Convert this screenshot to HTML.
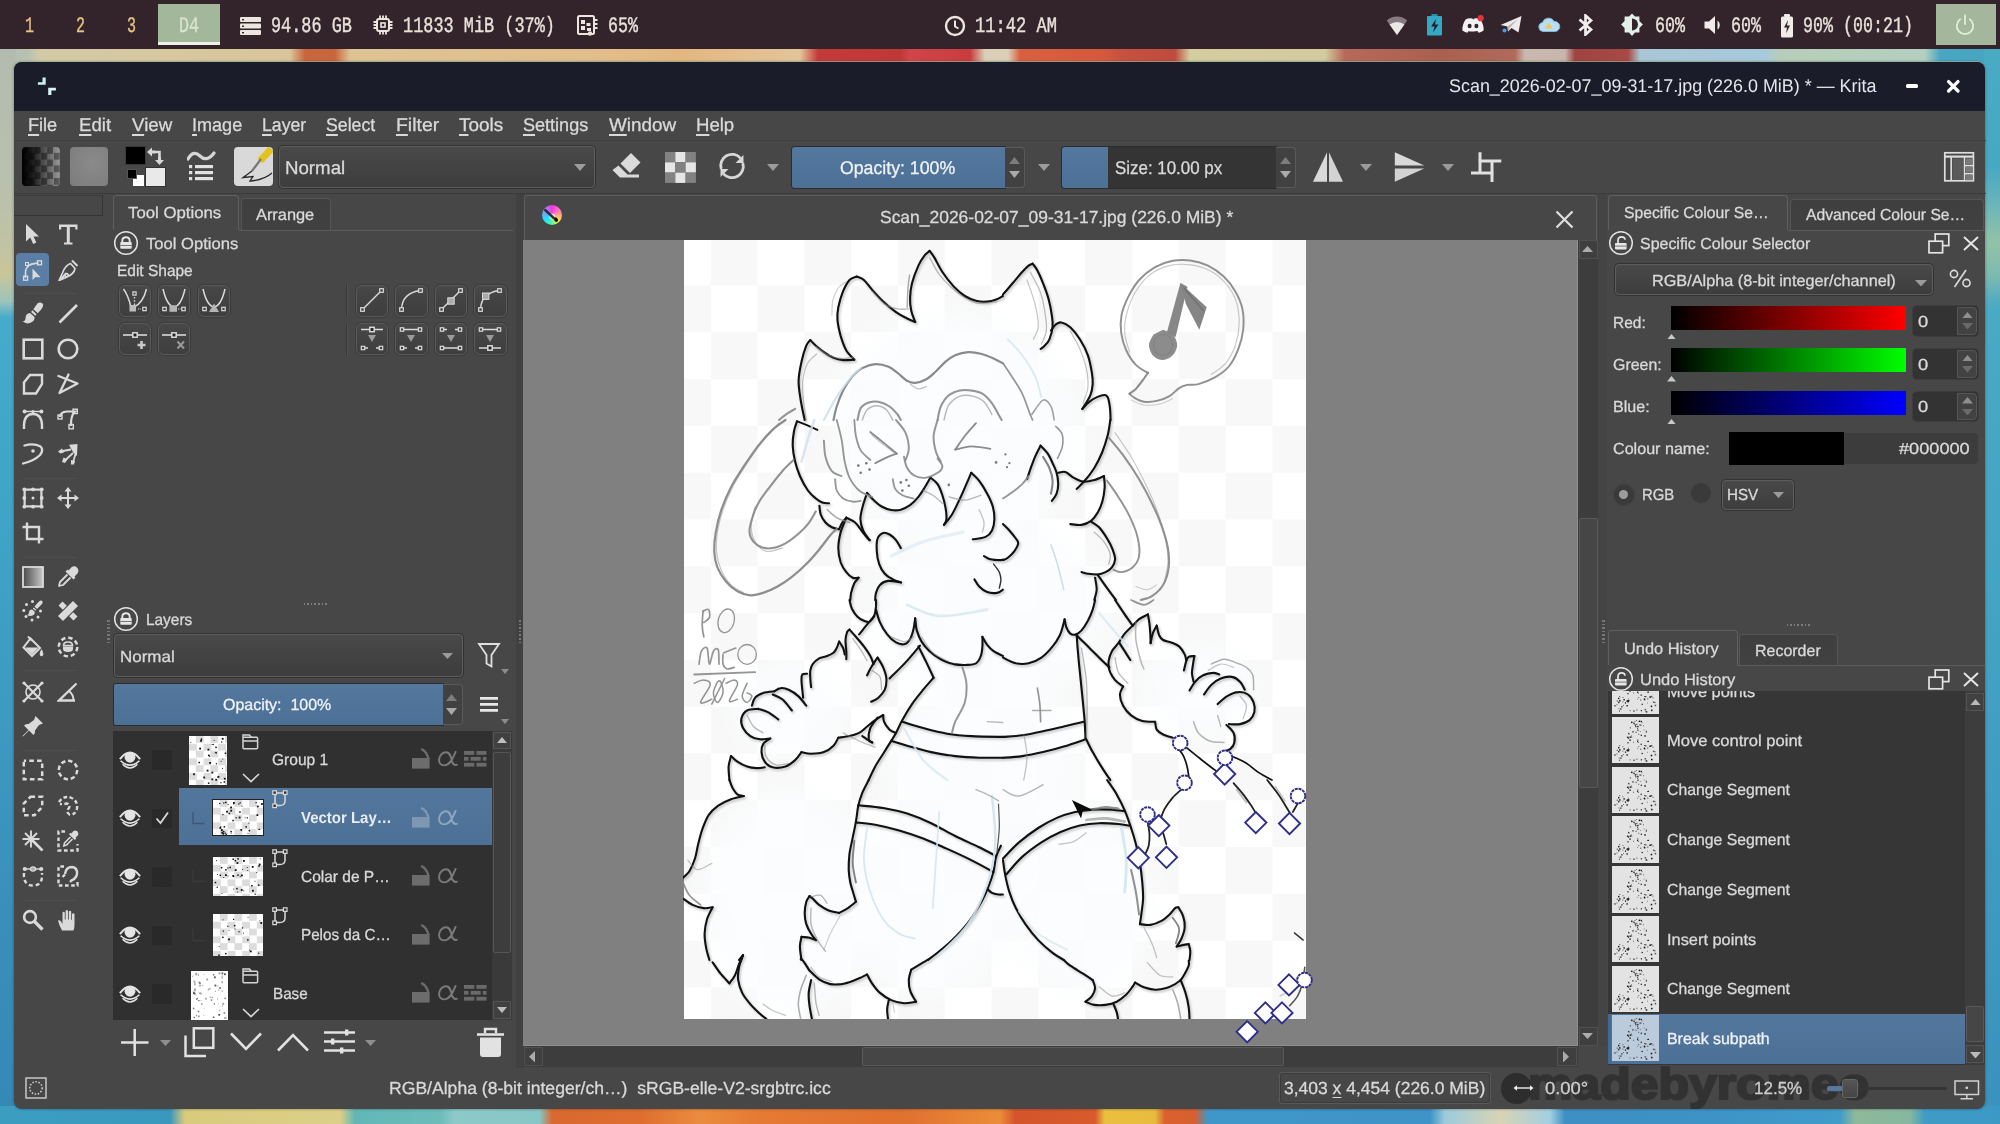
<!DOCTYPE html>
<html><head><meta charset="utf-8"><title>Krita</title><style>
html,body{margin:0;padding:0;}
body{width:2000px;height:1124px;overflow:hidden;position:relative;background:#3a8fb0;font-family:"Liberation Sans",sans-serif;color:#d8d8d8;}
.t{position:absolute;white-space:pre;line-height:1;transform-origin:0 50%;color:#d9d9d9;text-rendering:geometricPrecision;}
.s{-webkit-text-stroke:0.3px currentColor;}
.m{font-family:"Liberation Mono",monospace;-webkit-text-stroke:0.4px currentColor;}
div,svg,span{box-sizing:border-box;}

.combo{position:absolute;border:1px solid #5c5c5c;border-radius:4px;background:linear-gradient(#494949,#3d3d3d);box-shadow:0 0 0 1px #333;}
.sld{position:absolute;border-radius:3px;box-shadow:0 0 0 1px #2c2c2c;}
.blue{background:linear-gradient(#54789d,#4c7096);}

.tab{position:absolute;border:1px solid #5b5b5b;border-bottom:none;border-radius:4px 4px 0 0;}
.tab.on{background:#474747;border-color:#606060;}
.tab.off{background:linear-gradient(#3f3f3f,#414141);border-color:#555;}
.btn{position:absolute;border:1.5px solid #5a5a5a;border-radius:6px;background:linear-gradient(#474747,#3e3e3e);box-shadow:0 0 0 1px #3b3b3b;}
</style></head>
<body><div style="position:absolute;left:0px;top:49px;width:2000px;height:1075px;background:#47a0c2;"></div><div style="position:absolute;left:0px;top:49px;width:2000px;height:14px;background:linear-gradient(90deg,#b3bdb0 0.00%,#b9c1b0 1.40%,#d2c9a6 2.00%,#d6c8a0 7.50%,#d9c59b 14.50%,#c9653d 15.25%,#c9653d 16.75%,#ddc394 17.50%,#e2bd8b 30.00%,#e4b680 34.00%,#e3c49a 40.00%,#c43a3a 40.90%,#bf3838 45.00%,#d0454a 45.50%,#c93b3d 48.50%,#dccfb8 49.25%,#dccfb8 50.40%,#d9603f 51.00%,#d4583d 55.25%,#c8513f 56.00%,#bd4b3e 58.75%,#d5cda0 59.50%,#d3cb9f 66.25%,#b7685a 67.25%,#a9604f 72.00%,#b06a5c 75.75%,#c9b9ae 76.25%,#c9b5ad 78.25%,#a04343 78.75%,#a74a44 81.40%,#a9c6d6 82.00%,#a6c9dc 88.25%,#b7cdb9 89.00%,#b3cfc0 96.25%,#4aa6c2 97.00%,#46a4c4 100.00%);"></div><div style="position:absolute;left:0px;top:49px;width:16px;height:1075px;background:linear-gradient(#b2bcae 0,#b8c0ae 12%,#c0c3a4 18%,#c9c59a 21%,#9cc4bd 23.5%,#46aacb 25%,#3fa6c8 40%,#3d9bc2 60%,#3a8fba 80%,#3488b6 100%);"></div><div style="position:absolute;left:1984px;top:49px;width:16px;height:1075px;background:linear-gradient(#49aac4 0,#47a8c2 11%,#66b3bb 14%,#93c2a8 18%,#7dbab0 21%,#4aa9c3 24%,#44a4c3 50%,#3f9ac0 75%,#3b92bd 100%);"></div><div style="position:absolute;left:0px;top:1106px;width:2000px;height:18px;background:linear-gradient(90deg,#3b9ec1 0.00%,#3a98bd 8.50%,#d9cb7c 9.25%,#dccf88 17.00%,#62b7b6 17.75%,#6cbcba 22.00%,#8ccac8 22.75%,#86c6c4 27.00%,#d9682f 27.60%,#de6e30 32.00%,#ea8c3e 35.00%,#e57a33 38.00%,#e0702f 45.00%,#ea8d38 50.00%,#d5552b 50.75%,#d85a2c 54.75%,#e9c040 55.25%,#e8bb3e 57.75%,#d9622f 58.25%,#d6602f 59.75%,#3f97c9 60.40%,#3e93c7 71.50%,#9ccbdc 72.25%,#d8d4b4 75.00%,#a3cfe0 77.50%,#3d8fc4 78.25%,#3d92c6 85.00%,#409cc9 92.00%,#8fb99a 92.75%,#86b89f 95.50%,#3e9cc6 96.25%,#3c98c4 100.00%);"></div><div style="position:absolute;left:0px;top:0px;width:2000px;height:49px;background:#33232a;"></div><span class="t m" style="left:25.0px;top:16.00px;font-size:22.2px;transform:scaleX(0.6756);color:#e6c384;">1</span><span class="t m" style="left:76.0px;top:16.00px;font-size:22.2px;transform:scaleX(0.6756);color:#e6c384;">2</span><span class="t m" style="left:127.0px;top:16.00px;font-size:22.2px;transform:scaleX(0.6756);color:#e6c384;">3</span><div style="position:absolute;left:158px;top:4px;width:62px;height:41px;background:#a3b79a;border-bottom:3px solid #eef0e4;"></div><span class="t m" style="left:179.0px;top:16.00px;font-size:22.2px;transform:scaleX(0.7506);color:#d9e4cf;">D4</span><svg style="position:absolute;left:240px;top:17px;" width="22" height="18" viewBox="0 0 22 18"><g fill="#ece6de"><rect x="0" y="0" width="21" height="5" rx="1"/><rect x="0" y="6.5" width="21" height="5" rx="1"/><rect x="0" y="13" width="21" height="5" rx="1"/></g><g fill="#33232a"><rect x="2" y="2" width="2" height="1.4"/><rect x="2" y="8.5" width="2" height="1.4"/><rect x="2" y="15" width="2" height="1.4"/></g></svg><span class="t m" style="left:271.0px;top:16.00px;font-size:22.2px;transform:scaleX(0.7600);color:#e9e2da;">94.86 GB</span><svg style="position:absolute;left:373px;top:15px;" width="20" height="20" viewBox="0 0 20 20"><g fill="none" stroke="#ece6de" stroke-width="2"><rect x="4" y="4" width="12" height="12" rx="2"/><rect x="8" y="8" width="4" height="4" stroke-width="1.6"/></g><g stroke="#ece6de" stroke-width="1.8"><path d="M7 0.5V4M7 16V19.5M0.5 7H4M16 7H19.5"/><path d="M10 0.5V4M10 16V19.5M0.5 10H4M16 10H19.5"/><path d="M13 0.5V4M13 16V19.5M0.5 13H4M16 13H19.5"/></g></svg><span class="t m" style="left:403.0px;top:16.00px;font-size:22.2px;transform:scaleX(0.7606);color:#e9e2da;">11833 MiB (37%)</span><svg style="position:absolute;left:577px;top:15px;" width="22" height="22" viewBox="0 0 22 22"><g fill="none" stroke="#ece6de" stroke-width="2"><rect x="1" y="1" width="16" height="18" rx="1.5"/></g><g fill="#ece6de"><rect x="4" y="5" width="4" height="4"/><rect x="4" y="11" width="4" height="4"/><rect x="9.5" y="8" width="4" height="3"/><rect x="10" y="13" width="4" height="3"/><rect x="17" y="4" width="3.5" height="2"/><rect x="17" y="8" width="3.5" height="2"/><rect x="17" y="12" width="3.5" height="2"/><circle cx="13" cy="18.5" r="2.2"/></g></svg><span class="t m" style="left:608.0px;top:16.00px;font-size:22.2px;transform:scaleX(0.7506);color:#e9e2da;">65%</span><svg style="position:absolute;left:944px;top:15px;" width="22" height="22" viewBox="0 0 22 22"><circle cx="11" cy="11" r="9" fill="none" stroke="#ece6de" stroke-width="2.4"/><path d="M11 5.5V11.5L14.5 13.5" fill="none" stroke="#ece6de" stroke-width="2"/></svg><span class="t m" style="left:975.0px;top:16.00px;font-size:22.2px;transform:scaleX(0.7694);color:#e9e2da;">11:42 AM</span><svg style="position:absolute;left:1386px;top:14px;" width="22" height="22" viewBox="0 0 22 22"><path d="M11 21L0.8 6.5A15 15 0 0 1 21.2 6.5Z" fill="#857b80"/><path d="M11 21L3.6 10.6A11.5 11.5 0 0 1 18.4 10.6Z" fill="#ece8e6"/></svg><svg style="position:absolute;left:1426px;top:14px;" width="18" height="22" viewBox="0 0 18 22"><rect x="5.5" y="0" width="6" height="3" fill="#2b8ea6"/><rect x="1" y="2" width="15" height="19.5" rx="1" fill="#35a9c4"/><path d="M10 5L5 12.5H8.5L7 18.5L12.5 10.5H9Z" fill="#2a2030"/></svg><svg style="position:absolute;left:1461px;top:15px;" width="26" height="20" viewBox="0 0 26 20"><path d="M4.5 4.5Q8 2.6 11.5 3.6L12 4.5Q11.8 4.4 12.5 4.4L13 3.6Q16.5 2.6 19.5 4.5Q23 10 22.6 15.5Q20 17.6 17.6 17.8L16.4 16Q8.5 17 7.6 16L6.4 17.8Q4 17.6 1.4 15.5Q1 10 4.5 4.5Z" fill="#f3f1f2"/><ellipse cx="8.6" cy="11" rx="2" ry="2.3" fill="#33232a"/><ellipse cx="15.4" cy="11" rx="2" ry="2.3" fill="#33232a"/><circle cx="19.6" cy="3.2" r="3.1" fill="#e0363c"/></svg><svg style="position:absolute;left:1499px;top:14px;" width="24" height="20" viewBox="0 0 24 20"><path d="M1.5 11L22.5 2L19.5 18.5L12.5 14L9 17.5L8.5 12.5Z" fill="#eeeaea"/><path d="M8.5 12.5L19 5L11 13.5L9 17.5Z" fill="#b9b2b6"/><circle cx="5.5" cy="16.5" r="2" fill="#4b9be8"/></svg><svg style="position:absolute;left:1537px;top:17px;" width="24" height="16" viewBox="0 0 24 16"><path d="M6 14.5A4.5 4.5 0 0 1 5.5 5.6A6.2 6.2 0 0 1 17 4.6A5 5 0 0 1 18.5 14.5Z" fill="#b9def3" stroke="#7fb6dc" stroke-width="1"/><path d="M12 5.5L15.5 11.5H8.5Z" fill="#f1c84b"/></svg><svg style="position:absolute;left:1577px;top:14px;" width="18" height="22" viewBox="0 0 18 22"><path d="M2.5 5.5L14 15.5L8.5 20.5V1.5L14 6.5L2.5 16.5" fill="none" stroke="#f2eeee" stroke-width="2.7" stroke-linejoin="miter"/></svg><svg style="position:absolute;left:1620px;top:13px;" width="24" height="24" viewBox="0 0 24 24"><g fill="#e3efe9"><path d="M12 0.5L15 3.6L19.4 3.6L19.4 8L22.9 11.5L19.4 15L19.4 19.4L15 19.4L12 22.9L9 19.4L4.6 19.4L4.6 15L1.1 11.5L4.6 8L4.6 3.6L9 3.6Z"/></g><path d="M12 5.5A6 6 0 0 1 12 17.5Z" fill="#33232a"/></svg><span class="t m" style="left:1655.0px;top:16.00px;font-size:22.2px;transform:scaleX(0.7506);color:#e9e2da;">60%</span><svg style="position:absolute;left:1704px;top:15px;" width="18" height="20" viewBox="0 0 18 20"><path d="M0.5 6.5H5L11 1V19L5 13.5H0.5Z" fill="#f0ecea"/><path d="M13.5 5.5A5.5 5.5 0 0 1 13.5 14.5Z" fill="#f0ecea"/></svg><span class="t m" style="left:1731.0px;top:16.00px;font-size:22.2px;transform:scaleX(0.7506);color:#e9e2da;">60%</span><svg style="position:absolute;left:1780px;top:14px;" width="14" height="24" viewBox="0 0 14 24"><rect x="4" y="0" width="6" height="3" rx="1" fill="#f0ecea"/><rect x="1" y="2.5" width="12" height="21" rx="1.5" fill="#f0ecea"/><path d="M8 6L4 13.5H7L6 19.5L10 11.5H7Z" fill="#33232a"/></svg><span class="t m" style="left:1803.0px;top:16.00px;font-size:22.2px;transform:scaleX(0.7506);color:#e9e2da;">90% (00:21)</span><div style="position:absolute;left:1936px;top:4px;width:60px;height:41px;background:#a4b79c;"></div><svg style="position:absolute;left:1953px;top:13px;" width="24" height="24" viewBox="0 0 24 24"><path d="M7.2 6.2A8.2 8.2 0 1 0 16.8 6.2" fill="none" stroke="#e0f0d6" stroke-width="1.8" stroke-linecap="round"/><path d="M12 2.5V11" stroke="#e0f0d6" stroke-width="1.8" stroke-linecap="round"/></svg><div style="position:absolute;left:14.4px;top:62px;width:1971px;height:1047px;background:#474747;border-radius:8px;overflow:hidden;box-shadow:0 -1px 0 rgba(150,178,150,.7),0 0 3px rgba(0,0,0,.4);"><div style="position:absolute;left:0px;top:0px;width:1972px;height:48.5px;background:#1b1c2a;"></div></div><svg style="position:absolute;left:37px;top:76px;" width="20" height="20" viewBox="0 0 20 20"><path d="M5.5 1.4H8.7V8.7H0.9V6.2H5.5Z" fill="#c9f2ee"/><path d="M11.2 11.7H18.9V14.6H14.4V19H11.2Z" fill="#d6f6f6"/></svg><span class="t s" style="left:1449.2px;top:77.00px;font-size:18.4px;transform:scaleX(0.9747);color:#e4e4ea;-webkit-text-stroke:0;">Scan_2026-02-07_09-31-17.jpg (226.0 MiB) * — Krita</span><div style="position:absolute;left:1905.8px;top:84.4px;width:12.3px;height:3.8px;background:#fff;border-radius:1.5px;"></div><svg style="position:absolute;left:1946px;top:79px;" width="15" height="15" viewBox="0 0 15 15"><path d="M2.6 2.6L12 12M12 2.6L2.6 12" stroke="#fff" stroke-width="3.3" stroke-linecap="round"/></svg><span class="t s" style="left:28.2px;top:116.00px;font-size:18.4px;transform:scaleX(0.9849);"><u style="text-decoration-thickness:1.8px;text-underline-offset:3px">F</u>ile</span><span class="t s" style="left:79.2px;top:116.00px;font-size:18.4px;transform:scaleX(1.0156);"><u style="text-decoration-thickness:1.8px;text-underline-offset:3px">E</u>dit</span><span class="t s" style="left:132.2px;top:116.00px;font-size:18.4px;transform:scaleX(1.0164);"><u style="text-decoration-thickness:1.8px;text-underline-offset:3px">V</u>iew</span><span class="t s" style="left:192.2px;top:116.00px;font-size:18.4px;transform:scaleX(0.9816);"><u style="text-decoration-thickness:1.8px;text-underline-offset:3px">I</u>mage</span><span class="t s" style="left:262.2px;top:116.00px;font-size:18.4px;transform:scaleX(0.9603);"><u style="text-decoration-thickness:1.8px;text-underline-offset:3px">L</u>ayer</span><span class="t s" style="left:326.2px;top:116.00px;font-size:18.4px;transform:scaleX(0.9621);"><u style="text-decoration-thickness:1.8px;text-underline-offset:3px">S</u>elect</span><span class="t s" style="left:396.2px;top:116.00px;font-size:18.4px;transform:scaleX(1.0565);"><u style="text-decoration-thickness:1.8px;text-underline-offset:3px">F</u>ilter</span><span class="t s" style="left:459.2px;top:116.00px;font-size:18.4px;transform:scaleX(1.0290);"><u style="text-decoration-thickness:1.8px;text-underline-offset:3px">T</u>ools</span><span class="t s" style="left:523.2px;top:116.00px;font-size:18.4px;transform:scaleX(0.9807);"><u style="text-decoration-thickness:1.8px;text-underline-offset:3px">S</u>ettings</span><span class="t s" style="left:609.2px;top:116.00px;font-size:18.4px;transform:scaleX(1.0269);"><u style="text-decoration-thickness:1.8px;text-underline-offset:3px">W</u>indow</span><span class="t s" style="left:696.2px;top:116.00px;font-size:18.4px;transform:scaleX(1.0094);"><u style="text-decoration-thickness:1.8px;text-underline-offset:3px">H</u>elp</span><div style="position:absolute;left:14px;top:140px;width:1972px;height:1px;background:#404040;"></div><div style="position:absolute;left:22px;top:147px;width:38px;height:39px;border-radius:4px;overflow:hidden;background:linear-gradient(90deg,#000 0%,rgba(0,0,0,.85) 25%,rgba(0,0,0,0) 100%),repeating-conic-gradient(#9a9a9a 0 25%,#5e5e5e 0 50%) 0 0/12.6px 12.6px;"></div><div style="position:absolute;left:70px;top:147px;width:38px;height:39px;border-radius:4px;background:radial-gradient(circle at 60% 40%,#8a8a8a,#7c7c7c);"></div><div style="position:absolute;left:125.5px;top:147px;width:19px;height:17px;background:#000;box-shadow:0 0 0 1px #3a3a3a;"></div><div style="position:absolute;left:146px;top:167.5px;width:18.5px;height:18.5px;background:#e9e9e9;box-shadow:0 0 0 1px #333;"></div><div style="position:absolute;left:133px;top:175px;width:10.5px;height:10.5px;background:#fff;"></div><div style="position:absolute;left:126.5px;top:168.5px;width:10.5px;height:10.5px;background:#000;border:1px solid #555;"></div><svg style="position:absolute;left:146px;top:147px;" width="19" height="19" viewBox="0 0 19 19"><path d="M1 5L6 0.5V3.5H9V6.5H6V9.5Z" fill="#d8d8d8"/><path d="M13.5 18L9 13H12V10H15V13H18Z" fill="#d8d8d8"/><path d="M8 5H13.5V11" fill="none" stroke="#d8d8d8" stroke-width="2.6"/></svg><svg style="position:absolute;left:187px;top:150px;" width="29" height="32" viewBox="0 0 29 32"><path d="M1 9C5 2 9 2 13 6S22 10 27 3" fill="none" stroke="#d6d6d6" stroke-width="3.2" stroke-linecap="round"/><g fill="#e2e2e2"><rect x="2" y="15" width="3.2" height="3.2"/><rect x="8" y="15" width="18" height="3.2"/><rect x="2" y="21" width="3.2" height="3.2"/><rect x="8" y="21" width="18" height="3.2"/><rect x="2" y="27" width="3.2" height="3.2"/><rect x="8" y="27" width="18" height="3.2"/></g></svg><div style="position:absolute;left:234px;top:147px;width:38.5px;height:39px;border-radius:4px;background:#d9d9d9;overflow:hidden;"><svg style="position:absolute;left:0px;top:0px;" width="38.5" height="39" viewBox="0 0 38.5 39"><path d="M37 2L26 14" stroke="#e3c21a" stroke-width="7" stroke-linecap="butt"/><path d="M27 12L18 24" stroke="#777" stroke-width="2.2"/><path d="M18 24L9 30.5L19 29.5L16 34Q30 33 38 26" fill="none" stroke="#2a2a2a" stroke-width="1.3"/></svg></div><div class="combo" style="position:absolute;left:279px;top:145.5px;width:316px;height:42.5px;"></div><span class="t s" style="left:285.2px;top:159.00px;font-size:18.4px;transform:scaleX(1.0152);">Normal</span><svg style="position:absolute;left:574px;top:163.5px;" width="12" height="7" viewBox="0 0 12 7"><path d="M0 0H12L6.0 7Z" fill="#9b9b9b"/></svg><svg style="position:absolute;left:611px;top:152px;" width="30" height="28" viewBox="0 0 30 28"><path d="M20 1L29.5 10.5L19 21L9.5 11.5Z" fill="#dadada"/><path d="M7.5 13.5L16.5 22.5H28V25.5H9L1.5 18Z" fill="#dadada"/></svg><svg style="position:absolute;left:665px;top:152px;" width="31" height="31" viewBox="0 0 31 31"><rect x="0.0" y="0.0" width="10.3" height="10.3" fill="#828282"/><rect x="10.3" y="0.0" width="10.3" height="10.3" fill="#e6e6e6"/><rect x="20.6" y="0.0" width="10.3" height="10.3" fill="#828282"/><rect x="0.0" y="10.3" width="10.3" height="10.3" fill="#e6e6e6"/><rect x="10.3" y="10.3" width="10.3" height="10.3" fill="#828282"/><rect x="20.6" y="10.3" width="10.3" height="10.3" fill="#e6e6e6"/><rect x="0.0" y="20.6" width="10.3" height="10.3" fill="#828282"/><rect x="10.3" y="20.6" width="10.3" height="10.3" fill="#e6e6e6"/><rect x="20.6" y="20.6" width="10.3" height="10.3" fill="#828282"/></svg><svg style="position:absolute;left:718px;top:152px;" width="28" height="28" viewBox="0 0 28 28"><path d="M3.2 17A11.3 11.3 0 0 1 22.5 6.2" fill="none" stroke="#d8d8d8" stroke-width="2.8"/><path d="M24.8 11A11.3 11.3 0 0 1 5.5 21.8" fill="none" stroke="#d8d8d8" stroke-width="2.8"/><path d="M25.5 3V11H17.5Z" fill="#d8d8d8"/><path d="M2.5 25V17H10.5Z" fill="#d8d8d8"/></svg><svg style="position:absolute;left:767px;top:164px;" width="12" height="7" viewBox="0 0 12 7"><path d="M0 0H12L6.0 7Z" fill="#9b9b9b"/></svg><div class="sld blue" style="position:absolute;left:792px;top:146.5px;width:213px;height:41px;border-radius:3px 0 0 3px;"></div><span class="t s" style="left:839.7px;top:159.00px;font-size:18.4px;transform:scaleX(0.9627);color:#eef2f6;">Opacity: 100%</span><div style="position:absolute;left:1005px;top:146.5px;width:20px;height:41px;border:1px solid #5a5a5a;border-left:none;border-radius:0 4px 4px 0;background:#414141;"></div><svg style="position:absolute;left:1008.5px;top:157.0px;" width="11" height="7" viewBox="0 0 11 7"><path d="M0 7H11L5.5 0Z" fill="#7d7d7d"/></svg><svg style="position:absolute;left:1008.5px;top:171.0px;" width="11" height="7" viewBox="0 0 11 7"><path d="M0 0H11L5.5 7Z" fill="#a9a9a9"/></svg><svg style="position:absolute;left:1038px;top:164px;" width="12" height="7" viewBox="0 0 12 7"><path d="M0 0H12L6.0 7Z" fill="#9b9b9b"/></svg><div class="sld" style="position:absolute;left:1062px;top:146.5px;width:214px;height:41px;background:#343434;border-radius:3px 0 0 3px;"></div><div class="blue" style="position:absolute;left:1062px;top:146.5px;width:46px;height:41px;position:absolute;border-radius:3px 0 0 3px;"></div><span class="t s" style="left:1115.2px;top:159.00px;font-size:18.4px;transform:scaleX(0.9193);">Size: 10.00 px</span><div style="position:absolute;left:1276px;top:146.5px;width:20px;height:41px;border:1px solid #5a5a5a;border-left:none;border-radius:0 4px 4px 0;background:#414141;"></div><svg style="position:absolute;left:1279.5px;top:157.0px;" width="11" height="7" viewBox="0 0 11 7"><path d="M0 7H11L5.5 0Z" fill="#7d7d7d"/></svg><svg style="position:absolute;left:1279.5px;top:171.0px;" width="11" height="7" viewBox="0 0 11 7"><path d="M0 0H11L5.5 7Z" fill="#a9a9a9"/></svg><svg style="position:absolute;left:1312px;top:152px;" width="32" height="30" viewBox="0 0 32 30"><path d="M15 0.3V29.7H1Z" fill="#d9d9d9"/><path d="M17 0.3V29.7H31Z" fill="#d3d3d3"/></svg><svg style="position:absolute;left:1360px;top:164px;" width="12" height="7" viewBox="0 0 12 7"><path d="M0 0H12L6.0 7Z" fill="#9b9b9b"/></svg><svg style="position:absolute;left:1394px;top:152px;" width="31" height="30" viewBox="0 0 31 30"><path d="M0.8 13.5H30.3L0.8 0.3Z" fill="#d9d9d9"/><path d="M0.8 16.4H30.3L0.8 29.7Z" fill="#d3d3d3"/></svg><svg style="position:absolute;left:1442px;top:164px;" width="12" height="7" viewBox="0 0 12 7"><path d="M0 0H12L6.0 7Z" fill="#9b9b9b"/></svg><svg style="position:absolute;left:1470px;top:151px;" width="32" height="32" viewBox="0 0 32 32"><path d="M10 1.3V23.3M8.4 10H31.3M1 22H23.6M22 8.7V31" fill="none" stroke="#e0e0e0" stroke-width="3"/></svg><svg style="position:absolute;left:1943px;top:151px;" width="32" height="32" viewBox="0 0 32 32"><rect x="1.8" y="1.8" width="28.6" height="28" fill="none" stroke="#dedede" stroke-width="1.7"/><path d="M2 5.6H30" stroke="#dedede" stroke-width="2.2"/><path d="M8.2 6V30M21.4 6V30M21.4 14.6H30M21.4 22.8H30" fill="none" stroke="#dedede" stroke-width="1.6"/><rect x="9.5" y="7.5" width="11" height="21.5" fill="#5a5a5a"/><rect x="22.5" y="7.5" width="7" height="6" fill="#7a7a7a"/><rect x="22.5" y="15.8" width="7" height="6" fill="#7a7a7a"/><rect x="22.5" y="24" width="7" height="5.2" fill="#7a7a7a"/></svg><div style="position:absolute;left:14px;top:193px;width:1972px;height:1px;background:#3b3b3b;"></div><div style="position:absolute;left:14px;top:195px;width:88.5px;height:21px;border-right:1.5px solid #343434;border-bottom:1.5px solid #343434;border-top:1px solid #3c3c3c;"></div><div style="position:absolute;left:24px;top:292.5px;width:52px;height:1px;background:#4f4f4f;"></div><div style="position:absolute;left:24px;top:478px;width:52px;height:1px;background:#4f4f4f;"></div><div style="position:absolute;left:24px;top:557px;width:52px;height:1px;background:#4f4f4f;"></div><div style="position:absolute;left:24px;top:670px;width:52px;height:1px;background:#4f4f4f;"></div><div style="position:absolute;left:24px;top:750px;width:52px;height:1px;background:#4f4f4f;"></div><div style="position:absolute;left:24px;top:900px;width:52px;height:1px;background:#4f4f4f;"></div><svg style="position:absolute;left:21.5px;top:223px;" width="22" height="22" viewBox="0 0 22 22"><path d="M4 1V18.5L8.3 14.6L11.2 21L14.3 19.6L11.5 13.4H17Z" fill="#dadada"/></svg><svg style="position:absolute;left:56.5px;top:223px;" width="22" height="22" viewBox="0 0 22 22"><path d="M2 1.5H20.5V6.5H18.3V4H12.8V19.5H15.5V21.5H7V19.5H9.8V4H4.2V6.5H2Z" fill="#dadada"/></svg><div style="position:absolute;left:16px;top:253px;width:33px;height:33px;background:#5b7fa4;border-radius:4px;"></div><svg style="position:absolute;left:21.5px;top:258.5px;" width="22" height="22" viewBox="0 0 22 22"><path d="M3.5 19V13Q4 4.5 16.5 4" fill="none" stroke="#dadada" stroke-width="1.6"/><path d="M5.5 5H13" fill="none" stroke="#dadada" stroke-width="1" stroke-dasharray="1.5 1.5"/><rect x="1.6" y="17.2" width="4" height="4" fill="none" stroke="#dadada" stroke-width="1.3"/><rect x="15.5" y="1.8" width="4" height="4" fill="none" stroke="#dadada" stroke-width="1.3"/><rect x="3.5" y="3.5" width="3" height="3" fill="none" stroke="#dadada" stroke-width="1"/><path d="M10.5 9.5V21L13.6 18L18.5 18.3Z" fill="#dadada"/></svg><svg style="position:absolute;left:56.5px;top:258.5px;" width="22" height="22" viewBox="0 0 22 22"><path d="M13.5 4.5L18 9.5Q17 15 10 18L2 21.5L5.5 14Q8 6.5 13.5 4.5Z M9.5 14.5A1.6 1.6 0 1 0 9.6 14.5L3.5 20.5" fill="none" stroke="#dadada" stroke-width="1.7" stroke-linejoin="round"/><path d="M15 1.5L20.5 7" fill="none" stroke="#dadada" stroke-width="2"/><path d="M3 20.5L9 14" fill="none" stroke="#dadada" stroke-width="1.3"/></svg><svg style="position:absolute;left:21.5px;top:302px;" width="22" height="22" viewBox="0 0 22 22"><path d="M16.5 0.8Q19.5 -0.2 21 2Q21.6 4.5 19.5 7L15.8 11.2L11.4 7.2L14.5 2.8Q15.3 1.3 16.5 0.8Z" fill="#dadada"/><path d="M10.4 8.3L14.6 12.3L13.3 13.8L9 9.9Z" fill="#dadada"/><path d="M8 11Q3.5 11.5 3.6 16Q3.5 19 0.5 19.6Q5.5 23 10 20Q13.5 17.5 12.3 14.8Z" fill="#dadada"/></svg><svg style="position:absolute;left:56.5px;top:302px;" width="22" height="22" viewBox="0 0 22 22"><path d="M2.5 20.5L20 3" fill="none" stroke="#dadada" stroke-width="2.6"/></svg><svg style="position:absolute;left:21.5px;top:337.5px;" width="22" height="22" viewBox="0 0 22 22"><rect x="1.7" y="1.7" width="18.6" height="18.6" fill="none" stroke="#dadada" stroke-width="2.6"/></svg><svg style="position:absolute;left:56.5px;top:337.5px;" width="22" height="22" viewBox="0 0 22 22"><circle cx="11" cy="11" r="9.3" fill="none" stroke="#dadada" stroke-width="2.6"/></svg><svg style="position:absolute;left:21.5px;top:372.5px;" width="22" height="22" viewBox="0 0 22 22"><path d="M8 2H20V11L14 20.5H2V9.5Z" fill="none" stroke="#dadada" stroke-width="2.4" stroke-linejoin="miter"/></svg><svg style="position:absolute;left:56.5px;top:372.5px;" width="22" height="22" viewBox="0 0 22 22"><path d="M11.5 1.5L2.5 20L20.5 10.5L1.5 3" fill="none" stroke="#dadada" stroke-width="2.3" stroke-linejoin="round" stroke-linecap="round"/></svg><svg style="position:absolute;left:21.5px;top:408px;" width="22" height="22" viewBox="0 0 22 22"><path d="M2 21V17Q2.5 6 11 6Q19.5 6 20 17V21" fill="none" stroke="#dadada" stroke-width="2.4"/><path d="M3 3.5H19" fill="none" stroke="#dadada" stroke-width="1.4"/><circle cx="2.6" cy="3.5" r="2" fill="#dadada"/><circle cx="19.4" cy="3.5" r="2" fill="#dadada"/><circle cx="11" cy="3.5" r="1.6" fill="#dadada"/></svg><svg style="position:absolute;left:56.5px;top:408px;" width="22" height="22" viewBox="0 0 22 22"><path d="M3 9Q3.5 3.8 10 3.5H18Q13.5 8 14 18" fill="none" stroke="#dadada" stroke-width="2.2"/><rect x="1" y="7" width="4" height="4" fill="none" stroke="#dadada" stroke-width="1.4"/><rect x="16" y="1.2" width="4.3" height="4.3" fill="none" stroke="#dadada" stroke-width="1.4"/><rect x="12" y="16.5" width="4.3" height="4.3" fill="none" stroke="#dadada" stroke-width="1.4"/></svg><svg style="position:absolute;left:21.5px;top:443px;" width="22" height="22" viewBox="0 0 22 22"><path d="M2.5 2.5Q12 0 18.5 3.5Q22 7 18 12Q12 18 1 20.5" fill="none" stroke="#dadada" stroke-width="2.3" stroke-linecap="round"/><circle cx="11" cy="8" r="1.8" fill="#dadada"/></svg><svg style="position:absolute;left:56.5px;top:443px;" width="22" height="22" viewBox="0 0 22 22"><path d="M20.5 1L20 13L16.5 10L12 1.8Z" fill="#dadada"/><path d="M14 6.5L6 8M16 10L8.5 17M18.5 11L16 19.5" fill="none" stroke="#dadada" stroke-width="1.8"/><path d="M1 8.5L5 5.5L7 9.5L3.5 10.5Z M5 19L6.5 14.5L10.5 16.5L8 20Z M14 21.5L14 17L18 18L17 21.5Z" fill="#dadada"/></svg><svg style="position:absolute;left:21.5px;top:487px;" width="22" height="22" viewBox="0 0 22 22"><rect x="2.6" y="2.6" width="16.8" height="16.8" fill="none" stroke="#dadada" stroke-width="2.2"/><circle cx="2.3" cy="2.3" r="1.9" fill="#dadada"/><circle cx="11" cy="2.3" r="1.9" fill="#dadada"/><circle cx="19.7" cy="2.3" r="1.9" fill="#dadada"/><circle cx="2.3" cy="11" r="1.9" fill="#dadada"/><circle cx="19.7" cy="11" r="1.9" fill="#dadada"/><circle cx="2.3" cy="19.7" r="1.9" fill="#dadada"/><circle cx="11" cy="19.7" r="1.9" fill="#dadada"/><circle cx="19.7" cy="19.7" r="1.9" fill="#dadada"/><circle cx="11" cy="11" r="1.5" fill="#dadada"/></svg><svg style="position:absolute;left:56.5px;top:487px;" width="22" height="22" viewBox="0 0 22 22"><path d="M11 2V20M2 11H20" fill="none" stroke="#dadada" stroke-width="2"/><path d="M11 0L14.5 4.5H7.5Z M11 22L14.5 17.5H7.5Z M0 11L4.5 7.5V14.5Z M22 11L17.5 7.5V14.5Z" fill="#dadada"/></svg><svg style="position:absolute;left:21.5px;top:521.5px;" width="22" height="22" viewBox="0 0 22 22"><path d="M5 0.5V17H21.5M0.5 5H17V21.5" fill="none" stroke="#dadada" stroke-width="2.4"/></svg><svg style="position:absolute;left:21.5px;top:566px;" width="22" height="22" viewBox="0 0 22 22"><defs><linearGradient id="gt"><stop offset="0" stop-color="#4a4a4a"/><stop offset="1" stop-color="#c8c8c8"/></linearGradient></defs><rect x="1" y="1" width="20" height="20" fill="url(#gt)" stroke="#dadada" stroke-width="1.8"/></svg><svg style="position:absolute;left:56.5px;top:566px;" width="22" height="22" viewBox="0 0 22 22"><path d="M14.5 1.2Q17.5 -0.8 20.2 1.8Q22.5 4.5 20.5 7.5L17.5 10.5L18.5 11.5L16.5 13.5L8.5 5.5L10.5 3.5L11.5 4.5Z" fill="#dadada"/><path d="M10.5 8.5L3 16L2 20L6 19L13.5 11.5" fill="none" stroke="#dadada" stroke-width="1.8" stroke-linejoin="round"/></svg><svg style="position:absolute;left:21.5px;top:600px;" width="22" height="22" viewBox="0 0 22 22"><circle cx="4.5" cy="4.5" r="1.5" fill="#dadada"/><circle cx="1.8" cy="10.5" r="1.5" fill="#dadada"/><circle cx="4" cy="16.5" r="1.5" fill="#dadada"/><circle cx="10" cy="20" r="1.5" fill="#dadada"/><circle cx="16" cy="17" r="1.5" fill="#dadada"/><circle cx="18.5" cy="11" r="1.5" fill="#dadada"/><circle cx="10.5" cy="1.5" r="1.5" fill="#dadada"/><path d="M19.5 0.5Q21.5 1.5 20 4L15 9L12.5 6.5L17 1.5Q18.3 0.2 19.5 0.5Z" fill="#dadada"/><path d="M11.8 7.5L14.2 9.8L13.2 10.8L10.8 8.5Z" fill="#dadada"/><path d="M10 9.5Q7 9.5 7 12.5Q7 14.5 5 15Q8.5 17 11.5 15Q13.5 13.5 12.5 11.5Z" fill="#dadada"/></svg><svg style="position:absolute;left:56.5px;top:600px;" width="22" height="22" viewBox="0 0 22 22"><path d="M16 1L21 6L6 21L1 16Z" fill="#dadada"/><path d="M5.5 1.5L9.8 5.8L5.8 9.8L1.5 5.5Z M16.2 12.2L20.5 16.5L16.5 20.5L12.2 16.2Z" fill="#dadada"/></svg><svg style="position:absolute;left:21.5px;top:636px;" width="22" height="22" viewBox="0 0 22 22"><path d="M8.5 2.5L18 12L10 20L1.5 11.5Z" fill="none" stroke="#dadada" stroke-width="2"/><path d="M3 11.5H16.5L10 18.5Z" fill="#dadada"/><path d="M6 0.5L10 4.5" fill="none" stroke="#dadada" stroke-width="2"/><path d="M19.5 13Q22 17 21 19.5Q19.5 21 18 19.5Q17 17 19.5 13Z" fill="#dadada"/></svg><svg style="position:absolute;left:56.5px;top:636px;" width="22" height="22" viewBox="0 0 22 22"><circle cx="11" cy="11" r="9.3" fill="none" stroke="#dadada" stroke-width="2.5" stroke-dasharray="4.4 2.9"/><path d="M6.5 9.5Q6.5 6 11 6Q15.5 6 15.5 9.5Z" fill="none" stroke="#dadada" stroke-width="1.6"/><path d="M6 10.5H16V13Q16 16 11 16Q6 16 6 13Z" fill="#dadada"/></svg><svg style="position:absolute;left:21.5px;top:680.5px;" width="22" height="22" viewBox="0 0 22 22"><circle cx="11" cy="11" r="7" fill="none" stroke="#dadada" stroke-width="1.6"/><path d="M1.5 1.5L20.5 20.5M20.5 1.5L1.5 20.5" fill="none" stroke="#dadada" stroke-width="2.2"/><circle cx="2" cy="2" r="1.6" fill="#dadada"/><circle cx="20" cy="2" r="1.6" fill="#dadada"/><circle cx="2" cy="20" r="1.6" fill="#dadada"/><circle cx="20" cy="20" r="1.6" fill="#dadada"/></svg><svg style="position:absolute;left:56.5px;top:680.5px;" width="22" height="22" viewBox="0 0 22 22"><path d="M19.5 2.5L2 19.5H18" fill="none" stroke="#dadada" stroke-width="2.3" stroke-linejoin="miter"/><path d="M12 10Q16.5 13.5 16.5 19.5" fill="none" stroke="#dadada" stroke-width="2"/></svg><svg style="position:absolute;left:21.5px;top:714.5px;" width="22" height="22" viewBox="0 0 22 22"><path d="M13.5 1L21 8.5L17 10L13 15.5Q13.5 18.5 11.5 20L7 15.5L1 21.5L0.5 21L6.5 15L2 10.5Q3.5 8.5 6.5 9L12 5Z" fill="#dadada"/></svg><svg style="position:absolute;left:21.5px;top:758.5px;" width="22" height="22" viewBox="0 0 22 22"><rect x="1.8" y="1.8" width="18.4" height="18.4" fill="none" stroke="#dadada" stroke-width="2.5" stroke-dasharray="4.6 3.2" stroke-dashoffset="2.3"/></svg><svg style="position:absolute;left:56.5px;top:758.5px;" width="22" height="22" viewBox="0 0 22 22"><circle cx="11" cy="11" r="9.2" fill="none" stroke="#dadada" stroke-width="2.5" stroke-dasharray="4.4 2.8"/></svg><svg style="position:absolute;left:21.5px;top:794.5px;" width="22" height="22" viewBox="0 0 22 22"><path d="M8.5 1.8H20.2V12L12.5 20.2H1.8V8.5Z" fill="none" stroke="#dadada" stroke-width="2.5" stroke-dasharray="4.6 3.2"/></svg><svg style="position:absolute;left:56.5px;top:794.5px;" width="22" height="22" viewBox="0 0 22 22"><path d="M2 7Q6 0.5 13.5 2.5Q21 5.5 20 13.5Q18 20.5 12.5 19.5Q8.5 17 12 13Q13.5 9 9.5 8.5Q6 9.5 3 9" fill="none" stroke="#dadada" stroke-width="2.4" stroke-dasharray="3.8 2.4"/></svg><svg style="position:absolute;left:21.5px;top:829.5px;" width="22" height="22" viewBox="0 0 22 22"><path d="M9 9L20.5 20.5" fill="none" stroke="#dadada" stroke-width="2.6"/><path d="M9 0.5V17.5M0.5 9H17.5M3 3L15 15M15 3L3 15" fill="none" stroke="#dadada" stroke-width="1.9"/></svg><svg style="position:absolute;left:56.5px;top:829.5px;" width="22" height="22" viewBox="0 0 22 22"><path d="M8 1.5H1.5V20.5H20.5V14" fill="none" stroke="#dadada" stroke-width="2.4" stroke-dasharray="3.6 2.6"/><path d="M16.5 1Q18.5 -0.2 20.5 1.5Q22 3.5 20.8 5.5L18.5 7.8L19.3 8.6L17.8 10L12 4.2L13.5 2.7L14.3 3.5Z" fill="#dadada"/><path d="M13.5 7L7.5 13L6.8 15.8L9.5 15L15.5 9" fill="none" stroke="#dadada" stroke-width="1.5"/></svg><svg style="position:absolute;left:21.5px;top:864.5px;" width="22" height="22" viewBox="0 0 22 22"><path d="M2 8Q1 20.5 11 20.5Q21 20.5 20 8" fill="none" stroke="#dadada" stroke-width="2.4" stroke-dasharray="4 2.8"/><path d="M3 4H19" fill="none" stroke="#dadada" stroke-width="1.4"/><circle cx="2.8" cy="4" r="2.1" fill="#dadada"/><circle cx="19.2" cy="4" r="2.1" fill="#dadada"/><ellipse cx="11" cy="4" rx="2.6" ry="2" fill="none" stroke="#dadada" stroke-width="1.3"/></svg><svg style="position:absolute;left:56.5px;top:864.5px;" width="22" height="22" viewBox="0 0 22 22"><path d="M7 1.5H1.5V20.5H20.5V17" fill="none" stroke="#dadada" stroke-width="2.4" stroke-dasharray="3.6 2.6"/><path d="M8 9Q9 2 15 2Q20.5 2.5 20 9Q19.5 13 14.5 15.5" fill="none" stroke="#dadada" stroke-width="2.4"/><path d="M8 9.5L5.5 12M15 14.8L13 17" fill="none" stroke="#dadada" stroke-width="2.4"/></svg><svg style="position:absolute;left:21.5px;top:909px;" width="22" height="22" viewBox="0 0 22 22"><circle cx="8" cy="8" r="5.9" fill="none" stroke="#dadada" stroke-width="2.6"/><path d="M12.5 12.5L20.5 20.5" fill="none" stroke="#dadada" stroke-width="3.2"/></svg><svg style="position:absolute;left:56.5px;top:909px;" width="22" height="22" viewBox="0 0 22 22"><path d="M5 21.5Q2 16 1 11.5Q2.5 10.5 4 12.5L5.5 15V3.5Q6.5 2 7.8 3.5V10.5H8.6V1.8Q9.8 0.3 11 1.8V10.5H11.8V2.5Q13 1 14.2 2.5V10.8H15V5Q16.3 3.6 17.5 5V16Q17.5 19 16.5 21.5Z" fill="#dadada"/></svg><div style="position:absolute;left:107px;top:620.0px;width:3px;height:1.6px;background:#777;"></div><div style="position:absolute;left:107px;top:623.6px;width:3px;height:1.6px;background:#777;"></div><div style="position:absolute;left:107px;top:627.2px;width:3px;height:1.6px;background:#777;"></div><div style="position:absolute;left:107px;top:630.8px;width:3px;height:1.6px;background:#777;"></div><div style="position:absolute;left:107px;top:634.4px;width:3px;height:1.6px;background:#777;"></div><div style="position:absolute;left:107px;top:638.0px;width:3px;height:1.6px;background:#777;"></div><div style="position:absolute;left:107px;top:641.6px;width:3px;height:1.6px;background:#777;"></div><div class="tab on" style="position:absolute;left:113px;top:194.5px;width:126px;height:35.5px;"></div><div class="tab off" style="position:absolute;left:240.5px;top:198px;width:90px;height:32px;"></div><div style="position:absolute;left:239px;top:229.5px;width:274px;height:1px;background:#5b5b5b;"></div><span class="t s" style="left:128.2px;top:206.00px;font-size:16px;transform:scaleX(1.0479);">Tool Options</span><span class="t s" style="left:255.7px;top:208.00px;font-size:16px;transform:scaleX(1.0224);">Arrange</span><svg style="position:absolute;left:113px;top:230px;" width="26" height="26" viewBox="0 0 26 26"><circle cx="13" cy="13" r="11.3" fill="none" stroke="#e2e2e2" stroke-width="1.5"/><rect x="7.3" y="12" width="11.4" height="6.8" rx="0.8" fill="#e6e6e6"/><path d="M9.3 12V11Q9.3 7.3 13 7.3Q16.7 7.3 16.7 11V12" fill="none" stroke="#e6e6e6" stroke-width="1.9"/><rect x="7.3" y="15" width="11.4" height="1" fill="#777"/></svg><span class="t s" style="left:146.2px;top:237.00px;font-size:16px;transform:scaleX(1.0367);">Tool Options</span><span class="t s" style="left:117.2px;top:264.00px;font-size:16px;transform:scaleX(0.9670);">Edit Shape</span><div class="btn" style="position:absolute;left:118.5px;top:284.5px;width:32.5px;height:32px;"><svg width="30" height="29" viewBox="0 0 30 29" style="position:absolute;left:0;top:0"><path d="M3.5 3Q8 9 11 21" fill="none" stroke="#dadada" stroke-width="1.5"/><path d="M26.5 3Q23 17 14 21" fill="none" stroke="#dadada" stroke-width="1.5"/><path d="M14.5 11V19" fill="none" stroke="#dadada" stroke-width="1.4" stroke-dasharray="1.6 1.6"/><rect x="12.9" y="5.9" width="3.2" height="3.2" fill="#444" stroke="#dadada" stroke-width="1.2"/><rect x="9.5" y="19" width="6.5" height="6.5" fill="#bdbdbd"/><path d="M18 23H21" fill="none" stroke="#dadada" stroke-width="1.2" stroke-dasharray="1.2 1.2"/><rect x="22.8" y="21.3" width="3.4" height="3.4" fill="#444" stroke="#dadada" stroke-width="1.2"/></svg></div><div class="btn" style="position:absolute;left:157.5px;top:284.5px;width:32.5px;height:32px;"><svg width="30" height="29" viewBox="0 0 30 29" style="position:absolute;left:0;top:0"><path d="M4 3Q8 20 15 21Q22 20 26 3" fill="none" stroke="#dadada" stroke-width="1.5"/><rect x="10.5" y="19.3" width="7.5" height="6.5" fill="#b5b5b5"/><rect x="3.8" y="21.3" width="3.4" height="3.4" fill="#444" stroke="#dadada" stroke-width="1.2"/><rect x="22.8" y="21.3" width="3.4" height="3.4" fill="#444" stroke="#dadada" stroke-width="1.2"/><path d="M19 23H22" fill="none" stroke="#dadada" stroke-width="1.2" stroke-dasharray="1.2 1.2"/></svg></div><div class="btn" style="position:absolute;left:197.5px;top:284.5px;width:32.5px;height:32px;"><svg width="30" height="29" viewBox="0 0 30 29" style="position:absolute;left:0;top:0"><path d="M4 3Q8 20 15 21Q22 20 26 3" fill="none" stroke="#dadada" stroke-width="1.5"/><path d="M10 26L15 17.5L20 26Z" fill="#b5b5b5"/><rect x="3.8" y="21.3" width="3.4" height="3.4" fill="#444" stroke="#dadada" stroke-width="1.2"/><rect x="22.8" y="21.3" width="3.4" height="3.4" fill="#444" stroke="#dadada" stroke-width="1.2"/></svg></div><div class="btn" style="position:absolute;left:118.5px;top:323px;width:32.5px;height:32px;"><svg width="30" height="29" viewBox="0 0 30 29" style="position:absolute;left:0;top:0"><path d="M3 11H27" fill="none" stroke="#dadada" stroke-width="1.6"/><rect x="12.8" y="8.8" width="4.4" height="4.4" fill="#222" stroke="#dadada" stroke-width="1.5"/><path d="M21.5 17V25M17.5 21H25.5" stroke="#c9c9c9" stroke-width="2.6" fill="none"/></svg></div><div class="btn" style="position:absolute;left:157.5px;top:323px;width:32.5px;height:32px;"><svg width="30" height="29" viewBox="0 0 30 29" style="position:absolute;left:0;top:0"><path d="M3 11H27" fill="none" stroke="#dadada" stroke-width="1.6"/><rect x="12.8" y="8.8" width="4.4" height="4.4" fill="#222" stroke="#dadada" stroke-width="1.5"/><path d="M18.5 17.5L25 24.5M25 17.5L18.5 24.5" stroke="#9a9a9a" stroke-width="2" fill="none"/></svg></div><div style="position:absolute;left:346px;top:284px;width:1.2px;height:33px;background:#383838;"></div><div style="position:absolute;left:347.2px;top:284px;width:1px;height:33px;background:#525252;"></div><div style="position:absolute;left:346px;top:322.5px;width:1.2px;height:33.0px;background:#383838;"></div><div style="position:absolute;left:347.2px;top:322.5px;width:1px;height:33.0px;background:#525252;"></div><div class="btn" style="position:absolute;left:355.8px;top:284.5px;width:32.5px;height:32px;"><svg width="30" height="29" viewBox="0 0 30 29" style="position:absolute;left:0;top:0"><path d="M5.5 23.5L24.5 4.5" fill="none" stroke="#dadada" stroke-width="1.4"/><rect x="3.7" y="21.7" width="3.6" height="3.6" fill="#444" stroke="#dadada" stroke-width="1.2"/><rect x="22.7" y="2.7" width="3.6" height="3.6" fill="#444" stroke="#dadada" stroke-width="1.2"/></svg></div><div class="btn" style="position:absolute;left:395px;top:284.5px;width:32.5px;height:32px;"><svg width="30" height="29" viewBox="0 0 30 29" style="position:absolute;left:0;top:0"><path d="M5.5 23.5Q6 7 24.5 4.5" fill="none" stroke="#dadada" stroke-width="1.4"/><rect x="3.7" y="21.7" width="3.6" height="3.6" fill="#444" stroke="#dadada" stroke-width="1.2"/><rect x="22.7" y="2.7" width="3.6" height="3.6" fill="#444" stroke="#dadada" stroke-width="1.2"/></svg></div><div class="btn" style="position:absolute;left:434.7px;top:284.5px;width:32.5px;height:32px;"><svg width="30" height="29" viewBox="0 0 30 29" style="position:absolute;left:0;top:0"><path d="M5.5 23.5L24.5 4.5" fill="none" stroke="#dadada" stroke-width="1.4"/><rect x="3.7" y="21.7" width="3.6" height="3.6" fill="#444" stroke="#dadada" stroke-width="1.2"/><rect x="22.7" y="2.7" width="3.6" height="3.6" fill="#444" stroke="#dadada" stroke-width="1.2"/><rect x="11.8" y="11.8" width="6.4" height="6.4" fill="#aaa" stroke="#dadada" stroke-width="1"/></svg></div><div class="btn" style="position:absolute;left:474.3px;top:284.5px;width:32.5px;height:32px;"><svg width="30" height="29" viewBox="0 0 30 29" style="position:absolute;left:0;top:0"><path d="M5.5 23.5Q6 7 24.5 4.5" fill="none" stroke="#dadada" stroke-width="1.4"/><rect x="3.7" y="21.7" width="3.6" height="3.6" fill="#444" stroke="#dadada" stroke-width="1.2"/><rect x="22.7" y="2.7" width="3.6" height="3.6" fill="#444" stroke="#dadada" stroke-width="1.2"/><rect x="7.5" y="7" width="6.4" height="6.4" fill="#aaa" stroke="#dadada" stroke-width="1"/></svg></div><div class="btn" style="position:absolute;left:355.8px;top:323px;width:32.5px;height:32px;"><svg width="30" height="29" viewBox="0 0 30 29" style="position:absolute;left:0;top:0"><path d="M4 5.5H26" fill="none" stroke="#dadada" stroke-width="1.5"/><rect x="12.8" y="3.3" width="4.4" height="4.4" fill="#222" stroke="#dadada" stroke-width="1.5"/><path d="M11 11H19L15 18Z" fill="#9b9b9b"/><path d="M6 24H11M19 24H24" fill="none" stroke="#dadada" stroke-width="1.5"/><rect x="4.3" y="22.3" width="3.4" height="3.4" fill="#444" stroke="#dadada" stroke-width="1.2"/><rect x="22.3" y="22.3" width="3.4" height="3.4" fill="#444" stroke="#dadada" stroke-width="1.2"/></svg></div><div class="btn" style="position:absolute;left:395px;top:323px;width:32.5px;height:32px;"><svg width="30" height="29" viewBox="0 0 30 29" style="position:absolute;left:0;top:0"><path d="M6 5.5H24" fill="none" stroke="#dadada" stroke-width="1.5"/><rect x="4.3" y="3.8" width="3.4" height="3.4" fill="#444" stroke="#dadada" stroke-width="1.2"/><rect x="22.3" y="3.8" width="3.4" height="3.4" fill="#444" stroke="#dadada" stroke-width="1.2"/><path d="M11 11H19L15 18Z" fill="#9b9b9b"/><path d="M6 24H11M19 24H24" fill="none" stroke="#dadada" stroke-width="1.5"/><rect x="4.3" y="22.3" width="3.4" height="3.4" fill="#444" stroke="#dadada" stroke-width="1.2"/><rect x="22.3" y="22.3" width="3.4" height="3.4" fill="#444" stroke="#dadada" stroke-width="1.2"/></svg></div><div class="btn" style="position:absolute;left:434.7px;top:323px;width:32.5px;height:32px;"><svg width="30" height="29" viewBox="0 0 30 29" style="position:absolute;left:0;top:0"><path d="M6 5.5H11M19 5.5H24" fill="none" stroke="#dadada" stroke-width="1.5"/><rect x="4.3" y="3.8" width="3.4" height="3.4" fill="#444" stroke="#dadada" stroke-width="1.2"/><rect x="22.3" y="3.8" width="3.4" height="3.4" fill="#444" stroke="#dadada" stroke-width="1.2"/><path d="M11 11H19L15 18Z" fill="#9b9b9b"/><path d="M6 24H24" fill="none" stroke="#dadada" stroke-width="1.5"/><rect x="4.3" y="22.3" width="3.4" height="3.4" fill="#444" stroke="#dadada" stroke-width="1.2"/><rect x="22.3" y="22.3" width="3.4" height="3.4" fill="#444" stroke="#dadada" stroke-width="1.2"/></svg></div><div class="btn" style="position:absolute;left:474.3px;top:323px;width:32.5px;height:32px;"><svg width="30" height="29" viewBox="0 0 30 29" style="position:absolute;left:0;top:0"><path d="M6 5.5H24" fill="none" stroke="#dadada" stroke-width="1.5"/><rect x="4.3" y="3.8" width="3.4" height="3.4" fill="#444" stroke="#dadada" stroke-width="1.2"/><rect x="22.3" y="3.8" width="3.4" height="3.4" fill="#444" stroke="#dadada" stroke-width="1.2"/><path d="M11 11H19L15 18Z" fill="#9b9b9b"/><path d="M4 24H26" fill="none" stroke="#dadada" stroke-width="1.5"/><rect x="12.8" y="21.8" width="4.4" height="4.4" fill="#222" stroke="#dadada" stroke-width="1.5"/></svg></div><div style="position:absolute;left:303.5px;top:602.5px;width:1.8px;height:2px;background:#7d7d7d;"></div><div style="position:absolute;left:307.1px;top:602.5px;width:1.8px;height:2px;background:#7d7d7d;"></div><div style="position:absolute;left:310.7px;top:602.5px;width:1.8px;height:2px;background:#7d7d7d;"></div><div style="position:absolute;left:314.3px;top:602.5px;width:1.8px;height:2px;background:#7d7d7d;"></div><div style="position:absolute;left:317.9px;top:602.5px;width:1.8px;height:2px;background:#7d7d7d;"></div><div style="position:absolute;left:321.5px;top:602.5px;width:1.8px;height:2px;background:#7d7d7d;"></div><div style="position:absolute;left:325.1px;top:602.5px;width:1.8px;height:2px;background:#7d7d7d;"></div><div style="position:absolute;left:518.5px;top:620.0px;width:3px;height:1.6px;background:#777;"></div><div style="position:absolute;left:518.5px;top:623.6px;width:3px;height:1.6px;background:#777;"></div><div style="position:absolute;left:518.5px;top:627.2px;width:3px;height:1.6px;background:#777;"></div><div style="position:absolute;left:518.5px;top:630.8px;width:3px;height:1.6px;background:#777;"></div><div style="position:absolute;left:518.5px;top:634.4px;width:3px;height:1.6px;background:#777;"></div><div style="position:absolute;left:518.5px;top:638.0px;width:3px;height:1.6px;background:#777;"></div><div style="position:absolute;left:518.5px;top:641.6px;width:3px;height:1.6px;background:#777;"></div><svg style="position:absolute;left:113px;top:606.2px;" width="26" height="26" viewBox="0 0 26 26"><circle cx="13" cy="13" r="11.3" fill="none" stroke="#e2e2e2" stroke-width="1.5"/><rect x="7.3" y="12" width="11.4" height="6.8" rx="0.8" fill="#e6e6e6"/><path d="M9.3 12V11Q9.3 7.3 13 7.3Q16.7 7.3 16.7 11V12" fill="none" stroke="#e6e6e6" stroke-width="1.9"/><rect x="7.3" y="15" width="11.4" height="1" fill="#777"/></svg><span class="t s" style="left:146.2px;top:613.00px;font-size:16px;transform:scaleX(0.9620);">Layers</span><div class="combo" style="position:absolute;left:114px;top:633.5px;width:349px;height:43.5px;"></div><span class="t s" style="left:119.7px;top:650.00px;font-size:16px;transform:scaleX(1.0608);">Normal</span><svg style="position:absolute;left:442px;top:653.3px;" width="11" height="6" viewBox="0 0 11 6"><path d="M0 0H11L5.5 6Z" fill="#9b9b9b"/></svg><svg style="position:absolute;left:477px;top:642px;" width="24" height="28" viewBox="0 0 24 28"><path d="M2 2H22L14.5 13V24.5L9.5 21.5V13Z" fill="none" stroke="#e0e0e0" stroke-width="1.8" stroke-linejoin="miter"/></svg><svg style="position:absolute;left:501px;top:669px;" width="8" height="5" viewBox="0 0 8 5"><path d="M0 0H8L4.0 5Z" fill="#8c8c8c"/></svg><div class="sld blue" style="position:absolute;left:114px;top:683.5px;width:328.5px;height:41px;border-radius:2px 0 0 2px;"></div><span class="t s" style="left:223.2px;top:698.00px;font-size:16px;transform:scaleX(0.9972);color:#eef2f6;">Opacity:  100%</span><div style="position:absolute;left:442.5px;top:683.5px;width:20.5px;height:41px;border:1px solid #5a5a5a;border-left:none;border-radius:0 4px 4px 0;background:#414141;"></div><svg style="position:absolute;left:446.25px;top:694.0px;" width="11" height="7" viewBox="0 0 11 7"><path d="M0 7H11L5.5 0Z" fill="#7d7d7d"/></svg><svg style="position:absolute;left:446.25px;top:708.0px;" width="11" height="7" viewBox="0 0 11 7"><path d="M0 0H11L5.5 7Z" fill="#a9a9a9"/></svg><svg style="position:absolute;left:480px;top:697px;" width="18" height="15" viewBox="0 0 18 15"><path d="M0 1.4H18M0 7.4H18M0 13.4H18" stroke="#e8e8e8" stroke-width="2.6"/></svg><svg style="position:absolute;left:501px;top:718.5px;" width="8" height="5" viewBox="0 0 8 5"><path d="M0 0H8L4.0 5Z" fill="#8c8c8c"/></svg><div style="position:absolute;left:113px;top:730.5px;width:378.5px;height:289px;background:#303030;"></div><div style="position:absolute;left:491.5px;top:730.5px;width:20.5px;height:289px;background:#3a3a3a;"></div><div style="position:absolute;left:493px;top:731.5px;width:18px;height:17px;border:1px solid #555;background:#404040;"><svg style="position:absolute;left:3px;top:4.5px;" width="10" height="6" viewBox="0 0 10 6"><path d="M0 6H10L5 0Z" fill="#bdbdbd"/></svg></div><div style="position:absolute;left:493px;top:1000.5px;width:18px;height:18px;border:1px solid #555;background:#404040;"><svg style="position:absolute;left:3px;top:5.5px;" width="10" height="6" viewBox="0 0 10 6"><path d="M0 0H10L5 6Z" fill="#bdbdbd"/></svg></div><div style="position:absolute;left:493px;top:751.5px;width:18px;height:201px;border:1px solid #565656;background:#3d3d3d;border-radius:2px;"></div><svg style="position:absolute;left:119.3px;top:748.725px;" width="22" height="21" viewBox="0 0 22 21"><path d="M0.9 10.2Q11 -3.2 21.1 10.2" fill="none" stroke="#e4e4e4" stroke-width="2"/><circle cx="11" cy="8.3" r="5.4" fill="#e4e4e4"/><path d="M1.6 11.8Q11 20.5 20.4 11.8" fill="none" stroke="#e4e4e4" stroke-width="1.5"/><path d="M3.6 15.2Q11 22.6 18.4 15.2" fill="none" stroke="#e4e4e4" stroke-width="1.5"/></svg><div style="position:absolute;left:152px;top:750.225px;width:20px;height:19.5px;background:#292929;border-radius:1px;"></div><div style="position:absolute;left:189px;top:736.0px;width:38.4px;height:48.5px;background:repeating-conic-gradient(#dcdcdc 0 25%,#fff 0 50%) 0 0/14.6px 14.6px;overflow:hidden;"><svg width="38.4" height="48.5" style="position:absolute;left:0;top:0"><rect x="9.4" y="25.8" width="1.5" height="1.5" fill="#111"/><rect x="33.4" y="22.6" width="0.9" height="0.9" fill="#111"/><rect x="22.4" y="42.4" width="1.8" height="1.8" fill="#111"/><rect x="10.2" y="11.7" width="1.8" height="1.8" fill="#111"/><rect x="20.2" y="26.0" width="1.8" height="1.8" fill="#111"/><rect x="23.6" y="7.9" width="1.2" height="1.2" fill="#111"/><rect x="31.7" y="24.8" width="0.9" height="0.9" fill="#111"/><rect x="24.8" y="3.9" width="0.9" height="0.9" fill="#111"/><rect x="11.7" y="2.4" width="1.5" height="1.5" fill="#111"/><rect x="17.7" y="33.7" width="1.8" height="1.8" fill="#111"/><rect x="26.3" y="42.9" width="1.8" height="1.8" fill="#111"/><rect x="26.8" y="27.2" width="1.2" height="1.2" fill="#111"/><rect x="32.1" y="5.4" width="1.2" height="1.2" fill="#111"/><rect x="18.5" y="12.7" width="1.8" height="1.8" fill="#111"/><rect x="28.6" y="39.9" width="1.8" height="1.8" fill="#111"/><rect x="19.0" y="18.6" width="1.5" height="1.5" fill="#111"/><rect x="19.9" y="19.5" width="1.2" height="1.2" fill="#111"/><rect x="33.0" y="32.0" width="0.9" height="0.9" fill="#111"/><rect x="31.3" y="46.1" width="1.2" height="1.2" fill="#111"/><rect x="25.7" y="15.9" width="0.9" height="0.9" fill="#111"/><rect x="26.3" y="10.6" width="1.5" height="1.5" fill="#111"/><rect x="11.1" y="3.9" width="1.8" height="1.8" fill="#111"/><rect x="4.1" y="37.4" width="1.8" height="1.8" fill="#111"/><rect x="32.8" y="1.9" width="1.8" height="1.8" fill="#111"/><rect x="28.2" y="40.7" width="0.9" height="0.9" fill="#111"/><rect x="22.4" y="35.7" width="1.8" height="1.8" fill="#111"/><rect x="26.4" y="16.1" width="1.5" height="1.5" fill="#111"/><rect x="18.9" y="46.4" width="1.5" height="1.5" fill="#111"/><rect x="1.3" y="5.9" width="0.9" height="0.9" fill="#111"/><rect x="34.6" y="45.2" width="1.5" height="1.5" fill="#111"/><rect x="22.6" y="8.1" width="0.9" height="0.9" fill="#111"/><rect x="35.7" y="16.5" width="1.5" height="1.5" fill="#111"/><rect x="34.9" y="41.8" width="1.8" height="1.8" fill="#111"/><rect x="14.3" y="40.6" width="1.8" height="1.8" fill="#111"/></svg></div><svg style="position:absolute;left:242px;top:733.5px;" width="17" height="16" viewBox="0 0 17 16"><rect x="1" y="3.2" width="14.6" height="11.5" rx="1" fill="none" stroke="#d4d4d4" stroke-width="1.5"/><path d="M1 7H15.6" stroke="#d4d4d4" stroke-width="1.5"/><path d="M1 3.8V1H7.5L9.5 3.5" fill="none" stroke="#d4d4d4" stroke-width="1.4"/></svg><svg style="position:absolute;left:241.5px;top:773.0px;" width="18" height="10" viewBox="0 0 18 10"><path d="M1 1L9 8.5L17 1" fill="none" stroke="#d6d6d6" stroke-width="1.7"/></svg><span class="t s" style="left:271.7px;top:753.00px;font-size:16px;transform:scaleX(0.9721);">Group 1</span><svg style="position:absolute;left:463.8px;top:751.125px;" width="23" height="17" viewBox="0 0 23 17"><rect x="0" y="0.0" width="10.3" height="3.8" fill="#6a6a6a"/><rect x="12.4" y="0.0" width="10.1" height="3.8" fill="#6a6a6a"/><rect x="0" y="5.9" width="4.5" height="3.8" fill="#6a6a6a"/><rect x="6.6" y="5.9" width="10.1" height="3.8" fill="#6a6a6a"/><rect x="18.8" y="5.9" width="3.7" height="3.8" fill="#6a6a6a"/><rect x="0" y="11.8" width="10.3" height="3.8" fill="#6a6a6a"/><rect x="12.4" y="11.8" width="10.1" height="3.8" fill="#6a6a6a"/></svg><svg style="position:absolute;left:411.5px;top:748.225px;" width="19" height="21" viewBox="0 0 19 21"><rect x="0" y="10" width="17.6" height="10.6" fill="#6c6c6c"/><path d="M10 1.4Q14.5 3.5 16.3 10.5" fill="none" stroke="#6c6c6c" stroke-width="2.3" stroke-linecap="round"/></svg><svg style="position:absolute;left:437.5px;top:751.125px;" width="20" height="16" viewBox="0 0 20 16"><path d="M17.6 0.8C15.5 6 12.5 14.4 6.2 14.4C2.2 14.4 0.9 11.4 1.1 8.4C1.5 4 4.8 1.3 8 1.3C12 1.3 13 6 14 10.2C14.7 12.8 16 14.4 18.8 13.8" fill="none" stroke="#7a7a7a" stroke-width="1.9" stroke-linecap="round"/></svg><div style="position:absolute;left:178.5px;top:787.75px;width:313px;height:56.95px;background:linear-gradient(#52769c,#4d7096);"></div><svg style="position:absolute;left:119.3px;top:807.1750000000001px;" width="22" height="21" viewBox="0 0 22 21"><path d="M0.9 10.2Q11 -3.2 21.1 10.2" fill="none" stroke="#e4e4e4" stroke-width="2"/><circle cx="11" cy="8.3" r="5.4" fill="#e4e4e4"/><path d="M1.6 11.8Q11 20.5 20.4 11.8" fill="none" stroke="#e4e4e4" stroke-width="1.5"/><path d="M3.6 15.2Q11 22.6 18.4 15.2" fill="none" stroke="#e4e4e4" stroke-width="1.5"/></svg><div style="position:absolute;left:152px;top:808.6750000000001px;width:20px;height:19.5px;background:#292929;border-radius:1px;"></div><svg style="position:absolute;left:155px;top:811.1750000000001px;" width="15" height="14" viewBox="0 0 15 14"><path d="M1.5 7.5L5.5 12L13 1.5" fill="none" stroke="#d8d8d8" stroke-width="1.8"/></svg><svg style="position:absolute;left:192px;top:811.6750000000001px;" width="13" height="13" viewBox="0 0 13 13"><path d="M1 0V11.5H12.5" fill="none" stroke="#3c5878" stroke-width="1.4"/></svg><div style="position:absolute;left:213px;top:799.7px;width:50.4px;height:35.8px;background:repeating-conic-gradient(#dcdcdc 0 25%,#fff 0 50%) 0 0/14.6px 14.6px;overflow:hidden;box-shadow:0 0 0 1px #222;"><svg width="50.4" height="35.8" style="position:absolute;left:0;top:0"><rect x="11.7" y="32.6" width="1.2" height="1.2" fill="#111"/><rect x="10.2" y="2.4" width="1.2" height="1.2" fill="#111"/><rect x="12.7" y="33.8" width="1.2" height="1.2" fill="#111"/><rect x="20.0" y="2.0" width="1.8" height="1.8" fill="#111"/><rect x="22.5" y="17.2" width="1.2" height="1.2" fill="#111"/><rect x="43.5" y="14.2" width="1.8" height="1.8" fill="#111"/><rect x="12.1" y="1.7" width="1.5" height="1.5" fill="#111"/><rect x="25.7" y="16.6" width="1.8" height="1.8" fill="#111"/><rect x="35.4" y="22.7" width="0.9" height="0.9" fill="#111"/><rect x="48.0" y="3.1" width="1.8" height="1.8" fill="#111"/><rect x="6.1" y="2.9" width="1.2" height="1.2" fill="#111"/><rect x="33.8" y="17.3" width="1.2" height="1.2" fill="#111"/><rect x="28.6" y="5.7" width="0.9" height="0.9" fill="#111"/><rect x="26.6" y="2.2" width="1.2" height="1.2" fill="#111"/><rect x="8.0" y="29.2" width="1.8" height="1.8" fill="#111"/><rect x="35.6" y="29.9" width="1.5" height="1.5" fill="#111"/><rect x="27.4" y="29.0" width="1.8" height="1.8" fill="#111"/><rect x="7.4" y="26.1" width="0.9" height="0.9" fill="#111"/><rect x="26.2" y="11.3" width="1.5" height="1.5" fill="#111"/><rect x="46.0" y="28.7" width="1.2" height="1.2" fill="#111"/><rect x="15.6" y="12.7" width="1.5" height="1.5" fill="#111"/><rect x="25.2" y="3.3" width="1.2" height="1.2" fill="#111"/><rect x="17.3" y="30.8" width="1.5" height="1.5" fill="#111"/><rect x="17.3" y="9.8" width="1.8" height="1.8" fill="#111"/><rect x="13.1" y="10.8" width="1.8" height="1.8" fill="#111"/><rect x="9.3" y="14.0" width="1.2" height="1.2" fill="#111"/><rect x="45.2" y="28.9" width="0.9" height="0.9" fill="#111"/><rect x="10.6" y="26.1" width="1.5" height="1.5" fill="#111"/><rect x="6.5" y="27.1" width="1.8" height="1.8" fill="#111"/><rect x="17.2" y="6.6" width="1.8" height="1.8" fill="#111"/><rect x="43.9" y="5.6" width="1.8" height="1.8" fill="#111"/><rect x="20.3" y="3.6" width="0.9" height="0.9" fill="#111"/><rect x="14.7" y="4.1" width="0.9" height="0.9" fill="#111"/><rect x="32.4" y="26.1" width="1.5" height="1.5" fill="#111"/><rect x="8.3" y="31.7" width="1.8" height="1.8" fill="#111"/><rect x="34.6" y="33.1" width="0.9" height="0.9" fill="#111"/><rect x="10.0" y="30.9" width="1.5" height="1.5" fill="#111"/><rect x="19.3" y="19.8" width="1.5" height="1.5" fill="#111"/><rect x="17.7" y="32.7" width="0.9" height="0.9" fill="#111"/><rect x="31.6" y="17.4" width="0.9" height="0.9" fill="#111"/><rect x="42.5" y="2.1" width="1.2" height="1.2" fill="#111"/><rect x="9.4" y="32.8" width="1.8" height="1.8" fill="#111"/></svg></div><svg style="position:absolute;left:272px;top:790.1500000000001px;" width="16" height="19" viewBox="0 0 16 19"><path d="M3 3H13V11.5Q12.5 15.5 8 15.5H3Z" fill="none" stroke="#d9d9d9" stroke-width="1.5"/><rect x="0.8" y="0.8" width="3.6" height="3.6" fill="#303030" stroke="#d9d9d9" stroke-width="1.2"/><rect x="11.4" y="0.8" width="3.6" height="3.6" fill="#303030" stroke="#d9d9d9" stroke-width="1.2"/><rect x="0.8" y="14" width="3.6" height="3.6" fill="#303030" stroke="#d9d9d9" stroke-width="1.2"/></svg><span class="t s" style="left:301.2px;top:811.00px;font-size:16px;transform:scaleX(0.9357);color:#e6ecf2;font-weight:bold;-webkit-text-stroke:0;">Vector Lay…</span><svg style="position:absolute;left:411.5px;top:806.6750000000001px;" width="19" height="21" viewBox="0 0 19 21"><rect x="0" y="10" width="17.6" height="10.6" fill="#7e97b3"/><path d="M10 1.4Q14.5 3.5 16.3 10.5" fill="none" stroke="#7e97b3" stroke-width="2.3" stroke-linecap="round"/></svg><svg style="position:absolute;left:437.5px;top:809.575px;" width="20" height="16" viewBox="0 0 20 16"><path d="M17.6 0.8C15.5 6 12.5 14.4 6.2 14.4C2.2 14.4 0.9 11.4 1.1 8.4C1.5 4 4.8 1.3 8 1.3C12 1.3 13 6 14 10.2C14.7 12.8 16 14.4 18.8 13.8" fill="none" stroke="#8ea6c0" stroke-width="1.9" stroke-linecap="round"/></svg><svg style="position:absolute;left:119.3px;top:865.625px;" width="22" height="21" viewBox="0 0 22 21"><path d="M0.9 10.2Q11 -3.2 21.1 10.2" fill="none" stroke="#e4e4e4" stroke-width="2"/><circle cx="11" cy="8.3" r="5.4" fill="#e4e4e4"/><path d="M1.6 11.8Q11 20.5 20.4 11.8" fill="none" stroke="#e4e4e4" stroke-width="1.5"/><path d="M3.6 15.2Q11 22.6 18.4 15.2" fill="none" stroke="#e4e4e4" stroke-width="1.5"/></svg><div style="position:absolute;left:152px;top:867.125px;width:20px;height:19.5px;background:#292929;border-radius:1px;"></div><svg style="position:absolute;left:192px;top:870.125px;" width="13" height="13" viewBox="0 0 13 13"><path d="M1 0V11.5H12.5" fill="none" stroke="#3a3a3a" stroke-width="1.4"/></svg><div style="position:absolute;left:213px;top:857px;width:50.4px;height:38.6px;background:repeating-conic-gradient(#dcdcdc 0 25%,#fff 0 50%) 0 0/14.6px 14.6px;overflow:hidden;"><svg width="50.4" height="38.6" style="position:absolute;left:0;top:0"><rect x="46.8" y="1.4" width="0.9" height="0.9" fill="#111"/><rect x="8.5" y="36.1" width="0.9" height="0.9" fill="#111"/><rect x="3.6" y="29.7" width="1.2" height="1.2" fill="#111"/><rect x="41.6" y="36.6" width="1.2" height="1.2" fill="#111"/><rect x="6.6" y="17.6" width="1.5" height="1.5" fill="#111"/><rect x="14.3" y="10.4" width="1.2" height="1.2" fill="#111"/><rect x="45.3" y="8.3" width="1.5" height="1.5" fill="#111"/><rect x="38.8" y="9.0" width="1.8" height="1.8" fill="#111"/><rect x="12.0" y="17.2" width="1.8" height="1.8" fill="#111"/><rect x="24.2" y="17.4" width="1.5" height="1.5" fill="#111"/><rect x="21.8" y="12.2" width="1.8" height="1.8" fill="#111"/><rect x="20.2" y="31.7" width="0.9" height="0.9" fill="#111"/><rect x="24.2" y="34.6" width="0.9" height="0.9" fill="#111"/><rect x="10.3" y="20.0" width="0.9" height="0.9" fill="#111"/><rect x="14.6" y="18.6" width="0.9" height="0.9" fill="#111"/><rect x="43.3" y="15.1" width="0.9" height="0.9" fill="#111"/><rect x="23.2" y="30.9" width="1.5" height="1.5" fill="#111"/><rect x="20.0" y="18.9" width="1.2" height="1.2" fill="#111"/><rect x="26.8" y="18.8" width="0.9" height="0.9" fill="#111"/><rect x="12.2" y="12.1" width="1.5" height="1.5" fill="#111"/><rect x="19.3" y="18.0" width="1.8" height="1.8" fill="#111"/><rect x="38.1" y="28.0" width="1.5" height="1.5" fill="#111"/><rect x="23.5" y="5.1" width="1.8" height="1.8" fill="#111"/><rect x="19.5" y="1.5" width="1.5" height="1.5" fill="#111"/><rect x="45.0" y="27.4" width="1.5" height="1.5" fill="#111"/><rect x="4.0" y="17.0" width="0.9" height="0.9" fill="#111"/><rect x="45.8" y="6.6" width="1.8" height="1.8" fill="#111"/><rect x="27.8" y="32.1" width="1.8" height="1.8" fill="#111"/><rect x="3.0" y="3.2" width="0.9" height="0.9" fill="#111"/><rect x="28.0" y="17.5" width="1.8" height="1.8" fill="#111"/><rect x="33.8" y="10.1" width="0.9" height="0.9" fill="#111"/><rect x="30.0" y="3.0" width="1.8" height="1.8" fill="#111"/><rect x="21.6" y="3.0" width="1.5" height="1.5" fill="#111"/><rect x="29.2" y="12.1" width="0.9" height="0.9" fill="#111"/><rect x="39.0" y="32.8" width="1.8" height="1.8" fill="#111"/><rect x="1.7" y="24.8" width="1.5" height="1.5" fill="#111"/><rect x="30.2" y="33.4" width="0.9" height="0.9" fill="#111"/><rect x="7.8" y="9.9" width="1.5" height="1.5" fill="#111"/><rect x="16.4" y="9.7" width="1.5" height="1.5" fill="#111"/><rect x="24.3" y="1.1" width="1.5" height="1.5" fill="#111"/><rect x="34.3" y="13.1" width="0.9" height="0.9" fill="#111"/><rect x="41.5" y="23.8" width="0.9" height="0.9" fill="#111"/></svg></div><svg style="position:absolute;left:272px;top:848.6px;" width="16" height="19" viewBox="0 0 16 19"><path d="M3 3H13V11.5Q12.5 15.5 8 15.5H3Z" fill="none" stroke="#d9d9d9" stroke-width="1.5"/><rect x="0.8" y="0.8" width="3.6" height="3.6" fill="#303030" stroke="#d9d9d9" stroke-width="1.2"/><rect x="11.4" y="0.8" width="3.6" height="3.6" fill="#303030" stroke="#d9d9d9" stroke-width="1.2"/><rect x="0.8" y="14" width="3.6" height="3.6" fill="#303030" stroke="#d9d9d9" stroke-width="1.2"/></svg><span class="t s" style="left:301.2px;top:870.00px;font-size:16px;transform:scaleX(0.9684);">Colar de P…</span><svg style="position:absolute;left:411.5px;top:865.125px;" width="19" height="21" viewBox="0 0 19 21"><rect x="0" y="10" width="17.6" height="10.6" fill="#6c6c6c"/><path d="M10 1.4Q14.5 3.5 16.3 10.5" fill="none" stroke="#6c6c6c" stroke-width="2.3" stroke-linecap="round"/></svg><svg style="position:absolute;left:437.5px;top:868.025px;" width="20" height="16" viewBox="0 0 20 16"><path d="M17.6 0.8C15.5 6 12.5 14.4 6.2 14.4C2.2 14.4 0.9 11.4 1.1 8.4C1.5 4 4.8 1.3 8 1.3C12 1.3 13 6 14 10.2C14.7 12.8 16 14.4 18.8 13.8" fill="none" stroke="#7a7a7a" stroke-width="1.9" stroke-linecap="round"/></svg><svg style="position:absolute;left:119.3px;top:924.075px;" width="22" height="21" viewBox="0 0 22 21"><path d="M0.9 10.2Q11 -3.2 21.1 10.2" fill="none" stroke="#e4e4e4" stroke-width="2"/><circle cx="11" cy="8.3" r="5.4" fill="#e4e4e4"/><path d="M1.6 11.8Q11 20.5 20.4 11.8" fill="none" stroke="#e4e4e4" stroke-width="1.5"/><path d="M3.6 15.2Q11 22.6 18.4 15.2" fill="none" stroke="#e4e4e4" stroke-width="1.5"/></svg><div style="position:absolute;left:152px;top:925.575px;width:20px;height:19.5px;background:#292929;border-radius:1px;"></div><svg style="position:absolute;left:192px;top:928.575px;" width="13" height="13" viewBox="0 0 13 13"><path d="M1 0V11.5H12.5" fill="none" stroke="#3a3a3a" stroke-width="1.4"/></svg><div style="position:absolute;left:213px;top:913.5px;width:50.4px;height:42.5px;background:repeating-conic-gradient(#dcdcdc 0 25%,#fff 0 50%) 0 0/14.6px 14.6px;overflow:hidden;"><svg width="50.4" height="42.5" style="position:absolute;left:0;top:0"><rect x="46.4" y="6.5" width="0.9" height="0.9" fill="#111"/><rect x="30.1" y="18.7" width="0.9" height="0.9" fill="#111"/><rect x="36.1" y="35.7" width="0.9" height="0.9" fill="#111"/><rect x="12.0" y="38.9" width="1.5" height="1.5" fill="#111"/><rect x="47.3" y="8.1" width="1.8" height="1.8" fill="#111"/><rect x="34.6" y="2.9" width="0.9" height="0.9" fill="#111"/><rect x="28.9" y="13.3" width="1.2" height="1.2" fill="#111"/><rect x="9.6" y="5.4" width="0.9" height="0.9" fill="#111"/><rect x="34.1" y="25.2" width="1.5" height="1.5" fill="#111"/><rect x="9.7" y="16.5" width="1.2" height="1.2" fill="#111"/><rect x="14.2" y="11.7" width="1.2" height="1.2" fill="#111"/><rect x="21.5" y="14.5" width="0.9" height="0.9" fill="#111"/><rect x="20.9" y="10.9" width="1.5" height="1.5" fill="#111"/><rect x="25.5" y="17.2" width="1.2" height="1.2" fill="#111"/><rect x="15.6" y="15.8" width="0.9" height="0.9" fill="#111"/><rect x="15.1" y="24.5" width="1.8" height="1.8" fill="#111"/><rect x="36.9" y="36.5" width="1.8" height="1.8" fill="#111"/><rect x="5.2" y="40.4" width="1.5" height="1.5" fill="#111"/><rect x="5.7" y="31.9" width="0.9" height="0.9" fill="#111"/><rect x="45.1" y="38.6" width="1.2" height="1.2" fill="#111"/><rect x="20.0" y="4.8" width="1.2" height="1.2" fill="#111"/><rect x="9.1" y="22.6" width="1.5" height="1.5" fill="#111"/></svg></div><svg style="position:absolute;left:272px;top:907.0500000000001px;" width="16" height="19" viewBox="0 0 16 19"><path d="M3 3H13V11.5Q12.5 15.5 8 15.5H3Z" fill="none" stroke="#d9d9d9" stroke-width="1.5"/><rect x="0.8" y="0.8" width="3.6" height="3.6" fill="#303030" stroke="#d9d9d9" stroke-width="1.2"/><rect x="11.4" y="0.8" width="3.6" height="3.6" fill="#303030" stroke="#d9d9d9" stroke-width="1.2"/><rect x="0.8" y="14" width="3.6" height="3.6" fill="#303030" stroke="#d9d9d9" stroke-width="1.2"/></svg><span class="t s" style="left:301.2px;top:928.00px;font-size:16px;transform:scaleX(0.9516);">Pelos da C…</span><svg style="position:absolute;left:411.5px;top:923.575px;" width="19" height="21" viewBox="0 0 19 21"><rect x="0" y="10" width="17.6" height="10.6" fill="#6c6c6c"/><path d="M10 1.4Q14.5 3.5 16.3 10.5" fill="none" stroke="#6c6c6c" stroke-width="2.3" stroke-linecap="round"/></svg><svg style="position:absolute;left:437.5px;top:926.475px;" width="20" height="16" viewBox="0 0 20 16"><path d="M17.6 0.8C15.5 6 12.5 14.4 6.2 14.4C2.2 14.4 0.9 11.4 1.1 8.4C1.5 4 4.8 1.3 8 1.3C12 1.3 13 6 14 10.2C14.7 12.8 16 14.4 18.8 13.8" fill="none" stroke="#7a7a7a" stroke-width="1.9" stroke-linecap="round"/></svg><svg style="position:absolute;left:119.3px;top:982.525px;" width="22" height="21" viewBox="0 0 22 21"><path d="M0.9 10.2Q11 -3.2 21.1 10.2" fill="none" stroke="#e4e4e4" stroke-width="2"/><circle cx="11" cy="8.3" r="5.4" fill="#e4e4e4"/><path d="M1.6 11.8Q11 20.5 20.4 11.8" fill="none" stroke="#e4e4e4" stroke-width="1.5"/><path d="M3.6 15.2Q11 22.6 18.4 15.2" fill="none" stroke="#e4e4e4" stroke-width="1.5"/></svg><div style="position:absolute;left:152px;top:984.025px;width:20px;height:19.5px;background:#292929;border-radius:1px;"></div><div style="position:absolute;left:190.5px;top:970.5px;width:37px;height:49px;background:#fff;overflow:hidden;"><div style="position:absolute;left:0px;top:0px;width:37px;height:49px;background:#fff;overflow:hidden;"><svg width="37" height="49" style="position:absolute;left:0;top:0"><rect x="16.7" y="18.2" width="1.2" height="1.2" fill="#999"/><rect x="30.5" y="1.3" width="1.8" height="1.8" fill="#777"/><rect x="12.4" y="44.1" width="0.9" height="0.9" fill="#aaa"/><rect x="6.8" y="44.5" width="1.8" height="1.8" fill="#999"/><rect x="6.7" y="3.4" width="1.2" height="1.2" fill="#777"/><rect x="27.3" y="18.6" width="0.9" height="0.9" fill="#555"/><rect x="8.0" y="11.3" width="1.8" height="1.8" fill="#777"/><rect x="27.3" y="42.9" width="1.8" height="1.8" fill="#555"/><rect x="12.6" y="3.0" width="0.9" height="0.9" fill="#aaa"/><rect x="2.9" y="18.4" width="1.8" height="1.8" fill="#999"/><rect x="1.8" y="20.5" width="0.9" height="0.9" fill="#777"/><rect x="5.1" y="27.6" width="1.2" height="1.2" fill="#555"/><rect x="1.3" y="4.8" width="0.9" height="0.9" fill="#777"/><rect x="20.5" y="25.7" width="1.2" height="1.2" fill="#aaa"/><rect x="3.3" y="9.8" width="0.9" height="0.9" fill="#999"/><rect x="6.9" y="29.0" width="0.9" height="0.9" fill="#777"/><rect x="10.2" y="32.4" width="1.2" height="1.2" fill="#555"/><rect x="26.1" y="27.5" width="0.9" height="0.9" fill="#777"/><rect x="30.5" y="19.5" width="1.2" height="1.2" fill="#999"/><rect x="21.8" y="3.0" width="1.5" height="1.5" fill="#777"/><rect x="30.5" y="6.1" width="1.5" height="1.5" fill="#aaa"/><rect x="8.1" y="10.1" width="0.9" height="0.9" fill="#aaa"/><rect x="28.2" y="16.1" width="1.8" height="1.8" fill="#777"/><rect x="8.3" y="21.4" width="1.5" height="1.5" fill="#777"/><rect x="11.4" y="14.1" width="0.9" height="0.9" fill="#777"/><rect x="14.0" y="26.8" width="1.8" height="1.8" fill="#aaa"/><rect x="12.8" y="36.8" width="0.9" height="0.9" fill="#aaa"/><rect x="23.0" y="5.4" width="1.8" height="1.8" fill="#555"/><rect x="33.5" y="26.8" width="1.2" height="1.2" fill="#555"/><rect x="6.8" y="39.8" width="1.5" height="1.5" fill="#777"/><rect x="2.7" y="45.9" width="1.2" height="1.2" fill="#555"/><rect x="33.2" y="46.4" width="1.2" height="1.2" fill="#777"/><rect x="2.7" y="21.7" width="1.8" height="1.8" fill="#555"/><rect x="21.8" y="45.5" width="1.5" height="1.5" fill="#555"/><rect x="5.8" y="26.8" width="1.2" height="1.2" fill="#777"/><rect x="26.4" y="14.6" width="0.9" height="0.9" fill="#777"/><rect x="15.3" y="7.6" width="1.8" height="1.8" fill="#999"/><rect x="23.5" y="13.6" width="1.8" height="1.8" fill="#555"/><rect x="4.4" y="3.2" width="1.2" height="1.2" fill="#999"/><rect x="28.1" y="38.7" width="1.2" height="1.2" fill="#999"/><rect x="30.2" y="10.3" width="1.8" height="1.8" fill="#aaa"/><rect x="21.1" y="26.1" width="0.9" height="0.9" fill="#999"/><rect x="19.7" y="28.3" width="1.5" height="1.5" fill="#777"/><rect x="33.0" y="2.3" width="1.8" height="1.8" fill="#555"/><rect x="18.8" y="25.7" width="0.9" height="0.9" fill="#555"/><rect x="3.2" y="11.3" width="1.2" height="1.2" fill="#777"/><rect x="4.4" y="23.6" width="0.9" height="0.9" fill="#aaa"/><rect x="31.2" y="34.5" width="0.9" height="0.9" fill="#555"/><rect x="9.3" y="22.1" width="1.5" height="1.5" fill="#aaa"/><rect x="30.8" y="2.7" width="0.9" height="0.9" fill="#777"/><rect x="24.1" y="19.7" width="0.9" height="0.9" fill="#777"/><rect x="7.4" y="29.0" width="1.2" height="1.2" fill="#777"/><rect x="3.2" y="17.3" width="1.8" height="1.8" fill="#aaa"/><rect x="1.9" y="36.7" width="1.5" height="1.5" fill="#777"/><rect x="27.6" y="1.4" width="1.8" height="1.8" fill="#999"/><rect x="34.2" y="46.4" width="1.2" height="1.2" fill="#777"/><rect x="31.4" y="31.9" width="1.8" height="1.8" fill="#999"/><rect x="7.5" y="11.2" width="0.9" height="0.9" fill="#777"/><rect x="5.1" y="44.2" width="0.9" height="0.9" fill="#555"/><rect x="4.5" y="2.1" width="1.2" height="1.2" fill="#555"/><rect x="30.7" y="4.7" width="0.9" height="0.9" fill="#555"/><rect x="27.0" y="32.4" width="0.9" height="0.9" fill="#aaa"/><rect x="9.6" y="29.1" width="0.9" height="0.9" fill="#aaa"/><rect x="3.0" y="12.6" width="1.5" height="1.5" fill="#999"/><rect x="22.7" y="32.3" width="1.2" height="1.2" fill="#555"/><rect x="2.3" y="9.6" width="1.5" height="1.5" fill="#aaa"/><rect x="32.6" y="41.3" width="1.5" height="1.5" fill="#777"/><rect x="2.0" y="21.2" width="1.8" height="1.8" fill="#555"/><rect x="17.7" y="17.0" width="1.8" height="1.8" fill="#aaa"/><rect x="8.1" y="13.7" width="1.8" height="1.8" fill="#aaa"/></svg></div></div><svg style="position:absolute;left:242px;top:967.8px;" width="17" height="16" viewBox="0 0 17 16"><rect x="1" y="3.2" width="14.6" height="11.5" rx="1" fill="none" stroke="#d4d4d4" stroke-width="1.5"/><path d="M1 7H15.6" stroke="#d4d4d4" stroke-width="1.5"/><path d="M1 3.8V1H7.5L9.5 3.5" fill="none" stroke="#d4d4d4" stroke-width="1.4"/></svg><svg style="position:absolute;left:241.5px;top:1007.8px;" width="18" height="10" viewBox="0 0 18 10"><path d="M1 1L9 8.5L17 1" fill="none" stroke="#d6d6d6" stroke-width="1.7"/></svg><span class="t s" style="left:272.7px;top:987.00px;font-size:16px;transform:scaleX(0.9515);">Base</span><svg style="position:absolute;left:463.8px;top:984.925px;" width="23" height="17" viewBox="0 0 23 17"><rect x="0" y="0.0" width="10.3" height="3.8" fill="#6a6a6a"/><rect x="12.4" y="0.0" width="10.1" height="3.8" fill="#6a6a6a"/><rect x="0" y="5.9" width="4.5" height="3.8" fill="#6a6a6a"/><rect x="6.6" y="5.9" width="10.1" height="3.8" fill="#6a6a6a"/><rect x="18.8" y="5.9" width="3.7" height="3.8" fill="#6a6a6a"/><rect x="0" y="11.8" width="10.3" height="3.8" fill="#6a6a6a"/><rect x="12.4" y="11.8" width="10.1" height="3.8" fill="#6a6a6a"/></svg><svg style="position:absolute;left:411.5px;top:982.025px;" width="19" height="21" viewBox="0 0 19 21"><rect x="0" y="10" width="17.6" height="10.6" fill="#6c6c6c"/><path d="M10 1.4Q14.5 3.5 16.3 10.5" fill="none" stroke="#6c6c6c" stroke-width="2.3" stroke-linecap="round"/></svg><svg style="position:absolute;left:437.5px;top:984.925px;" width="20" height="16" viewBox="0 0 20 16"><path d="M17.6 0.8C15.5 6 12.5 14.4 6.2 14.4C2.2 14.4 0.9 11.4 1.1 8.4C1.5 4 4.8 1.3 8 1.3C12 1.3 13 6 14 10.2C14.7 12.8 16 14.4 18.8 13.8" fill="none" stroke="#7a7a7a" stroke-width="1.9" stroke-linecap="round"/></svg><div style="position:absolute;left:113px;top:1019.5px;width:399px;height:8px;background:#474747;"></div><svg style="position:absolute;left:121px;top:1029px;" width="28" height="28" viewBox="0 0 28 28"><path d="M13.7 0V27M0 13.5H27.5" stroke="#e2e2e2" stroke-width="2.5"/></svg><svg style="position:absolute;left:160px;top:1039.5px;" width="11" height="6" viewBox="0 0 11 6"><path d="M0 0H11L5.5 6Z" fill="#8f8f8f"/></svg><svg style="position:absolute;left:184px;top:1027px;" width="31" height="31" viewBox="0 0 31 31"><rect x="9.8" y="1.3" width="19.5" height="19.5" fill="none" stroke="#e2e2e2" stroke-width="2.5"/><path d="M1.5 8.5V29H22" fill="none" stroke="#e2e2e2" stroke-width="2.5"/></svg><svg style="position:absolute;left:230px;top:1032px;" width="32" height="20" viewBox="0 0 32 20"><path d="M1 1.5L16 17L31 1.5" fill="none" stroke="#e2e2e2" stroke-width="2.6"/></svg><svg style="position:absolute;left:277px;top:1032px;" width="32" height="20" viewBox="0 0 32 20"><path d="M1 18.5L16 3L31 18.5" fill="none" stroke="#e2e2e2" stroke-width="2.6"/></svg><svg style="position:absolute;left:324px;top:1029px;" width="32" height="26" viewBox="0 0 32 26"><path d="M0 3.5H31M0 12.5H31M0 21.5H31" stroke="#e2e2e2" stroke-width="2.3"/><rect x="21" y="0.5" width="3.4" height="6" fill="#e2e2e2"/><rect x="7" y="9.5" width="3.4" height="6" fill="#e2e2e2"/><rect x="16" y="18.5" width="3.4" height="6" fill="#e2e2e2"/></svg><svg style="position:absolute;left:364.5px;top:1039.5px;" width="11" height="6" viewBox="0 0 11 6"><path d="M0 0H11L5.5 6Z" fill="#8f8f8f"/></svg><svg style="position:absolute;left:476px;top:1027px;" width="29" height="31" viewBox="0 0 29 31"><path d="M1 7.5H28" stroke="#e2e2e2" stroke-width="2.6"/><path d="M9 6V2H20V6" fill="none" stroke="#e2e2e2" stroke-width="2.4"/><path d="M4 10.5H25V27Q25 30 22 30H7Q4 30 4 27Z" fill="#e2e2e2"/></svg><div style="position:absolute;left:515.5px;top:194px;width:8px;height:874px;background:#414141;"></div><div style="position:absolute;left:1597.5px;top:194px;width:9.5px;height:852px;background:#444;"></div><div style="position:absolute;left:518.6px;top:620.0px;width:2.6px;height:1.6px;background:#7a7a7a;"></div><div style="position:absolute;left:518.6px;top:623.6px;width:2.6px;height:1.6px;background:#7a7a7a;"></div><div style="position:absolute;left:518.6px;top:627.2px;width:2.6px;height:1.6px;background:#7a7a7a;"></div><div style="position:absolute;left:518.6px;top:630.8px;width:2.6px;height:1.6px;background:#7a7a7a;"></div><div style="position:absolute;left:518.6px;top:634.4px;width:2.6px;height:1.6px;background:#7a7a7a;"></div><div style="position:absolute;left:518.6px;top:638.0px;width:2.6px;height:1.6px;background:#7a7a7a;"></div><div style="position:absolute;left:518.6px;top:641.6px;width:2.6px;height:1.6px;background:#7a7a7a;"></div><div style="position:absolute;left:523.5px;top:194.5px;width:1073.5px;height:46px;background:#474747;border:1.3px solid #5e5e5e;border-bottom:none;border-radius:4px 4px 0 0;"></div><div style="position:absolute;left:541.8px;top:204.8px;width:20.6px;height:20.6px;border-radius:50%;background:conic-gradient(from 0deg,#f235e2 0,#fb6fc8 14%,#ffa08a 24%,#f7ea4e 36%,#9df26a 46%,#3ff0c8 54%,#22e2fa 66%,#6aa6ff 78%,#b07af5 88%,#f235e2 100%);"></div><svg style="position:absolute;left:541px;top:204.5px;" width="22" height="22" viewBox="0 0 22 22"><circle cx="11.2" cy="11.6" r="3" fill="#d9f4f0" opacity=".7"/><path d="M4.2 5L12.5 12.8" stroke="#2b2b3a" stroke-width="2.5" stroke-linecap="round"/><ellipse cx="15" cy="14.6" rx="1.8" ry="2.5" transform="rotate(-38 15 14.6)" fill="#111"/></svg><span class="t s" style="left:879.7px;top:209.00px;font-size:17.5px;transform:scaleX(0.9974);">Scan_2026-02-07_09-31-17.jpg (226.0 MiB) *</span><svg style="position:absolute;left:1555px;top:209.5px;" width="19" height="19" viewBox="0 0 19 19"><path d="M1.5 1.5L17.5 17.5M17.5 1.5L1.5 17.5" stroke="#e0e0e0" stroke-width="2.2"/></svg><div style="position:absolute;left:523px;top:239.5px;width:1054.5px;height:806.5px;background:#808080;border-right:1px solid #8e8e8e;border-bottom:1px solid #8e8e8e;"></div><div style="position:absolute;left:683.5px;top:240px;width:622.5px;height:779px;background:repeating-conic-gradient(#f8f8f8 0 25%,#ffffff 0 50%) 26.8px 45.5px/93.6px 93.6px;"></div><div style="position:absolute;left:1578px;top:239.5px;width:19.5px;height:806.5px;background:#3d3d3d;"></div><div style="position:absolute;left:1578.5px;top:240px;width:19px;height:18.5px;border:1px solid #505050;background:#3f3f3f;"><svg style="position:absolute;left:2.8px;top:4.5px;" width="11" height="6" viewBox="0 0 11 6"><path d="M0 6H11L5.5 0Z" fill="#ababab"/></svg></div><div style="position:absolute;left:1578.5px;top:1026.5px;width:19px;height:19px;border:1px solid #505050;background:#3f3f3f;"><svg style="position:absolute;left:2.8px;top:5px;" width="11" height="6" viewBox="0 0 11 6"><path d="M0 0H11L5.5 6Z" fill="#ababab"/></svg></div><div style="position:absolute;left:1578.5px;top:518px;width:19px;height:270px;border:1px solid #595959;background:#464646;border-radius:2px;"></div><div style="position:absolute;left:523px;top:1046px;width:1054.5px;height:20.5px;background:#3d3d3d;"></div><div style="position:absolute;left:523.5px;top:1047px;width:19px;height:19px;border:1px solid #505050;background:#3f3f3f;"><svg style="position:absolute;left:4.5px;top:2.8px;" width="6" height="11.5" viewBox="0 0 6 11.5"><path d="M6 0V11.5L0 5.75Z" fill="#ababab"/></svg></div><div style="position:absolute;left:1557px;top:1047px;width:19.5px;height:19px;border:1px solid #505050;background:#3f3f3f;"><svg style="position:absolute;left:5px;top:2.8px;" width="6" height="11.5" viewBox="0 0 6 11.5"><path d="M0 0V11.5L6 5.75Z" fill="#ababab"/></svg></div><div style="position:absolute;left:861.5px;top:1047px;width:422px;height:19px;border:1px solid #595959;background:#464646;border-radius:2px;"></div><svg style="position:absolute;left:0;top:0" width="2000" height="1124" viewBox="0 0 2000 1124"><defs><clipPath id="imgclip"><rect x="683.5" y="240" width="622.5" height="779"/></clipPath></defs><g clip-path="url(#imgclip)"><g style="filter:blur(14px)" fill="#fbfdfe" stroke="none" opacity=".9"><ellipse cx="955" cy="430" rx="120" ry="115"/><ellipse cx="990" cy="610" rx="115" ry="90"/><ellipse cx="985" cy="760" rx="95" ry="80"/><ellipse cx="930" cy="900" rx="80" ry="95"/><ellipse cx="1080" cy="900" rx="70" ry="95"/><ellipse cx="790" cy="900" rx="85" ry="110"/><ellipse cx="790" cy="710" rx="55" ry="45"/><ellipse cx="1200" cy="690" rx="55" ry="45"/></g><g fill="none" stroke="#777" stroke-width="2.6" stroke-linecap="round" opacity=".38" transform="translate(1.3,1.7)" style="filter:blur(1px)"><path d="M804.7 420.0C804.0 416.7 801.7 406.6 800.7 400.1C799.7 393.6 798.5 387.3 798.6 380.9C798.7 374.5 800.2 367.6 801.5 361.7C802.8 355.8 804.8 349.3 806.3 345.7C807.8 342.1 809.6 341.0 810.3 340.1"/><path d="M810.3 340.1C811.2 341.0 813.6 343.7 815.9 345.7C818.2 347.7 821.0 350.1 823.9 352.1C826.8 354.1 830.3 356.4 833.5 357.7C836.7 359.0 839.7 359.7 843.1 360.1C846.6 360.4 852.5 359.8 854.3 359.8"/><path d="M854.3 359.8C853.0 358.2 848.6 354.4 846.3 350.5C844.1 346.5 842.2 341.1 840.7 336.1C839.3 331.0 837.9 324.9 837.5 320.1C837.1 315.3 837.4 312.1 838.3 307.3C839.3 302.4 841.3 295.8 843.1 291.2C845.0 286.7 847.3 282.5 849.5 280.0C851.8 277.6 855.5 277.1 856.7 276.5"/><path d="M856.7 276.5C857.9 277.1 861.4 277.8 863.9 280.0C866.5 282.2 868.7 286.0 872.0 289.6C875.2 293.2 879.2 297.9 883.2 301.6C887.2 305.4 892.0 309.3 896.0 312.1C900.0 314.9 904.0 316.8 907.2 318.5C910.4 320.1 913.9 321.4 915.2 322.0"/><path d="M915.2 322.0C914.5 320.1 912.0 314.5 911.2 310.5C910.3 306.4 909.9 302.2 910.1 297.6C910.2 293.1 910.6 288.6 912.0 283.2C913.4 277.9 916.3 270.3 918.4 265.6C920.5 261.0 922.9 257.7 924.8 255.2C926.7 252.8 928.8 251.6 929.6 250.9"/><path d="M929.6 250.9C930.4 252.0 932.3 254.1 934.4 257.6C936.5 261.1 939.2 267.2 942.4 272.0C945.6 276.8 949.9 282.4 953.6 286.4C957.4 290.4 961.1 293.6 964.8 296.0C968.6 298.4 972.3 299.9 976.0 300.8C979.8 301.8 983.8 301.9 987.2 301.6C990.7 301.4 994.2 300.2 996.9 299.2C999.5 298.3 1001.9 296.6 1002.9 296.0"/><path d="M1003.0 294.4C1004.6 292.6 1009.4 287.0 1012.6 283.2C1015.8 279.5 1019.5 275.0 1022.2 272.0C1024.9 269.1 1026.9 267.0 1028.6 265.6C1030.4 264.2 1032.0 264.0 1032.6 263.7"/><path d="M1032.6 263.7C1033.4 264.8 1035.7 267.2 1037.4 270.4C1039.2 273.7 1041.2 278.4 1043.0 283.2C1044.9 288.0 1047.2 293.9 1048.6 299.2C1050.1 304.6 1051.2 310.7 1051.8 315.3C1052.5 319.8 1053.0 322.5 1052.6 326.5C1052.2 330.5 1050.8 336.1 1049.4 339.3C1048.1 342.5 1046.1 344.1 1044.6 345.7C1043.2 347.3 1041.3 348.4 1040.6 348.9"/><path d="M1051.0 330.5C1051.8 329.5 1054.1 325.9 1055.8 324.5C1057.6 323.2 1059.0 322.0 1061.4 322.5C1063.8 322.9 1067.2 324.5 1070.3 327.3C1073.3 330.1 1076.9 334.6 1079.9 339.3C1082.8 343.9 1085.9 349.7 1087.9 355.3C1089.9 360.9 1091.1 368.1 1091.9 372.9C1092.7 377.7 1092.9 380.4 1092.7 384.1C1092.4 387.9 1092.0 391.2 1090.3 395.3C1088.5 399.5 1083.6 406.7 1082.3 408.9"/><path d="M1082.3 408.9C1083.5 407.7 1086.9 403.7 1089.5 401.7C1092.0 399.7 1094.9 398.0 1097.5 396.9C1100.0 395.8 1102.9 394.9 1104.7 395.0C1106.4 395.1 1107.0 395.5 1107.9 397.7C1108.8 399.9 1109.5 404.4 1110.0 408.1C1110.4 411.8 1110.5 418.0 1110.6 420.0"/><path d="M797.0 421.3C796.5 422.9 794.7 427.2 794.0 431.2C793.2 435.3 792.5 440.5 792.7 445.6C792.9 450.7 793.9 456.6 795.1 461.6C796.3 466.7 797.8 471.2 799.9 476.0C802.0 480.8 805.2 486.7 807.9 490.5C810.6 494.2 813.5 496.5 815.9 498.5C818.3 500.5 820.1 501.7 822.3 502.5C824.5 503.3 827.9 503.1 829.0 503.3"/><path d="M819.4 505.7C819.6 507.1 819.7 511.7 820.7 514.5C821.7 517.3 823.6 520.3 825.5 522.5C827.4 524.6 829.7 526.2 831.9 527.3C834.2 528.4 837.9 528.9 839.1 529.2"/><path d="M839.1 529.2C839.7 528.1 841.1 524.4 842.3 522.5C843.5 520.6 845.7 518.5 846.3 517.7"/><path d="M846.3 517.7C845.4 520.1 842.1 527.0 840.7 532.1C839.4 537.2 838.3 543.0 838.3 548.1C838.3 553.2 839.4 558.5 840.7 562.5C842.1 566.5 844.3 569.6 846.3 572.1C848.3 574.7 850.7 576.8 852.7 577.7C854.8 578.7 857.7 577.7 858.7 577.7"/><path d="M858.7 577.7C857.9 578.7 855.6 580.8 854.3 583.3C853.1 585.9 851.8 590.2 851.1 592.9C850.5 595.7 850.5 598.8 850.3 600.0"/><path d="M846.3 517.7C847.8 518.5 852.6 520.3 855.1 522.5C857.7 524.6 859.5 528.0 861.5 530.5C863.5 533.0 865.8 536.1 867.1 537.7C868.5 539.3 869.4 539.7 869.9 540.1"/><path d="M867.1 492.9C866.4 495.1 863.8 502.1 862.7 506.5C861.5 510.9 860.3 515.3 860.4 519.3C860.5 523.3 861.6 527.0 863.1 530.5C864.7 534.0 868.5 538.5 869.5 540.1"/><path d="M867.1 492.9C868.2 494.1 871.2 497.8 873.6 500.1C876.0 502.3 878.6 504.8 881.6 506.5C884.5 508.1 888.0 509.5 891.2 510.0C894.4 510.5 897.6 510.5 900.8 509.7C904.0 508.8 907.4 507.0 910.4 504.9C913.3 502.7 916.0 499.8 918.4 496.9C920.8 493.9 922.8 490.5 924.8 487.3C926.8 484.1 929.5 479.2 930.4 477.6"/><path d="M930.4 477.6C931.6 478.7 935.6 481.1 937.6 484.1C939.6 487.0 941.1 491.3 942.4 495.3C943.7 499.3 944.9 504.1 945.6 508.1C946.3 512.1 946.7 516.5 946.4 519.3C946.1 522.1 944.4 523.9 944.0 524.9"/><path d="M944.0 524.9C945.3 523.1 949.3 518.9 952.0 514.5C954.7 510.1 957.6 503.5 960.0 498.5C962.4 493.4 964.6 488.3 966.4 484.1C968.3 479.8 970.4 474.7 971.2 472.8"/><path d="M971.2 472.8C972.6 474.2 976.6 477.4 979.2 480.8C981.9 484.3 985.0 489.4 987.2 493.7C989.5 497.9 991.6 502.2 992.8 506.5C994.0 510.7 994.6 515.3 994.4 519.3C994.3 523.3 993.5 527.6 992.0 530.5C990.6 533.4 988.8 535.4 985.6 536.9C982.4 538.4 975.0 538.9 972.8 539.3"/><path d="M900.8 548.1C900.0 546.8 897.8 542.4 896.0 540.1C894.1 537.8 891.7 535.7 889.6 534.5C887.4 533.3 885.2 532.2 883.2 532.9C881.2 533.6 878.6 535.4 877.6 538.5C876.5 541.6 876.5 547.0 876.8 551.3C877.0 555.6 877.8 560.4 879.2 564.1C880.5 567.9 882.5 571.2 884.8 573.7C887.0 576.3 890.0 577.9 892.8 579.3C895.5 580.8 899.7 582.0 901.1 582.5"/><path d="M901.1 582.5C898.9 582.3 891.5 580.5 888.0 580.9C884.4 581.3 882.0 582.9 880.0 584.9C878.0 586.9 876.8 590.4 876.0 592.9C875.2 595.4 875.3 598.8 875.2 600.0"/><path d="M984.0 556.1C985.1 556.6 987.8 558.6 990.4 559.3C993.1 560.0 998.0 560.1 1000.1 560.1C1002.1 560.2 1002.5 559.7 1002.9 559.6"/><path d="M974.4 579.3C975.2 580.5 977.1 584.4 979.2 586.5C981.4 588.7 984.3 591.1 987.2 592.1C990.2 593.2 994.2 593.3 996.9 592.9C999.5 592.5 1001.9 590.3 1002.9 589.7"/><path d="M1110.3 420.0C1109.9 422.4 1109.2 429.1 1107.9 434.4C1106.5 439.7 1104.5 446.4 1102.3 452.0C1100.0 457.6 1097.2 463.2 1094.3 468.0C1091.3 472.8 1087.6 477.4 1084.7 480.8C1081.7 484.3 1078.0 487.5 1076.7 488.9"/><path d="M1027.0 479.2C1027.6 477.6 1028.9 473.4 1030.2 469.6C1031.6 465.9 1033.3 460.8 1035.0 456.8C1036.8 452.8 1039.7 447.5 1040.6 445.6"/><path d="M1040.6 445.6C1041.8 447.0 1045.8 450.7 1047.8 453.6C1049.8 456.6 1051.2 460.0 1052.6 463.2C1054.1 466.4 1055.7 469.4 1056.6 472.8C1057.6 476.3 1058.2 480.6 1058.2 484.1C1058.2 487.5 1057.7 490.9 1056.6 493.7C1055.6 496.5 1052.6 499.7 1051.8 500.9"/><path d="M1058.2 472.8C1059.4 472.7 1062.9 471.2 1065.4 472.0C1068.0 472.8 1070.5 476.0 1073.5 477.6C1076.4 479.2 1079.6 481.2 1083.1 481.6C1086.5 482.0 1090.8 481.0 1094.3 480.0C1097.7 479.1 1102.3 476.7 1103.9 476.0"/><path d="M1103.9 476.0C1104.0 477.9 1104.9 483.0 1104.7 487.3C1104.4 491.5 1103.5 497.4 1102.3 501.7C1101.1 505.9 1099.3 509.7 1097.5 512.9C1095.6 516.1 1093.7 518.9 1091.1 520.9C1088.4 522.9 1084.9 524.4 1081.5 524.9C1078.0 525.4 1072.1 524.2 1070.3 524.1"/><path d="M1091.1 521.7C1092.4 522.6 1096.4 524.5 1099.1 527.3C1101.7 530.1 1104.8 534.8 1107.1 538.5C1109.4 542.2 1111.4 546.2 1112.7 549.7C1114.0 553.2 1115.2 556.4 1115.1 559.3C1115.0 562.2 1113.5 565.2 1111.9 567.3C1110.3 569.5 1107.9 570.9 1105.5 572.1C1103.1 573.3 1100.4 574.3 1097.5 574.5C1094.5 574.8 1090.5 574.1 1087.9 573.7C1085.2 573.3 1082.5 572.4 1081.5 572.1"/><path d="M1097.5 574.5C1099.1 576.8 1104.0 583.9 1107.1 588.1C1110.2 592.4 1114.4 598.0 1115.9 600.0"/><path d="M1095.1 577.7C1095.3 579.7 1096.8 586.0 1096.7 589.7C1096.5 593.4 1094.7 598.3 1094.3 600.0"/><path d="M1003.0 524.1C1004.1 525.2 1007.3 528.1 1009.4 530.5C1011.5 532.9 1014.3 536.4 1015.8 538.5C1017.3 540.6 1018.5 541.2 1018.2 543.3C1017.9 545.4 1015.9 548.9 1014.2 551.3C1012.5 553.7 1009.7 556.2 1007.8 557.7C1005.9 559.2 1003.8 559.7 1003.0 560.1"/><path d="M849.5 600.0C849.9 601.5 850.6 606.0 851.9 608.8C853.3 611.6 855.5 614.8 857.5 616.8C859.5 618.8 861.9 620.0 863.9 620.8C865.9 621.6 867.8 622.6 869.5 621.6C871.3 620.7 873.3 617.7 874.4 615.2C875.4 612.7 875.7 608.9 876.0 606.4C876.2 603.9 876.0 601.1 876.0 600.0"/><path d="M876.0 609.6C876.6 611.7 878.1 618.3 880.0 622.4C881.8 626.6 884.5 631.1 887.2 634.4C889.8 637.8 893.0 640.8 896.0 642.4C898.9 644.0 902.4 644.7 904.8 644.0C907.2 643.4 908.9 641.0 910.4 638.4C911.8 635.9 912.8 632.2 913.6 628.8C914.4 625.5 914.9 620.1 915.2 618.4"/><path d="M915.2 618.4C915.5 620.4 915.7 626.6 916.8 630.4C917.9 634.3 919.5 638.2 921.6 641.6C923.7 645.1 926.4 648.3 929.6 651.2C932.8 654.2 936.8 657.1 940.8 659.2C944.8 661.4 949.3 663.1 953.6 664.1C957.9 665.0 962.7 665.0 966.4 664.9C970.2 664.7 973.6 664.7 976.0 663.3C978.4 661.8 979.8 658.8 980.8 656.0C981.9 653.2 982.2 649.6 982.4 646.4C982.7 643.2 982.4 638.4 982.4 636.8"/><path d="M982.4 636.8C983.2 638.2 985.4 642.4 987.2 644.8C989.1 647.2 991.0 649.4 993.6 651.2C996.3 653.1 1001.4 655.2 1002.9 656.0"/><path d="M874.4 616.0C872.9 617.7 868.1 623.4 865.5 626.4C863.0 629.5 860.2 633.1 859.1 634.4"/><path d="M920.0 645.6C917.6 648.4 910.6 657.0 905.6 662.4C900.5 667.9 892.2 675.8 889.6 678.5"/><path d="M918.4 646.4C919.7 649.1 923.9 657.2 926.4 662.4C928.9 667.7 932.4 675.1 933.6 677.7"/><path d="M933.6 677.7C931.9 679.7 926.8 685.3 923.2 689.7C919.6 694.1 915.5 699.0 912.0 704.1C908.5 709.2 905.0 715.3 902.4 720.1C899.7 724.9 897.8 729.4 896.0 732.9C894.1 736.4 893.3 737.4 891.2 740.9C889.0 744.4 885.8 749.5 883.2 753.7C880.5 758.0 877.6 762.2 875.2 766.5C872.8 770.9 869.8 777.7 868.7 780.0"/><path d="M849.5 629.6C849.1 630.0 847.8 630.3 847.1 632.0C846.5 633.8 845.7 636.8 845.5 640.0C845.4 643.2 846.2 648.0 846.3 651.2C846.5 654.4 846.3 657.9 846.3 659.2"/><path d="M839.1 641.6C839.8 642.7 842.2 645.9 843.1 648.0C844.1 650.2 844.5 653.4 844.7 654.4"/><path d="M839.1 641.6C838.7 642.7 837.7 646.2 836.7 648.0C835.8 649.9 835.1 651.5 833.5 652.8C831.9 654.2 829.5 655.1 827.1 656.0C824.7 657.0 821.5 657.1 819.1 658.4C816.7 659.8 814.2 662.0 812.7 664.1C811.2 666.1 810.7 668.1 810.3 670.5C809.9 672.9 810.2 675.7 810.3 678.5C810.4 681.3 811.0 685.8 811.1 687.3"/><path d="M807.1 673.7C806.3 673.8 803.2 673.4 802.3 674.5C801.4 675.5 801.5 677.5 801.5 680.1C801.5 682.6 802.0 686.7 802.3 689.7C802.6 692.6 803.0 696.3 803.1 697.7"/><path d="M806.3 705.7C805.0 704.1 801.2 698.7 798.3 696.1C795.4 693.4 791.6 691.0 788.7 689.7C785.7 688.3 783.1 687.8 780.7 688.1C778.3 688.3 775.3 690.7 774.3 691.3"/><path d="M774.3 691.3C772.4 691.5 766.3 691.8 763.1 692.9C759.9 693.9 756.9 695.5 755.1 697.7C753.2 699.8 752.4 704.4 751.9 705.7"/><path d="M772.7 694.5C774.3 695.3 779.1 696.6 782.3 699.3C785.5 701.9 790.3 708.6 791.9 710.5"/><path d="M758.3 708.9C759.9 709.4 764.5 710.4 767.9 712.1C771.2 713.8 776.5 718.1 778.3 719.3"/><path d="M758.3 708.9C756.4 709.2 749.9 708.9 747.1 710.5C744.2 712.1 742.1 715.6 741.4 718.5C740.8 721.4 741.6 725.2 743.0 728.1C744.5 731.0 747.5 734.2 750.3 736.1C753.1 738.0 756.5 738.9 759.9 739.3C763.2 739.7 768.5 738.6 770.3 738.5"/><path d="M770.3 738.5C769.1 739.4 764.5 741.8 763.1 744.1C761.6 746.4 761.2 749.2 761.5 752.1C761.7 755.1 762.8 759.2 764.7 761.7C766.5 764.3 769.2 766.5 772.7 767.3C776.1 768.1 781.7 767.7 785.5 766.5C789.2 765.3 792.4 762.5 795.1 760.1C797.8 757.7 800.4 753.5 801.5 752.1"/><path d="M801.5 752.1C803.1 752.4 807.4 753.7 811.1 753.7C814.8 753.7 820.2 753.5 823.9 752.1C827.6 750.8 831.1 748.1 833.5 745.7C835.9 743.3 837.5 739.0 838.3 737.7"/><path d="M838.3 737.7C840.2 737.4 846.1 736.9 849.5 736.1C853.0 735.3 856.2 734.5 859.1 732.9C862.1 731.3 864.5 728.6 867.1 726.5C869.8 724.4 872.5 722.0 875.2 720.1C877.8 718.2 881.8 715.8 883.2 715.0"/><path d="M883.2 715.0C883.3 716.1 882.9 719.2 884.0 721.7C885.0 724.2 887.6 727.8 889.6 729.7C891.6 731.6 894.9 732.4 896.0 732.9"/><path d="M849.5 629.6C850.6 630.8 853.5 634.0 855.9 636.8C858.3 639.6 861.5 643.2 863.9 646.4C866.3 649.6 868.7 653.1 870.3 656.0C872.0 659.0 873.0 662.7 873.6 664.1"/><path d="M867.1 675.3C867.8 673.9 869.4 670.2 871.2 667.3C872.9 664.3 876.5 659.2 877.6 657.6"/><path d="M877.6 657.6C878.5 659.2 881.7 663.8 883.2 667.3C884.6 670.7 886.1 674.7 886.4 678.5C886.6 682.2 886.1 686.5 884.8 689.7C883.4 692.9 880.6 695.7 878.4 697.7C876.1 699.7 872.4 701.0 871.2 701.7"/><path d="M877.6 717.7C876.4 719.4 871.8 724.5 870.3 728.1C868.9 731.7 868.4 736.9 868.7 739.3C869.1 741.7 871.7 742.0 872.3 742.5"/><path d="M872.3 742.5C871.4 742.0 868.8 740.4 867.1 739.3C865.5 738.2 863.1 736.6 862.3 736.1"/><path d="M902.4 721.7C905.8 722.8 915.7 726.1 923.2 728.1C930.7 730.1 939.2 732.4 947.2 733.7C955.2 735.0 961.9 735.6 971.2 736.1C980.5 736.6 997.7 736.8 1002.9 736.9"/><path d="M891.2 740.9C893.8 741.7 900.5 743.8 907.2 745.7C913.9 747.6 923.2 750.4 931.2 752.1C939.2 753.9 947.2 755.2 955.2 756.1C963.2 757.1 971.3 757.5 979.2 757.7C987.2 758.0 999.0 757.7 1002.9 757.7"/><path d="M729.4 780.0C729.3 777.7 728.4 770.5 728.6 766.5C728.9 762.6 730.6 757.9 731.0 756.1"/><path d="M731.0 756.1C732.1 757.1 734.8 760.0 737.4 761.7C740.1 763.5 743.8 765.5 747.1 766.5C750.3 767.6 753.7 768.0 756.7 768.1C759.6 768.3 763.3 767.5 764.7 767.3"/><path d="M1003.0 657.6C1005.1 658.6 1011.5 662.3 1015.8 663.3C1020.1 664.2 1024.4 664.2 1028.6 663.3C1032.9 662.3 1037.4 660.4 1041.4 657.6C1045.4 654.8 1049.6 650.2 1052.6 646.4C1055.7 642.7 1058.1 638.7 1059.8 635.2C1061.6 631.8 1062.2 628.3 1063.0 625.6C1063.8 623.0 1064.4 620.3 1064.6 619.2"/><path d="M1064.6 619.2C1064.9 620.5 1065.3 624.8 1066.3 627.2C1067.2 629.6 1068.7 632.4 1070.3 633.6C1071.9 634.8 1074.0 635.0 1075.9 634.4C1077.7 633.9 1079.5 632.7 1081.5 630.4C1083.5 628.2 1086.0 624.3 1087.9 620.8C1089.7 617.3 1091.5 613.1 1092.7 609.6C1093.9 606.1 1094.7 601.6 1095.1 600.0"/><path d="M1115.1 600.0C1116.7 602.4 1121.8 610.1 1124.7 614.4C1127.6 618.7 1131.4 623.8 1132.7 625.6"/><path d="M1075.9 634.4C1078.1 636.7 1085.1 643.6 1089.5 648.0C1093.9 652.4 1098.9 657.6 1102.3 660.8C1105.6 664.1 1108.3 666.2 1109.5 667.3"/><path d="M1076.7 635.2C1076.9 638.7 1077.6 648.6 1078.3 656.0C1078.9 663.5 1079.9 672.1 1080.7 680.1C1081.5 688.1 1082.4 697.1 1083.1 704.1C1083.7 711.0 1084.3 716.1 1084.7 721.7C1085.1 727.3 1085.3 735.0 1085.5 737.7"/><path d="M1085.5 737.7C1086.7 740.1 1089.9 747.1 1092.7 752.1C1095.5 757.2 1099.3 763.5 1102.3 768.1C1105.2 772.8 1109.0 778.0 1110.3 780.0"/><path d="M1003.0 736.9C1006.2 736.6 1015.5 736.2 1022.2 735.3C1028.9 734.4 1036.1 732.8 1043.0 731.3C1050.0 729.8 1057.0 728.1 1063.8 726.5C1070.7 724.9 1080.5 722.5 1083.9 721.7"/><path d="M1003.0 757.7C1006.2 757.5 1015.5 757.1 1022.2 756.1C1028.9 755.2 1036.1 753.7 1043.0 752.1C1050.0 750.5 1056.8 748.7 1063.8 746.5C1070.9 744.4 1081.9 740.5 1085.5 739.3"/><path d="M1132.7 625.6C1133.8 624.6 1136.6 621.1 1139.1 619.2C1141.6 617.3 1146.4 615.2 1147.9 614.4"/><path d="M1147.9 614.4C1148.2 616.0 1149.1 620.8 1149.5 624.0C1149.9 627.2 1150.1 630.4 1150.3 633.6C1150.5 636.8 1150.6 641.6 1150.6 643.2"/><path d="M1150.6 643.2C1151.0 641.6 1151.7 636.6 1152.7 633.6C1153.7 630.7 1156.1 627.0 1156.7 625.6"/><path d="M1156.7 625.6C1157.1 627.2 1158.1 632.8 1159.1 635.2C1160.2 637.6 1161.1 638.8 1163.1 640.0C1165.1 641.2 1168.5 641.4 1171.1 642.4C1173.8 643.5 1176.9 644.4 1179.1 646.4C1181.4 648.4 1183.5 652.0 1184.7 654.4C1185.9 656.8 1186.1 659.8 1186.3 660.8"/><path d="M1183.9 670.5C1184.3 668.9 1185.5 663.1 1186.3 660.8C1187.1 658.6 1187.4 657.6 1188.7 656.8C1190.1 656.0 1193.4 656.2 1194.4 656.0"/><path d="M1194.4 656.0C1194.1 657.6 1193.2 662.7 1192.8 665.7C1192.4 668.6 1191.8 671.0 1192.0 673.7C1192.1 676.3 1193.3 680.3 1193.6 681.7"/><path d="M1132.7 625.6C1131.4 627.0 1127.1 630.7 1124.7 633.6C1122.3 636.6 1120.4 640.3 1118.3 643.2C1116.2 646.2 1113.5 648.3 1111.9 651.2C1110.3 654.2 1109.1 657.6 1108.7 660.8C1108.3 664.1 1108.4 667.3 1109.5 670.5C1110.6 673.7 1112.8 677.4 1115.1 680.1C1117.4 682.7 1121.8 685.4 1123.1 686.5"/><path d="M1123.1 686.5C1122.6 687.8 1119.9 691.3 1119.9 694.5C1119.9 697.7 1121.2 702.2 1123.1 705.7C1125.0 709.2 1127.9 712.8 1131.1 715.3C1134.3 717.8 1138.3 719.8 1142.3 720.9C1146.3 722.0 1153.0 721.6 1155.1 721.7"/><path d="M1155.1 721.7C1155.4 723.0 1155.4 727.6 1156.7 729.7C1158.1 731.8 1160.5 733.2 1163.1 734.5C1165.8 735.8 1171.1 737.2 1172.7 737.7"/><path d="M1119.1 642.4C1120.0 643.9 1122.8 648.3 1124.7 651.2C1126.6 654.2 1129.4 658.6 1130.3 660.0"/><path d="M1189.5 690.5C1190.5 689.0 1192.9 684.2 1195.2 681.7C1197.4 679.1 1200.2 676.7 1203.2 675.3C1206.1 673.8 1210.1 673.0 1212.8 672.9C1215.4 672.7 1218.1 674.2 1219.2 674.5"/><path d="M1204.0 694.5C1205.2 692.9 1208.4 687.5 1211.2 684.9C1214.0 682.2 1217.3 679.8 1220.8 678.5C1224.2 677.1 1228.8 676.3 1232.0 676.9C1235.2 677.4 1237.9 679.5 1240.0 681.7C1242.1 683.8 1244.0 688.3 1244.8 689.7"/><path d="M1217.6 704.1C1219.2 702.7 1223.7 698.1 1227.2 696.1C1230.6 694.1 1234.9 692.3 1238.4 692.1C1241.9 691.8 1245.5 692.7 1248.0 694.5C1250.5 696.2 1252.5 699.5 1253.6 702.5C1254.7 705.4 1255.1 709.2 1254.4 712.1C1253.7 715.0 1252.0 718.1 1249.6 720.1C1247.2 722.1 1243.5 723.4 1240.0 724.1C1236.5 724.8 1230.6 724.1 1228.8 724.1"/><path d="M1226.4 724.9C1227.6 726.2 1232.3 730.0 1233.6 732.9C1234.9 735.8 1234.9 739.8 1234.4 742.5C1233.9 745.2 1232.1 747.5 1230.4 748.9C1228.6 750.4 1225.0 750.9 1224.0 751.3"/><path d="M729.4 780.0C730.0 781.3 731.3 785.6 732.6 788.0C734.0 790.4 735.6 793.1 737.4 794.4C739.3 795.7 742.8 795.7 743.8 796.0"/><path d="M743.8 796.0C741.7 796.5 735.3 797.6 731.0 799.2C726.8 800.8 722.0 803.0 718.2 805.6C714.5 808.3 711.3 811.2 708.6 815.2C706.0 819.2 704.0 824.8 702.2 829.6C700.5 834.4 699.4 839.2 698.2 844.1C697.0 848.9 696.5 853.9 695.0 858.5C693.5 863.0 691.4 868.1 689.4 871.3C687.4 874.5 684.1 876.6 683.0 877.7"/><path d="M683.0 898.5C684.6 899.6 689.1 903.3 692.6 904.9C696.1 906.5 700.5 907.7 703.8 908.1C707.2 908.5 711.2 907.4 712.6 907.3"/><path d="M712.6 907.3C711.7 909.3 708.4 914.9 707.0 919.3C705.7 923.7 704.8 928.9 704.6 933.7C704.5 938.5 705.4 943.8 706.2 948.1C707.0 952.5 708.9 958.0 709.4 960.0"/><path d="M739.0 960.0 L743.0 955.3"/><path d="M868.7 780.0C867.7 782.1 864.1 788.5 862.3 792.8C860.6 797.1 859.4 800.8 858.3 805.6C857.3 810.4 856.9 816.3 855.9 821.6C855.0 827.0 853.8 832.3 852.7 837.6C851.7 843.0 850.2 848.3 849.5 853.7C848.9 859.0 848.6 864.9 848.7 869.7C848.9 874.5 849.5 878.5 850.3 882.5C851.1 886.5 852.6 890.5 853.5 893.7C854.5 896.9 855.5 900.4 855.9 901.7"/><path d="M858.3 805.3C862.5 805.8 875.0 806.6 883.2 808.0C891.3 809.4 899.2 811.1 907.2 813.6C915.2 816.2 923.2 819.5 931.2 823.2C939.2 827.0 947.2 832.0 955.2 836.0C963.2 840.0 972.4 843.9 979.2 847.3C986.0 850.6 993.2 854.6 996.1 856.1"/><path d="M855.9 822.4C859.1 822.8 867.9 823.5 875.2 824.8C882.4 826.2 891.2 828.2 899.2 830.4C907.2 832.7 915.2 835.4 923.2 838.4C931.2 841.5 939.2 845.3 947.2 848.9C955.2 852.5 963.5 856.2 971.2 860.1C979.0 863.9 989.9 870.1 993.6 872.1"/><path d="M1000.9 845.7C1000.1 847.5 997.3 852.6 996.1 856.9C994.8 861.1 994.8 866.5 993.6 871.3C992.4 876.1 990.7 880.9 988.8 885.7C987.0 890.5 985.1 895.0 982.4 900.1C979.8 905.2 976.3 911.0 972.8 916.1C969.4 921.2 965.4 926.3 961.6 930.5C957.9 934.8 954.2 938.3 950.4 941.7C946.7 945.2 942.9 948.3 939.2 951.3C935.5 954.4 929.9 958.5 928.0 960.0"/><path d="M987.2 888.9C988.0 889.6 990.2 892.0 992.0 892.9C993.9 893.8 996.6 894.2 998.5 894.5C1000.3 894.8 1002.2 894.5 1002.9 894.5"/><path d="M855.9 901.7C854.6 902.8 850.7 906.2 847.9 908.1C845.1 910.0 840.6 912.1 839.1 912.9"/><path d="M839.1 912.9C837.4 912.5 832.1 911.8 828.7 910.5C825.4 909.2 821.8 906.9 819.1 904.9C816.4 902.9 814.3 900.0 812.7 898.5C811.1 897.0 810.0 896.5 809.5 896.1"/><path d="M809.5 896.1C809.0 897.0 807.1 898.9 806.3 901.7C805.5 904.5 804.7 909.2 804.7 912.9C804.7 916.6 805.2 920.6 806.3 924.1C807.4 927.6 809.5 931.1 811.1 933.7C812.7 936.4 815.1 939.1 815.9 940.1"/><path d="M815.9 940.1C814.8 939.7 811.9 938.3 809.5 937.7C807.1 937.2 802.8 937.1 801.5 936.9"/><path d="M801.5 936.9C801.2 938.5 799.9 942.7 799.9 946.5C799.9 950.4 801.2 957.7 801.5 960.0"/><path d="M1107.1 780.0C1108.7 782.4 1113.8 789.3 1116.7 794.4C1119.6 799.5 1122.3 804.8 1124.7 810.4C1127.1 816.0 1129.2 822.4 1131.1 828.0C1133.0 833.6 1134.4 838.2 1135.9 844.1C1137.4 849.9 1138.8 856.9 1139.9 863.3C1141.0 869.7 1141.8 876.6 1142.3 882.5C1142.8 888.4 1143.2 893.4 1143.1 898.5C1143.0 903.6 1142.0 908.6 1141.5 912.9C1141.0 917.2 1140.2 922.2 1139.9 924.1"/><path d="M1139.9 924.1C1141.6 924.2 1146.7 925.4 1150.3 924.9C1153.9 924.4 1158.3 922.6 1161.5 920.9C1164.7 919.2 1167.3 916.6 1169.5 914.5C1171.8 912.4 1173.7 909.3 1175.1 908.1C1176.6 906.9 1177.8 907.4 1178.3 907.3"/><path d="M1178.3 907.3C1179.1 908.8 1182.1 912.8 1183.1 916.1C1184.2 919.4 1185.0 923.6 1184.7 927.3C1184.5 931.1 1182.9 935.3 1181.5 938.5C1180.2 941.7 1177.5 945.2 1176.7 946.5"/><path d="M1176.7 946.5C1177.9 946.3 1181.9 945.3 1183.9 944.9C1185.9 944.5 1187.9 944.3 1188.7 944.1"/><path d="M1188.7 944.1C1189.0 945.3 1190.2 948.7 1190.3 951.3C1190.5 954.0 1189.7 958.5 1189.5 960.0"/><path d="M1003.0 858.5C1005.7 855.8 1013.1 847.5 1019.0 842.4C1024.9 837.4 1031.8 832.2 1038.2 828.0C1044.6 823.9 1051.3 820.3 1057.4 817.6C1063.6 815.0 1069.2 813.4 1075.1 812.0C1080.9 810.7 1086.5 810.0 1092.7 809.6C1098.8 809.2 1106.5 809.4 1111.9 809.6C1117.2 809.9 1122.6 811.0 1124.7 811.2"/><path d="M1006.2 874.5C1008.9 871.5 1016.3 862.2 1022.2 856.9C1028.1 851.5 1035.0 846.6 1041.4 842.4C1047.8 838.3 1054.2 834.8 1060.6 832.0C1067.1 829.2 1073.5 827.1 1079.9 825.6C1086.3 824.2 1092.7 823.5 1099.1 823.2C1105.5 823.0 1113.2 823.6 1118.3 824.0C1123.4 824.4 1127.6 825.4 1129.5 825.6"/><path d="M1003.0 860.1C1003.4 862.7 1004.3 870.7 1005.4 876.1C1006.5 881.4 1007.7 886.8 1009.4 892.1C1011.1 897.4 1013.1 902.8 1015.8 908.1C1018.5 913.4 1021.7 918.8 1025.4 924.1C1029.2 929.5 1033.7 935.3 1038.2 940.1C1042.8 944.9 1048.4 949.6 1052.6 952.9C1056.9 956.2 1062.0 958.8 1063.8 960.0"/><path d="M712.6 962.4C714.0 964.3 717.8 970.2 720.6 973.7C723.4 977.1 728.0 981.7 729.4 983.3"/><path d="M729.4 983.3C730.4 981.9 733.4 978.5 735.0 975.3C736.6 972.1 737.7 967.4 739.0 964.1C740.4 960.7 742.4 956.7 743.0 955.2"/><path d="M743.0 955.2C742.4 957.2 739.8 963.1 739.0 967.3C738.2 971.4 737.7 975.8 738.2 980.1C738.8 984.3 740.2 988.9 742.2 992.9C744.2 996.9 747.3 1000.6 750.3 1004.1C753.2 1007.6 757.2 1011.2 759.9 1013.7C762.5 1016.1 765.2 1018.0 766.3 1018.8"/><path d="M809.5 970.5C811.1 971.9 815.6 977.0 819.1 979.3C822.6 981.5 826.6 983.3 830.3 984.1C834.1 984.9 837.8 984.6 841.5 984.1C845.3 983.5 849.3 982.1 852.7 980.9C856.2 979.7 859.9 977.9 862.3 976.9C864.7 975.8 866.3 974.9 867.1 974.5"/><path d="M867.1 974.5C867.9 975.9 869.8 980.2 872.0 983.3C874.1 986.3 876.8 990.1 880.0 992.9C883.2 995.7 887.2 998.3 891.2 1000.1C895.2 1001.8 899.8 1003.0 904.0 1003.3C908.1 1003.5 914.0 1001.9 916.0 1001.7"/><path d="M916.0 1001.7C915.1 999.9 911.6 994.9 910.4 991.3C909.2 987.7 908.6 983.7 908.8 980.1C908.9 976.5 910.8 971.4 911.2 969.7"/><path d="M911.2 969.7C913.2 968.5 920.4 964.1 923.2 962.4C926.0 960.8 927.2 960.0 928.0 959.6"/><path d="M811.1 980.1C810.7 982.2 809.0 988.6 808.7 992.9C808.4 997.1 809.0 1001.4 809.5 1005.7C810.0 1010.0 811.5 1016.6 811.9 1018.8"/><path d="M888.8 1000.1C888.5 1001.5 887.3 1005.8 887.2 1008.9C887.0 1012.0 887.8 1017.2 888.0 1018.8"/><path d="M800.7 959.2C801.1 959.5 801.6 959.0 803.1 960.8C804.6 962.7 808.4 968.9 809.5 970.5"/><path d="M1063.8 960.0C1064.9 961.0 1067.1 963.4 1070.3 965.7C1073.5 967.9 1079.3 971.3 1083.1 973.7C1086.8 976.1 1091.1 979.0 1092.7 980.1"/><path d="M1092.7 980.1C1093.1 981.4 1095.2 985.4 1095.1 988.1C1094.9 990.7 1093.5 993.8 1091.9 996.1C1090.3 998.3 1086.5 1000.7 1085.5 1001.7"/><path d="M1085.5 1001.7C1086.9 1002.2 1090.9 1004.4 1094.3 1004.9C1097.6 1005.4 1101.7 1005.4 1105.5 1004.9C1109.2 1004.4 1113.2 1003.4 1116.7 1001.7C1120.2 999.9 1123.6 997.0 1126.3 994.5C1129.0 991.9 1131.2 988.5 1132.7 986.5C1134.2 984.5 1134.7 983.1 1135.1 982.5"/><path d="M1135.1 982.5C1136.6 983.3 1140.6 986.1 1143.9 987.3C1147.2 988.5 1151.4 989.5 1155.1 989.7C1158.9 989.8 1163.0 989.0 1166.3 988.1C1169.7 987.1 1172.7 985.4 1175.1 984.1C1177.5 982.7 1179.8 980.7 1180.7 980.1"/><path d="M1188.7 960.8C1188.7 961.6 1189.5 963.3 1188.7 965.7C1187.9 968.1 1185.3 972.9 1183.9 975.3C1182.6 977.7 1181.3 979.3 1180.7 980.1"/><path d="M1180.7 980.1C1181.5 982.2 1184.2 988.3 1185.5 992.9C1186.9 997.4 1188.1 1003.0 1188.7 1007.3C1189.4 1011.6 1189.4 1016.9 1189.5 1018.8"/><path d="M1113.5 1004.1C1114.0 1005.4 1115.9 1009.6 1116.7 1012.1C1117.4 1014.5 1117.8 1017.7 1118.0 1018.8"/></g><g fill="none" stroke-linecap="round" stroke-linejoin="round" style="filter:blur(0.45px)"><path d="M804.7 420.0C804.0 416.7 801.7 406.6 800.7 400.1C799.7 393.6 798.5 387.3 798.6 380.9C798.7 374.5 800.2 367.6 801.5 361.7C802.8 355.8 804.8 349.3 806.3 345.7C807.8 342.1 809.6 341.0 810.3 340.1" stroke="#111" stroke-width="2.1"/><path d="M810.3 340.1C811.2 341.0 813.6 343.7 815.9 345.7C818.2 347.7 821.0 350.1 823.9 352.1C826.8 354.1 830.3 356.4 833.5 357.7C836.7 359.0 839.7 359.7 843.1 360.1C846.6 360.4 852.5 359.8 854.3 359.8" stroke="#111" stroke-width="2.1"/><path d="M854.3 359.8C853.0 358.2 848.6 354.4 846.3 350.5C844.1 346.5 842.2 341.1 840.7 336.1C839.3 331.0 837.9 324.9 837.5 320.1C837.1 315.3 837.4 312.1 838.3 307.3C839.3 302.4 841.3 295.8 843.1 291.2C845.0 286.7 847.3 282.5 849.5 280.0C851.8 277.6 855.5 277.1 856.7 276.5" stroke="#111" stroke-width="2.1"/><path d="M856.7 276.5C857.9 277.1 861.4 277.8 863.9 280.0C866.5 282.2 868.7 286.0 872.0 289.6C875.2 293.2 879.2 297.9 883.2 301.6C887.2 305.4 892.0 309.3 896.0 312.1C900.0 314.9 904.0 316.8 907.2 318.5C910.4 320.1 913.9 321.4 915.2 322.0" stroke="#111" stroke-width="2.1"/><path d="M915.2 322.0C914.5 320.1 912.0 314.5 911.2 310.5C910.3 306.4 909.9 302.2 910.1 297.6C910.2 293.1 910.6 288.6 912.0 283.2C913.4 277.9 916.3 270.3 918.4 265.6C920.5 261.0 922.9 257.7 924.8 255.2C926.7 252.8 928.8 251.6 929.6 250.9" stroke="#111" stroke-width="2.1"/><path d="M929.6 250.9C930.4 252.0 932.3 254.1 934.4 257.6C936.5 261.1 939.2 267.2 942.4 272.0C945.6 276.8 949.9 282.4 953.6 286.4C957.4 290.4 961.1 293.6 964.8 296.0C968.6 298.4 972.3 299.9 976.0 300.8C979.8 301.8 983.8 301.9 987.2 301.6C990.7 301.4 994.2 300.2 996.9 299.2C999.5 298.3 1001.9 296.6 1002.9 296.0" stroke="#111" stroke-width="2.1"/><path d="M833.5 420.0C834.1 417.7 835.1 411.4 836.7 406.5C838.3 401.6 840.5 395.6 843.1 390.5C845.8 385.4 849.5 379.8 852.7 376.1C855.9 372.4 858.6 370.1 862.3 368.1C866.1 366.1 870.9 364.4 875.2 364.1C879.4 363.8 884.2 365.0 888.0 366.5C891.7 368.0 894.4 370.5 897.6 372.9C900.8 375.3 904.2 379.3 907.2 380.9C910.1 382.6 912.0 383.1 915.2 382.8C918.4 382.6 922.9 381.2 926.4 379.3C929.9 377.4 932.8 374.2 936.0 371.3C939.2 368.4 942.4 364.4 945.6 361.7C948.8 359.0 951.5 356.9 955.2 355.3C959.0 353.7 963.8 352.4 968.0 352.1C972.3 351.8 976.6 352.6 980.8 353.7C985.1 354.8 990.0 356.9 993.6 358.5C997.3 360.1 1001.4 362.5 1002.9 363.3" stroke="#7d7d7d" stroke-width="2.21" opacity="0.9"/><path d="M857.5 420.0C858.1 418.0 858.9 411.0 860.7 408.1C862.6 405.2 865.8 403.6 868.7 402.5C871.7 401.5 874.9 401.1 878.4 401.7C881.8 402.4 886.4 404.4 889.6 406.5C892.8 408.7 895.7 412.3 897.6 414.5C899.4 416.8 900.2 419.1 900.8 420.0" stroke="#8a8a8a" stroke-width="2.08" opacity="0.9"/><path d="M862.3 420.0C863.1 418.3 864.7 412.1 867.1 409.7C869.5 407.4 873.6 405.7 876.8 405.7C880.0 405.7 883.7 407.4 886.4 409.7C889.0 412.1 891.7 418.3 892.8 420.0" stroke="#8a8a8a" stroke-width="1.43" opacity="0.6"/><path d="M937.6 420.0C938.1 417.7 938.9 410.6 940.8 406.5C942.7 402.4 945.6 398.0 948.8 395.3C952.0 392.7 956.3 391.3 960.0 390.5C963.8 389.7 967.5 390.0 971.2 390.5C975.0 391.1 979.0 391.6 982.4 393.7C985.9 395.9 989.4 399.9 992.0 403.3C994.7 406.8 996.9 411.8 998.5 414.5C1000.1 417.3 1001.1 419.1 1001.7 420.0" stroke="#8a8a8a" stroke-width="2.08" opacity="0.9"/><path d="M944.0 420.0C944.8 417.5 946.1 408.9 948.8 404.9C951.5 401.0 956.0 397.6 960.0 396.1C964.0 394.7 968.8 395.2 972.8 396.1C976.8 397.1 980.8 398.7 984.0 401.7C987.2 404.8 990.7 412.4 992.0 414.5" stroke="#8a8a8a" stroke-width="1.43" opacity="0.6"/><path d="M806.3 420.0C805.8 416.7 804.0 406.6 803.4 400.1C802.8 393.6 802.1 387.1 802.8 380.9C803.5 374.8 805.3 367.8 807.6 363.3C809.9 358.8 815.2 355.6 816.7 354.0" stroke="#8a8a8a" stroke-width="1.17" opacity="0.5"/><path d="M779.1 420.0C780.4 418.9 784.4 415.6 787.1 413.7C789.8 411.9 793.8 409.7 795.1 408.9" stroke="#8a8a8a" stroke-width="2.08" opacity="0.9"/><path d="M831.9 315.3C832.1 312.9 831.7 305.4 832.7 300.8C833.8 296.3 836.1 291.2 838.3 288.0C840.6 284.8 845.0 282.7 846.3 281.6" stroke="#8a8a8a" stroke-width="1.17" opacity="0.4"/><path d="M907.2 307.3C907.3 304.1 907.6 293.4 908.0 288.0C908.4 282.7 909.3 277.4 909.6 275.2" stroke="#8a8a8a" stroke-width="1.56" opacity="0.7"/><path d="M929.6 257.6C931.2 260.4 935.5 269.4 939.2 274.4C942.9 279.5 947.7 284.2 952.0 288.0C956.3 291.9 960.3 295.1 964.8 297.6C969.4 300.2 973.9 302.6 979.2 303.3C984.6 303.9 993.9 301.9 996.9 301.6" stroke="#8a8a8a" stroke-width="1.3" opacity="0.6"/><path d="M872.0 291.2C874.1 293.4 880.5 301.1 884.8 304.1C889.0 307.0 893.6 308.1 897.6 308.9C901.6 309.7 906.9 308.9 908.8 308.9" stroke="#8a8a8a" stroke-width="1.3" opacity="0.6"/><path d="M815.9 346.5C817.8 347.8 823.1 352.5 827.1 354.5C831.1 356.5 835.7 358.0 839.9 358.5C844.2 359.0 850.6 357.8 852.7 357.7" stroke="#8a8a8a" stroke-width="1.3" opacity="0.6"/><path d="M823.9 420.0C826.0 416.1 832.5 403.7 836.7 396.9C841.0 390.1 845.5 384.1 849.5 379.3C853.5 374.5 858.9 370.0 860.7 368.1" stroke="#c9dcea" stroke-width="2.08" opacity="0.8"/><path d="M910.4 384.1C911.7 384.9 915.7 388.5 918.4 388.9C921.1 389.3 925.1 386.9 926.4 386.5" stroke="#8a8a8a" stroke-width="1.3" opacity="0.5"/><path d="M1003.0 294.4C1004.6 292.6 1009.4 287.0 1012.6 283.2C1015.8 279.5 1019.5 275.0 1022.2 272.0C1024.9 269.1 1026.9 267.0 1028.6 265.6C1030.4 264.2 1032.0 264.0 1032.6 263.7" stroke="#111" stroke-width="2.1"/><path d="M1032.6 263.7C1033.4 264.8 1035.7 267.2 1037.4 270.4C1039.2 273.7 1041.2 278.4 1043.0 283.2C1044.9 288.0 1047.2 293.9 1048.6 299.2C1050.1 304.6 1051.2 310.7 1051.8 315.3C1052.5 319.8 1053.0 322.5 1052.6 326.5C1052.2 330.5 1050.8 336.1 1049.4 339.3C1048.1 342.5 1046.1 344.1 1044.6 345.7C1043.2 347.3 1041.3 348.4 1040.6 348.9" stroke="#111" stroke-width="2.1"/><path d="M1051.0 330.5C1051.8 329.5 1054.1 325.9 1055.8 324.5C1057.6 323.2 1059.0 322.0 1061.4 322.5C1063.8 322.9 1067.2 324.5 1070.3 327.3C1073.3 330.1 1076.9 334.6 1079.9 339.3C1082.8 343.9 1085.9 349.7 1087.9 355.3C1089.9 360.9 1091.1 368.1 1091.9 372.9C1092.7 377.7 1092.9 380.4 1092.7 384.1C1092.4 387.9 1092.0 391.2 1090.3 395.3C1088.5 399.5 1083.6 406.7 1082.3 408.9" stroke="#111" stroke-width="2.1"/><path d="M1082.3 408.9C1083.5 407.7 1086.9 403.7 1089.5 401.7C1092.0 399.7 1094.9 398.0 1097.5 396.9C1100.0 395.8 1102.9 394.9 1104.7 395.0C1106.4 395.1 1107.0 395.5 1107.9 397.7C1108.8 399.9 1109.5 404.4 1110.0 408.1C1110.4 411.8 1110.5 418.0 1110.6 420.0" stroke="#111" stroke-width="2.1"/><path d="M1147.9 372.9C1145.9 371.6 1139.5 368.6 1135.9 364.9C1132.3 361.2 1128.8 355.8 1126.3 350.5C1123.8 345.2 1122.0 338.7 1121.2 332.9C1120.4 327.0 1120.4 321.1 1121.5 315.3C1122.6 309.4 1125.0 303.5 1127.9 297.6C1130.8 291.8 1134.6 285.1 1139.1 280.0C1143.6 275.0 1149.5 270.4 1155.1 267.2C1160.7 264.0 1166.9 261.9 1172.7 260.8C1178.6 259.7 1184.5 259.7 1190.3 260.5C1196.2 261.3 1202.4 262.9 1208.0 265.6C1213.6 268.3 1219.4 272.6 1224.0 276.8C1228.5 281.1 1232.1 285.9 1235.2 291.2C1238.3 296.6 1241.1 302.4 1242.4 308.9C1243.7 315.3 1243.9 323.0 1243.2 329.7C1242.5 336.3 1240.8 342.7 1238.4 348.9C1236.0 355.0 1232.8 361.7 1228.8 366.5C1224.8 371.3 1219.4 374.8 1214.4 377.7C1209.3 380.6 1202.9 382.9 1198.4 384.1C1193.8 385.3 1190.3 384.2 1187.1 384.9C1183.9 385.6 1182.1 386.3 1179.1 388.1C1176.2 390.0 1173.3 394.0 1169.5 396.1C1165.8 398.3 1161.0 400.0 1156.7 400.9C1152.5 401.9 1147.6 402.3 1143.9 401.7C1140.2 401.2 1136.7 399.1 1134.3 397.7C1131.9 396.4 1130.3 394.4 1129.5 393.7" stroke="#858585" stroke-width="1.95" opacity="0.9"/><path d="M1129.5 393.7C1130.6 392.9 1133.8 391.1 1135.9 388.9C1138.0 386.8 1140.3 383.6 1142.3 380.9C1144.3 378.2 1147.0 374.2 1147.9 372.9" stroke="#808080" stroke-width="2.08" opacity="0.9"/><path d="M1129.5 352.1C1128.7 348.9 1125.1 339.5 1124.7 332.9C1124.3 326.2 1125.2 319.0 1127.1 312.1C1129.0 305.1 1132.0 297.5 1135.9 291.2C1139.8 285.0 1144.7 278.7 1150.3 274.4C1155.9 270.2 1162.9 267.2 1169.5 265.6C1176.2 264.0 1183.7 264.0 1190.3 264.8C1197.0 265.6 1203.7 267.4 1209.6 270.4C1215.4 273.5 1221.2 278.2 1225.6 283.2C1230.0 288.3 1233.7 294.2 1236.0 300.8C1238.3 307.5 1239.3 315.8 1239.2 323.3C1239.1 330.7 1237.5 339.0 1235.2 345.7C1232.9 352.4 1229.6 358.5 1225.6 363.3C1221.6 368.1 1213.6 372.6 1211.2 374.5" stroke="#8a8a8a" stroke-width="1.17" opacity="0.45"/><path d="M1131.1 400.1C1133.2 400.9 1139.1 404.3 1143.9 404.9C1148.7 405.6 1155.1 405.2 1159.9 404.1C1164.7 403.1 1170.6 399.5 1172.7 398.5" stroke="#8a8a8a" stroke-width="1.04" opacity="0.4"/><path d="M1163.1 329.7C1164.7 330.5 1170.4 331.9 1172.7 334.5C1175.1 337.0 1177.2 341.4 1177.2 344.9C1177.2 348.4 1175.1 352.8 1172.7 355.3C1170.4 357.8 1166.3 360.0 1163.1 360.1C1159.9 360.2 1155.9 358.6 1153.5 356.1C1151.2 353.6 1149.0 348.5 1149.0 344.9C1149.0 341.3 1152.8 336.2 1153.5 334.5Z" fill="#8c8c8c" stroke="none" opacity="1"/><ellipse cx="1163.1" cy="344.9" rx="9.6" ry="10.6" fill="none" stroke="#7a7a7a" stroke-width="1" opacity="0.6" transform="rotate(0 1163.1 344.9)"/><path d="M1166.7 332.9 L1180.4 282.9 L1187.5 286.8 L1175.6 337.0Z" fill="#878787" stroke="none" opacity="1"/><path d="M1180.4 282.9 L1206.7 307.3 L1199.3 329.7 L1185.9 304.1Z" fill="#858585" stroke="none" opacity="1"/><path d="M1183.9 288.0 L1203.2 310.5" stroke="#666" stroke-width="1.56" opacity="0.6"/><path d="M1027.0 280.0C1028.4 284.0 1033.2 296.3 1035.0 304.1C1036.9 311.8 1038.5 320.6 1038.2 326.5C1038.0 332.3 1034.2 337.1 1033.4 339.3" stroke="#8a8a8a" stroke-width="1.17" opacity="0.5"/><path d="M1030.2 272.0C1032.0 275.5 1038.1 285.6 1040.6 292.8C1043.2 300.0 1044.5 308.9 1045.4 315.3C1046.4 321.7 1046.9 326.5 1046.2 331.3C1045.6 336.1 1042.2 341.9 1041.4 344.1" stroke="#8a8a8a" stroke-width="1.3" opacity="0.55"/><path d="M1070.3 331.3C1071.9 334.2 1077.2 342.7 1079.9 348.9C1082.5 355.0 1084.9 361.7 1086.3 368.1C1087.6 374.5 1088.4 381.4 1087.9 387.3C1087.3 393.2 1083.9 400.7 1083.1 403.3" stroke="#8a8a8a" stroke-width="1.17" opacity="0.5"/><path d="M1003.0 363.3C1004.6 365.7 1009.4 372.6 1012.6 377.7C1015.8 382.8 1019.3 387.6 1022.2 393.7C1025.2 399.9 1028.5 410.2 1030.2 414.5C1032.0 418.9 1032.2 419.1 1032.6 420.0" stroke="#8a8a8a" stroke-width="1.69" opacity="0.9"/><path d="M1031.8 414.5C1033.7 412.1 1039.8 401.5 1043.0 400.1C1046.2 398.8 1049.2 403.2 1051.0 406.5C1052.9 409.8 1053.7 417.7 1054.2 420.0" stroke="#8a8a8a" stroke-width="1.56" opacity="0.8"/><path d="M1007.8 339.3C1010.2 341.9 1017.7 349.2 1022.2 355.3C1026.8 361.4 1031.8 369.2 1035.0 376.1C1038.2 383.0 1040.4 393.5 1041.4 396.9" stroke="#d4e4ee" stroke-width="1.82" opacity="0.8"/><path d="M797.0 421.3C798.6 421.9 802.9 423.4 806.3 424.8C809.7 426.2 815.6 429.1 817.5 429.9" stroke="#111" stroke-width="1.8"/><path d="M797.0 421.3C796.5 422.9 794.7 427.2 794.0 431.2C793.2 435.3 792.5 440.5 792.7 445.6C792.9 450.7 793.9 456.6 795.1 461.6C796.3 466.7 797.8 471.2 799.9 476.0C802.0 480.8 805.2 486.7 807.9 490.5C810.6 494.2 813.5 496.5 815.9 498.5C818.3 500.5 820.1 501.7 822.3 502.5C824.5 503.3 827.9 503.1 829.0 503.3" stroke="#111" stroke-width="2.1"/><path d="M819.4 505.7C819.6 507.1 819.7 511.7 820.7 514.5C821.7 517.3 823.6 520.3 825.5 522.5C827.4 524.6 829.7 526.2 831.9 527.3C834.2 528.4 837.9 528.9 839.1 529.2" stroke="#111" stroke-width="2.1"/><path d="M839.1 529.2C839.7 528.1 841.1 524.4 842.3 522.5C843.5 520.6 845.7 518.5 846.3 517.7" stroke="#111" stroke-width="2.1"/><path d="M846.3 517.7C845.4 520.1 842.1 527.0 840.7 532.1C839.4 537.2 838.3 543.0 838.3 548.1C838.3 553.2 839.4 558.5 840.7 562.5C842.1 566.5 844.3 569.6 846.3 572.1C848.3 574.7 850.7 576.8 852.7 577.7C854.8 578.7 857.7 577.7 858.7 577.7" stroke="#111" stroke-width="2.1"/><path d="M858.7 577.7C857.9 578.7 855.6 580.8 854.3 583.3C853.1 585.9 851.8 590.2 851.1 592.9C850.5 595.7 850.5 598.8 850.3 600.0" stroke="#111" stroke-width="2.1"/><path d="M846.3 517.7C847.8 518.5 852.6 520.3 855.1 522.5C857.7 524.6 859.5 528.0 861.5 530.5C863.5 533.0 865.8 536.1 867.1 537.7C868.5 539.3 869.4 539.7 869.9 540.1" stroke="#111" stroke-width="2.1"/><path d="M867.1 492.9C866.4 495.1 863.8 502.1 862.7 506.5C861.5 510.9 860.3 515.3 860.4 519.3C860.5 523.3 861.6 527.0 863.1 530.5C864.7 534.0 868.5 538.5 869.5 540.1" stroke="#111" stroke-width="2.1"/><path d="M867.1 492.9C868.2 494.1 871.2 497.8 873.6 500.1C876.0 502.3 878.6 504.8 881.6 506.5C884.5 508.1 888.0 509.5 891.2 510.0C894.4 510.5 897.6 510.5 900.8 509.7C904.0 508.8 907.4 507.0 910.4 504.9C913.3 502.7 916.0 499.8 918.4 496.9C920.8 493.9 922.8 490.5 924.8 487.3C926.8 484.1 929.5 479.2 930.4 477.6" stroke="#111" stroke-width="2.1"/><path d="M930.4 477.6C931.6 478.7 935.6 481.1 937.6 484.1C939.6 487.0 941.1 491.3 942.4 495.3C943.7 499.3 944.9 504.1 945.6 508.1C946.3 512.1 946.7 516.5 946.4 519.3C946.1 522.1 944.4 523.9 944.0 524.9" stroke="#111" stroke-width="2.1"/><path d="M944.0 524.9C945.3 523.1 949.3 518.9 952.0 514.5C954.7 510.1 957.6 503.5 960.0 498.5C962.4 493.4 964.6 488.3 966.4 484.1C968.3 479.8 970.4 474.7 971.2 472.8" stroke="#111" stroke-width="2.1"/><path d="M971.2 472.8C972.6 474.2 976.6 477.4 979.2 480.8C981.9 484.3 985.0 489.4 987.2 493.7C989.5 497.9 991.6 502.2 992.8 506.5C994.0 510.7 994.6 515.3 994.4 519.3C994.3 523.3 993.5 527.6 992.0 530.5C990.6 533.4 988.8 535.4 985.6 536.9C982.4 538.4 975.0 538.9 972.8 539.3" stroke="#111" stroke-width="2.1"/><path d="M900.8 548.1C900.0 546.8 897.8 542.4 896.0 540.1C894.1 537.8 891.7 535.7 889.6 534.5C887.4 533.3 885.2 532.2 883.2 532.9C881.2 533.6 878.6 535.4 877.6 538.5C876.5 541.6 876.5 547.0 876.8 551.3C877.0 555.6 877.8 560.4 879.2 564.1C880.5 567.9 882.5 571.2 884.8 573.7C887.0 576.3 890.0 577.9 892.8 579.3C895.5 580.8 899.7 582.0 901.1 582.5" stroke="#111" stroke-width="2.1"/><path d="M901.1 582.5C898.9 582.3 891.5 580.5 888.0 580.9C884.4 581.3 882.0 582.9 880.0 584.9C878.0 586.9 876.8 590.4 876.0 592.9C875.2 595.4 875.3 598.8 875.2 600.0" stroke="#111" stroke-width="2.1"/><path d="M984.0 556.1C985.1 556.6 987.8 558.6 990.4 559.3C993.1 560.0 998.0 560.1 1000.1 560.1C1002.1 560.2 1002.5 559.7 1002.9 559.6" stroke="#111" stroke-width="2.1"/><path d="M974.4 579.3C975.2 580.5 977.1 584.4 979.2 586.5C981.4 588.7 984.3 591.1 987.2 592.1C990.2 593.2 994.2 593.3 996.9 592.9C999.5 592.5 1001.9 590.3 1002.9 589.7" stroke="#111" stroke-width="2.1"/><path d="M993.6 564.1C994.6 565.4 998.1 569.5 999.3 572.1C1000.5 574.8 1000.9 577.5 1000.9 580.1C1000.9 582.8 999.5 586.8 999.3 588.1" stroke="#333" stroke-width="1.4"/><path d="M785.5 420.0C783.3 421.6 777.2 425.3 772.7 429.6C768.1 433.9 763.1 439.5 758.3 445.6C753.5 451.8 748.4 459.5 743.8 466.4C739.3 473.4 734.8 480.0 731.0 487.3C727.3 494.5 724.0 502.2 721.4 509.7C718.9 517.1 717.0 525.2 715.8 532.1C714.6 539.0 714.0 545.4 714.2 551.3C714.5 557.2 715.4 562.2 717.4 567.3C719.4 572.4 722.9 577.7 726.2 581.7C729.6 585.7 733.4 589.1 737.4 591.3C741.4 593.6 746.0 595.1 750.3 595.3C754.5 595.6 758.5 594.4 763.1 592.9C767.6 591.5 772.7 589.2 777.5 586.5C782.3 583.9 787.1 580.7 791.9 576.9C796.7 573.2 801.8 568.7 806.3 564.1C810.8 559.6 815.1 554.5 819.1 549.7C823.1 544.9 827.4 538.8 830.3 535.3C833.3 531.8 835.7 530.0 836.7 528.9" stroke="#828282" stroke-width="2.21" opacity="0.9"/><path d="M779.1 423.2C776.4 426.1 768.4 434.1 763.1 440.8C757.7 447.5 752.1 455.5 747.1 463.2C742.0 471.0 736.6 479.5 732.6 487.3C728.6 495.0 725.6 502.2 723.0 509.7C720.5 517.1 718.5 524.9 717.4 532.1C716.4 539.3 716.0 546.5 716.6 552.9C717.3 559.3 719.0 565.2 721.4 570.5C723.8 575.9 727.3 581.2 731.0 584.9C734.8 588.7 741.7 591.6 743.8 592.9" stroke="#8a8a8a" stroke-width="1.17" opacity="0.5"/><path d="M793.5 460.0C791.6 461.9 786.3 466.7 782.3 471.2C778.3 475.8 773.5 481.9 769.5 487.3C765.5 492.6 761.2 497.9 758.3 503.3C755.3 508.6 753.3 514.5 751.9 519.3C750.4 524.1 749.2 528.4 749.5 532.1C749.7 535.8 751.5 539.2 753.5 541.7C755.5 544.2 758.3 546.2 761.5 547.3C764.7 548.4 768.7 548.8 772.7 548.1C776.7 547.4 781.5 545.4 785.5 543.3C789.5 541.2 793.0 538.5 796.7 535.3C800.4 532.1 804.7 528.1 807.9 524.1C811.1 520.1 814.6 513.4 815.9 511.3" stroke="#868686" stroke-width="2.08" opacity="0.9"/><path d="M755.1 506.5C754.4 509.7 751.1 519.8 751.1 525.7C751.1 531.6 752.5 537.4 755.1 541.7C757.6 546.0 761.7 550.2 766.3 551.3C770.8 552.4 779.6 548.6 782.3 548.1" stroke="#8a8a8a" stroke-width="1.17" opacity="0.5"/><path d="M870.3 432.0C872.5 433.7 878.8 438.8 883.2 442.4C887.6 446.0 894.5 451.8 896.8 453.6" stroke="#808080" stroke-width="1.82" opacity="0.9"/><path d="M896.8 453.6C895.0 454.3 890.0 456.0 886.4 457.6C882.8 459.2 877.0 462.3 875.2 463.2" stroke="#808080" stroke-width="1.82" opacity="0.9"/><path d="M872.0 435.2C874.1 436.9 881.0 442.7 884.8 445.6C888.5 448.6 892.8 451.6 894.4 452.8" stroke="#8a8a8a" stroke-width="1.17" opacity="0.5"/><path d="M976.0 423.2C974.2 425.3 968.3 431.6 964.8 436.0C961.4 440.4 956.8 447.4 955.2 449.6" stroke="#808080" stroke-width="1.82" opacity="0.9"/><path d="M955.2 449.6C957.9 449.1 965.4 446.6 971.2 446.4C977.1 446.3 987.2 448.4 990.4 448.8" stroke="#808080" stroke-width="1.82" opacity="0.9"/><path d="M896.0 420.0C897.6 422.1 903.4 428.0 905.6 432.8C907.7 437.6 908.8 444.3 908.8 448.8C908.8 453.4 906.1 458.2 905.6 460.0" stroke="#8a8a8a" stroke-width="1.95" opacity="0.9"/><path d="M854.3 420.0C854.6 422.7 854.9 430.9 855.9 436.0C857.0 441.1 858.3 446.4 860.7 450.4C863.1 454.4 868.7 458.4 870.3 460.0" stroke="#8a8a8a" stroke-width="1.82" opacity="0.9"/><path d="M937.6 420.0C936.9 422.7 933.9 430.7 933.6 436.0C933.3 441.4 934.8 447.8 936.0 452.0C937.2 456.3 940.0 460.0 940.8 461.6" stroke="#8a8a8a" stroke-width="1.95" opacity="0.9"/><path d="M904.0 456.8C904.5 458.7 905.3 464.8 907.2 468.0C909.0 471.2 912.0 474.4 915.2 476.0C918.4 477.6 922.7 478.2 926.4 477.6C930.1 477.1 934.9 474.7 937.6 472.8C940.3 471.0 942.4 468.8 942.4 466.4C942.4 464.0 938.4 459.8 937.6 458.4" stroke="#8a8a8a" stroke-width="1.95" opacity="0.9"/><path d="M892.8 479.2C893.2 480.8 893.6 486.2 895.2 488.9C896.8 491.5 899.3 493.7 902.4 495.3C905.4 496.9 911.7 497.9 913.6 498.5" stroke="#8a8a8a" stroke-width="1.82" opacity="0.9"/><path d="M835.1 479.2C835.4 481.1 835.4 487.3 836.7 490.5C838.1 493.7 840.5 496.6 843.1 498.5C845.8 500.3 849.8 501.3 852.7 501.7C855.7 502.1 859.4 501.0 860.7 500.9" stroke="#8a8a8a" stroke-width="1.82" opacity="0.9"/><path d="M823.9 440.8C824.2 443.5 824.2 451.8 825.5 456.8C826.8 461.9 829.3 468.0 831.9 471.2C834.6 474.4 839.9 475.2 841.5 476.0" stroke="#8a8a8a" stroke-width="1.95" opacity="0.9"/><path d="M836.7 420.0C837.5 423.2 840.2 432.3 841.5 439.2C842.9 446.2 843.4 455.2 844.7 461.6C846.1 468.0 847.1 472.8 849.5 477.6C851.9 482.4 855.4 487.3 859.1 490.5C862.9 493.7 869.8 495.8 872.0 496.9" stroke="#8a8a8a" stroke-width="1.82" opacity="0.9"/><path d="M827.1 509.7C828.7 511.0 833.0 515.5 836.7 517.7C840.5 519.8 847.4 521.7 849.5 522.5" stroke="#8a8a8a" stroke-width="1.56" opacity="0.7"/><path d="M923.2 490.5C924.8 491.3 929.6 493.1 932.8 495.3C936.0 497.4 940.8 501.9 942.4 503.3" stroke="#8a8a8a" stroke-width="1.3" opacity="0.6"/><path d="M948.8 496.9C951.5 497.4 959.5 500.3 964.8 500.1C970.2 499.8 978.2 496.1 980.8 495.3" stroke="#8a8a8a" stroke-width="1.43" opacity="0.6"/><path d="M979.2 509.7C980.0 511.8 983.5 518.7 984.0 522.5C984.6 526.2 982.7 530.5 982.4 532.1" stroke="#8a8a8a" stroke-width="1.3" opacity="0.5"/><circle cx="858.3" cy="465.6" r="1.3" fill="#777" stroke="none"/><circle cx="866.3" cy="463.2" r="1.3" fill="#777" stroke="none"/><circle cx="860.7" cy="472.8" r="1.3" fill="#777" stroke="none"/><circle cx="869.5" cy="469.6" r="1.3" fill="#777" stroke="none"/><circle cx="900.8" cy="482.4" r="1.3" fill="#777" stroke="none"/><circle cx="908.8" cy="485.7" r="1.3" fill="#777" stroke="none"/><circle cx="902.4" cy="490.5" r="1.3" fill="#777" stroke="none"/><circle cx="906.4" cy="480.0" r="1.3" fill="#777" stroke="none"/><circle cx="996.1" cy="462.4" r="1.3" fill="#777" stroke="none"/><circle cx="948.8" cy="484.9" r="1.3" fill="#777" stroke="none"/><path d="M814.3 420.0C813.2 423.2 810.0 432.3 807.9 439.2C805.8 446.2 802.6 457.9 801.5 461.6" stroke="#d0e0ee" stroke-width="2.6" opacity="0.8"/><path d="M891.2 556.1C896.5 553.7 911.2 545.7 923.2 541.7C935.2 537.7 956.6 533.7 963.2 532.1" stroke="#dbe9f3" stroke-width="3.25" opacity="0.7"/><path d="M1110.3 420.0C1109.9 422.4 1109.2 429.1 1107.9 434.4C1106.5 439.7 1104.5 446.4 1102.3 452.0C1100.0 457.6 1097.2 463.2 1094.3 468.0C1091.3 472.8 1087.6 477.4 1084.7 480.8C1081.7 484.3 1078.0 487.5 1076.7 488.9" stroke="#111" stroke-width="2.1"/><path d="M1027.0 479.2C1027.6 477.6 1028.9 473.4 1030.2 469.6C1031.6 465.9 1033.3 460.8 1035.0 456.8C1036.8 452.8 1039.7 447.5 1040.6 445.6" stroke="#111" stroke-width="2.1"/><path d="M1040.6 445.6C1041.8 447.0 1045.8 450.7 1047.8 453.6C1049.8 456.6 1051.2 460.0 1052.6 463.2C1054.1 466.4 1055.7 469.4 1056.6 472.8C1057.6 476.3 1058.2 480.6 1058.2 484.1C1058.2 487.5 1057.7 490.9 1056.6 493.7C1055.6 496.5 1052.6 499.7 1051.8 500.9" stroke="#111" stroke-width="2.1"/><path d="M1058.2 472.8C1059.4 472.7 1062.9 471.2 1065.4 472.0C1068.0 472.8 1070.5 476.0 1073.5 477.6C1076.4 479.2 1079.6 481.2 1083.1 481.6C1086.5 482.0 1090.8 481.0 1094.3 480.0C1097.7 479.1 1102.3 476.7 1103.9 476.0" stroke="#111" stroke-width="2.1"/><path d="M1103.9 476.0C1104.0 477.9 1104.9 483.0 1104.7 487.3C1104.4 491.5 1103.5 497.4 1102.3 501.7C1101.1 505.9 1099.3 509.7 1097.5 512.9C1095.6 516.1 1093.7 518.9 1091.1 520.9C1088.4 522.9 1084.9 524.4 1081.5 524.9C1078.0 525.4 1072.1 524.2 1070.3 524.1" stroke="#111" stroke-width="2.1"/><path d="M1091.1 521.7C1092.4 522.6 1096.4 524.5 1099.1 527.3C1101.7 530.1 1104.8 534.8 1107.1 538.5C1109.4 542.2 1111.4 546.2 1112.7 549.7C1114.0 553.2 1115.2 556.4 1115.1 559.3C1115.0 562.2 1113.5 565.2 1111.9 567.3C1110.3 569.5 1107.9 570.9 1105.5 572.1C1103.1 573.3 1100.4 574.3 1097.5 574.5C1094.5 574.8 1090.5 574.1 1087.9 573.7C1085.2 573.3 1082.5 572.4 1081.5 572.1" stroke="#111" stroke-width="2.1"/><path d="M1097.5 574.5C1099.1 576.8 1104.0 583.9 1107.1 588.1C1110.2 592.4 1114.4 598.0 1115.9 600.0" stroke="#111" stroke-width="2.1"/><path d="M1095.1 577.7C1095.3 579.7 1096.8 586.0 1096.7 589.7C1096.5 593.4 1094.7 598.3 1094.3 600.0" stroke="#111" stroke-width="2.1"/><path d="M1003.0 524.1C1004.1 525.2 1007.3 528.1 1009.4 530.5C1011.5 532.9 1014.3 536.4 1015.8 538.5C1017.3 540.6 1018.5 541.2 1018.2 543.3C1017.9 545.4 1015.9 548.9 1014.2 551.3C1012.5 553.7 1009.7 556.2 1007.8 557.7C1005.9 559.2 1003.8 559.7 1003.0 560.1" stroke="#111" stroke-width="2.1"/><path d="M1108.7 437.6C1111.1 440.5 1118.0 448.3 1123.1 455.2C1128.2 462.2 1134.3 471.2 1139.1 479.2C1143.9 487.3 1148.2 495.5 1151.9 503.3C1155.7 511.0 1158.9 518.2 1161.5 525.7C1164.2 533.2 1166.7 541.2 1167.9 548.1C1169.1 555.0 1169.5 561.2 1168.7 567.3C1167.9 573.5 1165.9 580.1 1163.1 584.9C1160.3 589.7 1155.7 593.6 1151.9 596.1C1148.2 598.6 1142.6 599.3 1140.7 600.0" stroke="#868686" stroke-width="2.08" opacity="0.9"/><path d="M1115.1 432.8C1117.8 436.8 1126.0 448.3 1131.1 456.8C1136.2 465.4 1141.2 475.2 1145.5 484.1C1149.8 492.9 1153.5 501.1 1156.7 509.7C1159.9 518.2 1162.9 526.8 1164.7 535.3C1166.6 543.8 1167.9 553.4 1167.9 560.9C1167.9 568.4 1165.3 576.9 1164.7 580.1" stroke="#8a8a8a" stroke-width="1.17" opacity="0.45"/><path d="M1107.1 480.8C1109.0 483.5 1114.6 491.0 1118.3 496.9C1122.0 502.7 1126.3 509.4 1129.5 516.1C1132.7 522.7 1135.9 530.2 1137.5 536.9C1139.1 543.6 1139.9 551.0 1139.1 556.1C1138.3 561.2 1135.6 564.6 1132.7 567.3C1129.8 570.0 1124.7 571.7 1121.5 572.1C1118.3 572.5 1114.8 570.1 1113.5 569.7" stroke="#888" stroke-width="1.95" opacity="0.9"/><path d="M1043.0 456.8C1044.1 458.7 1047.8 464.0 1049.4 468.0C1051.0 472.0 1052.4 476.6 1052.6 480.8C1052.9 485.1 1051.3 491.5 1051.0 493.7" stroke="#777" stroke-width="2.08" opacity="0.9"/><path d="M1055.8 426.4C1056.9 427.7 1061.2 430.9 1062.2 434.4C1063.3 437.9 1063.0 443.2 1062.2 447.2C1061.4 451.2 1058.2 456.6 1057.4 458.4" stroke="#8a8a8a" stroke-width="1.56" opacity="0.9"/><path d="M1003.0 498.5C1004.6 497.4 1009.4 494.5 1012.6 492.1C1015.8 489.7 1019.5 486.7 1022.2 484.1C1024.9 481.4 1027.6 477.4 1028.6 476.0" stroke="#8a8a8a" stroke-width="1.82" opacity="0.9"/><path d="M1094.3 532.1C1095.9 533.7 1101.2 538.0 1103.9 541.7C1106.5 545.4 1109.5 550.8 1110.3 554.5C1111.1 558.2 1109.0 562.5 1108.7 564.1" stroke="#8a8a8a" stroke-width="1.3" opacity="0.6"/><path d="M1135.9 586.5C1137.8 587.1 1143.6 590.0 1147.1 589.7C1150.6 589.5 1155.1 585.7 1156.7 584.9" stroke="#8a8a8a" stroke-width="1.04" opacity="0.4"/><path d="M1051.0 544.9C1052.1 548.1 1055.3 556.6 1057.4 564.1C1059.6 571.6 1062.8 585.5 1063.8 589.7" stroke="#bcd6ee" stroke-width="1.56" opacity="0.8"/><circle cx="1005.4" cy="454.4" r="1.1" fill="#777" stroke="none"/><circle cx="1009.4" cy="463.2" r="1.1" fill="#777" stroke="none"/><circle cx="1007.0" cy="467.2" r="1.1" fill="#777" stroke="none"/><path d="M849.5 600.0C849.9 601.5 850.6 606.0 851.9 608.8C853.3 611.6 855.5 614.8 857.5 616.8C859.5 618.8 861.9 620.0 863.9 620.8C865.9 621.6 867.8 622.6 869.5 621.6C871.3 620.7 873.3 617.7 874.4 615.2C875.4 612.7 875.7 608.9 876.0 606.4C876.2 603.9 876.0 601.1 876.0 600.0" stroke="#111" stroke-width="2.1"/><path d="M876.0 609.6C876.6 611.7 878.1 618.3 880.0 622.4C881.8 626.6 884.5 631.1 887.2 634.4C889.8 637.8 893.0 640.8 896.0 642.4C898.9 644.0 902.4 644.7 904.8 644.0C907.2 643.4 908.9 641.0 910.4 638.4C911.8 635.9 912.8 632.2 913.6 628.8C914.4 625.5 914.9 620.1 915.2 618.4" stroke="#111" stroke-width="2.1"/><path d="M915.2 618.4C915.5 620.4 915.7 626.6 916.8 630.4C917.9 634.3 919.5 638.2 921.6 641.6C923.7 645.1 926.4 648.3 929.6 651.2C932.8 654.2 936.8 657.1 940.8 659.2C944.8 661.4 949.3 663.1 953.6 664.1C957.9 665.0 962.7 665.0 966.4 664.9C970.2 664.7 973.6 664.7 976.0 663.3C978.4 661.8 979.8 658.8 980.8 656.0C981.9 653.2 982.2 649.6 982.4 646.4C982.7 643.2 982.4 638.4 982.4 636.8" stroke="#111" stroke-width="2.1"/><path d="M982.4 636.8C983.2 638.2 985.4 642.4 987.2 644.8C989.1 647.2 991.0 649.4 993.6 651.2C996.3 653.1 1001.4 655.2 1002.9 656.0" stroke="#111" stroke-width="2.1"/><path d="M874.4 616.0C872.9 617.7 868.1 623.4 865.5 626.4C863.0 629.5 860.2 633.1 859.1 634.4" stroke="#111" stroke-width="2.1"/><path d="M920.0 645.6C917.6 648.4 910.6 657.0 905.6 662.4C900.5 667.9 892.2 675.8 889.6 678.5" stroke="#111" stroke-width="2.1"/><path d="M918.4 646.4C919.7 649.1 923.9 657.2 926.4 662.4C928.9 667.7 932.4 675.1 933.6 677.7" stroke="#111" stroke-width="2.1"/><path d="M933.6 677.7C931.9 679.7 926.8 685.3 923.2 689.7C919.6 694.1 915.5 699.0 912.0 704.1C908.5 709.2 905.0 715.3 902.4 720.1C899.7 724.9 897.8 729.4 896.0 732.9C894.1 736.4 893.3 737.4 891.2 740.9C889.0 744.4 885.8 749.5 883.2 753.7C880.5 758.0 877.6 762.2 875.2 766.5C872.8 770.9 869.8 777.7 868.7 780.0" stroke="#111" stroke-width="2.1"/><path d="M849.5 629.6C849.1 630.0 847.8 630.3 847.1 632.0C846.5 633.8 845.7 636.8 845.5 640.0C845.4 643.2 846.2 648.0 846.3 651.2C846.5 654.4 846.3 657.9 846.3 659.2" stroke="#111" stroke-width="2.1"/><path d="M839.1 641.6C839.8 642.7 842.2 645.9 843.1 648.0C844.1 650.2 844.5 653.4 844.7 654.4" stroke="#111" stroke-width="2.1"/><path d="M839.1 641.6C838.7 642.7 837.7 646.2 836.7 648.0C835.8 649.9 835.1 651.5 833.5 652.8C831.9 654.2 829.5 655.1 827.1 656.0C824.7 657.0 821.5 657.1 819.1 658.4C816.7 659.8 814.2 662.0 812.7 664.1C811.2 666.1 810.7 668.1 810.3 670.5C809.9 672.9 810.2 675.7 810.3 678.5C810.4 681.3 811.0 685.8 811.1 687.3" stroke="#111" stroke-width="2.1"/><path d="M807.1 673.7C806.3 673.8 803.2 673.4 802.3 674.5C801.4 675.5 801.5 677.5 801.5 680.1C801.5 682.6 802.0 686.7 802.3 689.7C802.6 692.6 803.0 696.3 803.1 697.7" stroke="#111" stroke-width="2.1"/><path d="M806.3 705.7C805.0 704.1 801.2 698.7 798.3 696.1C795.4 693.4 791.6 691.0 788.7 689.7C785.7 688.3 783.1 687.8 780.7 688.1C778.3 688.3 775.3 690.7 774.3 691.3" stroke="#111" stroke-width="2.1"/><path d="M774.3 691.3C772.4 691.5 766.3 691.8 763.1 692.9C759.9 693.9 756.9 695.5 755.1 697.7C753.2 699.8 752.4 704.4 751.9 705.7" stroke="#111" stroke-width="2.1"/><path d="M772.7 694.5C774.3 695.3 779.1 696.6 782.3 699.3C785.5 701.9 790.3 708.6 791.9 710.5" stroke="#111" stroke-width="2.1"/><path d="M758.3 708.9C759.9 709.4 764.5 710.4 767.9 712.1C771.2 713.8 776.5 718.1 778.3 719.3" stroke="#111" stroke-width="2.1"/><path d="M758.3 708.9C756.4 709.2 749.9 708.9 747.1 710.5C744.2 712.1 742.1 715.6 741.4 718.5C740.8 721.4 741.6 725.2 743.0 728.1C744.5 731.0 747.5 734.2 750.3 736.1C753.1 738.0 756.5 738.9 759.9 739.3C763.2 739.7 768.5 738.6 770.3 738.5" stroke="#111" stroke-width="2.1"/><path d="M770.3 738.5C769.1 739.4 764.5 741.8 763.1 744.1C761.6 746.4 761.2 749.2 761.5 752.1C761.7 755.1 762.8 759.2 764.7 761.7C766.5 764.3 769.2 766.5 772.7 767.3C776.1 768.1 781.7 767.7 785.5 766.5C789.2 765.3 792.4 762.5 795.1 760.1C797.8 757.7 800.4 753.5 801.5 752.1" stroke="#111" stroke-width="2.1"/><path d="M801.5 752.1C803.1 752.4 807.4 753.7 811.1 753.7C814.8 753.7 820.2 753.5 823.9 752.1C827.6 750.8 831.1 748.1 833.5 745.7C835.9 743.3 837.5 739.0 838.3 737.7" stroke="#111" stroke-width="2.1"/><path d="M838.3 737.7C840.2 737.4 846.1 736.9 849.5 736.1C853.0 735.3 856.2 734.5 859.1 732.9C862.1 731.3 864.5 728.6 867.1 726.5C869.8 724.4 872.5 722.0 875.2 720.1C877.8 718.2 881.8 715.8 883.2 715.0" stroke="#111" stroke-width="2.1"/><path d="M883.2 715.0C883.3 716.1 882.9 719.2 884.0 721.7C885.0 724.2 887.6 727.8 889.6 729.7C891.6 731.6 894.9 732.4 896.0 732.9" stroke="#111" stroke-width="2.1"/><path d="M849.5 629.6C850.6 630.8 853.5 634.0 855.9 636.8C858.3 639.6 861.5 643.2 863.9 646.4C866.3 649.6 868.7 653.1 870.3 656.0C872.0 659.0 873.0 662.7 873.6 664.1" stroke="#111" stroke-width="2.1"/><path d="M867.1 675.3C867.8 673.9 869.4 670.2 871.2 667.3C872.9 664.3 876.5 659.2 877.6 657.6" stroke="#111" stroke-width="2.1"/><path d="M877.6 657.6C878.5 659.2 881.7 663.8 883.2 667.3C884.6 670.7 886.1 674.7 886.4 678.5C886.6 682.2 886.1 686.5 884.8 689.7C883.4 692.9 880.6 695.7 878.4 697.7C876.1 699.7 872.4 701.0 871.2 701.7" stroke="#111" stroke-width="2.1"/><path d="M877.6 717.7C876.4 719.4 871.8 724.5 870.3 728.1C868.9 731.7 868.4 736.9 868.7 739.3C869.1 741.7 871.7 742.0 872.3 742.5" stroke="#111" stroke-width="2.1"/><path d="M872.3 742.5C871.4 742.0 868.8 740.4 867.1 739.3C865.5 738.2 863.1 736.6 862.3 736.1" stroke="#111" stroke-width="2.1"/><path d="M902.4 721.7C905.8 722.8 915.7 726.1 923.2 728.1C930.7 730.1 939.2 732.4 947.2 733.7C955.2 735.0 961.9 735.6 971.2 736.1C980.5 736.6 997.7 736.8 1002.9 736.9" stroke="#111" stroke-width="2.1"/><path d="M891.2 740.9C893.8 741.7 900.5 743.8 907.2 745.7C913.9 747.6 923.2 750.4 931.2 752.1C939.2 753.9 947.2 755.2 955.2 756.1C963.2 757.1 971.3 757.5 979.2 757.7C987.2 758.0 999.0 757.7 1002.9 757.7" stroke="#111" stroke-width="2.1"/><path d="M729.4 780.0C729.3 777.7 728.4 770.5 728.6 766.5C728.9 762.6 730.6 757.9 731.0 756.1" stroke="#111" stroke-width="2.1"/><path d="M731.0 756.1C732.1 757.1 734.8 760.0 737.4 761.7C740.1 763.5 743.8 765.5 747.1 766.5C750.3 767.6 753.7 768.0 756.7 768.1C759.6 768.3 763.3 767.5 764.7 767.3" stroke="#111" stroke-width="2.1"/><path d="M703.0 611.2C702.9 613.6 702.1 621.4 702.2 625.6C702.3 629.9 703.5 635.0 703.8 636.8" stroke="#8a8a8a" stroke-width="1.69" opacity="0.9"/><path d="M703.0 611.2C704.0 610.9 707.6 608.5 708.6 609.6C709.7 610.7 710.2 615.5 709.4 617.6C708.6 619.7 704.8 621.6 703.8 622.4" stroke="#8a8a8a" stroke-width="1.69" opacity="0.9"/><ellipse cx="726.2" cy="620.8" rx="8.0" ry="12.0" fill="none" stroke="#8a8a8a" stroke-width="1.3" opacity="0.9" transform="rotate(15 726.2 620.8)"/><path d="M699.0 664.1C699.4 661.9 700.1 653.9 701.4 651.2C702.7 648.6 705.7 645.9 707.0 648.0C708.4 650.2 708.4 663.5 709.4 664.1C710.5 664.6 712.0 653.6 713.4 651.2C714.9 648.8 717.3 647.5 718.2 649.6C719.2 651.8 718.9 661.6 719.0 664.1" stroke="#8a8a8a" stroke-width="1.69" opacity="0.9"/><path d="M723.8 652.8 L735.8 648.0" stroke="#8a8a8a" stroke-width="1.69" opacity="0.9"/><path d="M723.0 654.4C723.0 656.0 722.4 661.6 723.0 664.1C723.7 666.5 725.2 668.3 727.0 668.9C728.9 669.4 733.0 667.5 734.2 667.3" stroke="#8a8a8a" stroke-width="1.69" opacity="0.9"/><ellipse cx="747.1" cy="654.4" rx="9.3" ry="9.9" fill="none" stroke="#8a8a8a" stroke-width="1.3" opacity="0.9" transform="rotate(0 747.1 654.4)"/><path d="M694.2 674.5 L755.1 672.1" stroke="#8a8a8a" stroke-width="1.82" opacity="0.9"/><path d="M694.2 683.3C695.8 682.7 701.1 679.8 703.8 680.1C706.5 680.3 710.8 681.1 710.2 684.9C709.7 688.6 700.3 700.1 700.6 702.5C700.9 704.9 710.0 699.8 711.8 699.3" stroke="#8a8a8a" stroke-width="1.56" opacity="0.9"/><path d="M717.4 681.7C716.8 683.5 713.4 689.4 713.4 692.9C713.4 696.3 715.8 702.5 717.4 702.5C719.0 702.5 722.5 696.3 723.0 692.9C723.6 689.4 721.6 683.5 720.6 681.7C719.7 679.8 718.0 681.7 717.4 681.7" stroke="#8a8a8a" stroke-width="1.56" opacity="0.9"/><path d="M711.8 704.1 L724.6 678.5" stroke="#8a8a8a" stroke-width="1.56" opacity="0.9"/><path d="M726.2 683.3C727.6 682.7 732.4 679.8 734.2 680.1C736.1 680.3 738.2 681.4 737.4 684.9C736.6 688.3 729.4 698.5 729.4 700.9C729.4 703.3 736.1 699.5 737.4 699.3" stroke="#8a8a8a" stroke-width="1.56" opacity="0.9"/><path d="M747.1 683.3C746.3 685.4 742.2 692.9 742.2 696.1C742.2 699.3 745.4 702.5 747.1 702.5C748.7 702.5 751.9 697.7 751.9 696.1C751.9 694.5 747.9 693.4 747.1 692.9" stroke="#8a8a8a" stroke-width="1.56" opacity="0.9"/><path d="M962.4 667.3C963.1 669.9 966.0 677.4 966.4 683.3C966.8 689.1 966.7 696.1 964.8 702.5C963.0 708.9 957.4 716.6 955.2 721.7C953.1 726.8 952.5 731.0 952.0 732.9" stroke="#8a8a8a" stroke-width="1.95" opacity="0.9"/><path d="M891.2 636.8C893.3 637.6 900.2 641.6 904.0 641.6C907.7 641.6 912.0 637.6 913.6 636.8" stroke="#8a8a8a" stroke-width="1.3" opacity="0.6"/><path d="M921.6 636.8C923.5 639.5 928.5 648.8 932.8 652.8C937.1 656.8 944.8 659.5 947.2 660.8" stroke="#8a8a8a" stroke-width="1.17" opacity="0.5"/><path d="M747.1 715.3C748.1 717.2 750.8 723.6 753.5 726.5C756.1 729.4 761.5 731.8 763.1 732.9" stroke="#8a8a8a" stroke-width="1.3" opacity="0.6"/><path d="M764.7 744.1C764.9 746.3 764.4 753.5 766.3 756.9C768.1 760.4 772.1 763.9 775.9 764.9C779.6 766.0 786.5 763.6 788.7 763.3" stroke="#8a8a8a" stroke-width="1.3" opacity="0.6"/><path d="M852.7 638.4C854.1 640.3 858.3 645.9 860.7 649.6C863.1 653.4 866.1 659.0 867.1 660.8" stroke="#8a8a8a" stroke-width="1.3" opacity="0.6"/><path d="M872.0 670.5C873.3 671.5 878.4 673.7 880.0 676.9C881.6 680.1 881.3 687.5 881.6 689.7" stroke="#8a8a8a" stroke-width="1.3" opacity="0.6"/><path d="M843.1 732.9C845.8 734.2 853.8 738.5 859.1 740.9C864.5 743.3 872.5 746.3 875.2 747.3" stroke="#8a8a8a" stroke-width="1.3" opacity="0.5"/><path d="M907.2 604.8C912.5 606.7 925.9 615.2 939.2 616.0C952.5 616.8 979.2 610.7 987.2 609.6" stroke="#d4e6f1" stroke-width="2.6" opacity="0.8"/><path d="M904.0 728.1C907.2 733.4 916.0 751.5 923.2 760.1C930.4 768.8 943.2 776.7 947.2 780.0" stroke="#d4e6f1" stroke-width="2.08" opacity="0.8"/><path d="M987.2 721.7 L1002.9 722.5" stroke="#8a8a8a" stroke-width="1.3" opacity="0.6"/><path d="M1003.0 657.6C1005.1 658.6 1011.5 662.3 1015.8 663.3C1020.1 664.2 1024.4 664.2 1028.6 663.3C1032.9 662.3 1037.4 660.4 1041.4 657.6C1045.4 654.8 1049.6 650.2 1052.6 646.4C1055.7 642.7 1058.1 638.7 1059.8 635.2C1061.6 631.8 1062.2 628.3 1063.0 625.6C1063.8 623.0 1064.4 620.3 1064.6 619.2" stroke="#111" stroke-width="2.1"/><path d="M1064.6 619.2C1064.9 620.5 1065.3 624.8 1066.3 627.2C1067.2 629.6 1068.7 632.4 1070.3 633.6C1071.9 634.8 1074.0 635.0 1075.9 634.4C1077.7 633.9 1079.5 632.7 1081.5 630.4C1083.5 628.2 1086.0 624.3 1087.9 620.8C1089.7 617.3 1091.5 613.1 1092.7 609.6C1093.9 606.1 1094.7 601.6 1095.1 600.0" stroke="#111" stroke-width="2.1"/><path d="M1115.1 600.0C1116.7 602.4 1121.8 610.1 1124.7 614.4C1127.6 618.7 1131.4 623.8 1132.7 625.6" stroke="#111" stroke-width="2.1"/><path d="M1075.9 634.4C1078.1 636.7 1085.1 643.6 1089.5 648.0C1093.9 652.4 1098.9 657.6 1102.3 660.8C1105.6 664.1 1108.3 666.2 1109.5 667.3" stroke="#111" stroke-width="2.1"/><path d="M1076.7 635.2C1076.9 638.7 1077.6 648.6 1078.3 656.0C1078.9 663.5 1079.9 672.1 1080.7 680.1C1081.5 688.1 1082.4 697.1 1083.1 704.1C1083.7 711.0 1084.3 716.1 1084.7 721.7C1085.1 727.3 1085.3 735.0 1085.5 737.7" stroke="#111" stroke-width="2.1"/><path d="M1085.5 737.7C1086.7 740.1 1089.9 747.1 1092.7 752.1C1095.5 757.2 1099.3 763.5 1102.3 768.1C1105.2 772.8 1109.0 778.0 1110.3 780.0" stroke="#111" stroke-width="2.1"/><path d="M1003.0 736.9C1006.2 736.6 1015.5 736.2 1022.2 735.3C1028.9 734.4 1036.1 732.8 1043.0 731.3C1050.0 729.8 1057.0 728.1 1063.8 726.5C1070.7 724.9 1080.5 722.5 1083.9 721.7" stroke="#111" stroke-width="2.1"/><path d="M1003.0 757.7C1006.2 757.5 1015.5 757.1 1022.2 756.1C1028.9 755.2 1036.1 753.7 1043.0 752.1C1050.0 750.5 1056.8 748.7 1063.8 746.5C1070.9 744.4 1081.9 740.5 1085.5 739.3" stroke="#111" stroke-width="2.1"/><path d="M1132.7 625.6C1133.8 624.6 1136.6 621.1 1139.1 619.2C1141.6 617.3 1146.4 615.2 1147.9 614.4" stroke="#111" stroke-width="2.1"/><path d="M1147.9 614.4C1148.2 616.0 1149.1 620.8 1149.5 624.0C1149.9 627.2 1150.1 630.4 1150.3 633.6C1150.5 636.8 1150.6 641.6 1150.6 643.2" stroke="#111" stroke-width="2.1"/><path d="M1150.6 643.2C1151.0 641.6 1151.7 636.6 1152.7 633.6C1153.7 630.7 1156.1 627.0 1156.7 625.6" stroke="#111" stroke-width="2.1"/><path d="M1156.7 625.6C1157.1 627.2 1158.1 632.8 1159.1 635.2C1160.2 637.6 1161.1 638.8 1163.1 640.0C1165.1 641.2 1168.5 641.4 1171.1 642.4C1173.8 643.5 1176.9 644.4 1179.1 646.4C1181.4 648.4 1183.5 652.0 1184.7 654.4C1185.9 656.8 1186.1 659.8 1186.3 660.8" stroke="#111" stroke-width="2.1"/><path d="M1183.9 670.5C1184.3 668.9 1185.5 663.1 1186.3 660.8C1187.1 658.6 1187.4 657.6 1188.7 656.8C1190.1 656.0 1193.4 656.2 1194.4 656.0" stroke="#111" stroke-width="2.1"/><path d="M1194.4 656.0C1194.1 657.6 1193.2 662.7 1192.8 665.7C1192.4 668.6 1191.8 671.0 1192.0 673.7C1192.1 676.3 1193.3 680.3 1193.6 681.7" stroke="#111" stroke-width="2.1"/><path d="M1132.7 625.6C1131.4 627.0 1127.1 630.7 1124.7 633.6C1122.3 636.6 1120.4 640.3 1118.3 643.2C1116.2 646.2 1113.5 648.3 1111.9 651.2C1110.3 654.2 1109.1 657.6 1108.7 660.8C1108.3 664.1 1108.4 667.3 1109.5 670.5C1110.6 673.7 1112.8 677.4 1115.1 680.1C1117.4 682.7 1121.8 685.4 1123.1 686.5" stroke="#111" stroke-width="2.1"/><path d="M1123.1 686.5C1122.6 687.8 1119.9 691.3 1119.9 694.5C1119.9 697.7 1121.2 702.2 1123.1 705.7C1125.0 709.2 1127.9 712.8 1131.1 715.3C1134.3 717.8 1138.3 719.8 1142.3 720.9C1146.3 722.0 1153.0 721.6 1155.1 721.7" stroke="#111" stroke-width="2.1"/><path d="M1155.1 721.7C1155.4 723.0 1155.4 727.6 1156.7 729.7C1158.1 731.8 1160.5 733.2 1163.1 734.5C1165.8 735.8 1171.1 737.2 1172.7 737.7" stroke="#111" stroke-width="2.1"/><path d="M1119.1 642.4C1120.0 643.9 1122.8 648.3 1124.7 651.2C1126.6 654.2 1129.4 658.6 1130.3 660.0" stroke="#111" stroke-width="2.1"/><path d="M1189.5 690.5C1190.5 689.0 1192.9 684.2 1195.2 681.7C1197.4 679.1 1200.2 676.7 1203.2 675.3C1206.1 673.8 1210.1 673.0 1212.8 672.9C1215.4 672.7 1218.1 674.2 1219.2 674.5" stroke="#111" stroke-width="2.1"/><path d="M1204.0 694.5C1205.2 692.9 1208.4 687.5 1211.2 684.9C1214.0 682.2 1217.3 679.8 1220.8 678.5C1224.2 677.1 1228.8 676.3 1232.0 676.9C1235.2 677.4 1237.9 679.5 1240.0 681.7C1242.1 683.8 1244.0 688.3 1244.8 689.7" stroke="#111" stroke-width="2.1"/><path d="M1217.6 704.1C1219.2 702.7 1223.7 698.1 1227.2 696.1C1230.6 694.1 1234.9 692.3 1238.4 692.1C1241.9 691.8 1245.5 692.7 1248.0 694.5C1250.5 696.2 1252.5 699.5 1253.6 702.5C1254.7 705.4 1255.1 709.2 1254.4 712.1C1253.7 715.0 1252.0 718.1 1249.6 720.1C1247.2 722.1 1243.5 723.4 1240.0 724.1C1236.5 724.8 1230.6 724.1 1228.8 724.1" stroke="#111" stroke-width="2.1"/><path d="M1226.4 724.9C1227.6 726.2 1232.3 730.0 1233.6 732.9C1234.9 735.8 1234.9 739.8 1234.4 742.5C1233.9 745.2 1232.1 747.5 1230.4 748.9C1228.6 750.4 1225.0 750.9 1224.0 751.3" stroke="#111" stroke-width="2.1"/><path d="M1179.9 750.5C1180.6 751.6 1182.7 754.3 1183.9 756.9C1185.1 759.6 1186.3 763.3 1187.1 766.5C1187.9 769.7 1188.4 773.9 1188.7 776.1C1189.1 778.4 1189.0 779.3 1189.1 780.0" stroke="#111" stroke-width="1.7"/><path d="M1187.1 748.1C1189.3 749.9 1195.4 754.9 1200.0 758.5C1204.5 762.1 1209.8 766.2 1214.4 769.7C1218.9 773.3 1225.0 778.3 1227.2 780.0" stroke="#111" stroke-width="1.7"/><path d="M1233.6 756.9C1235.7 758.0 1242.1 760.7 1246.4 763.3C1250.7 766.0 1254.9 770.2 1259.2 772.9C1263.5 775.7 1269.9 778.8 1272.0 780.0" stroke="#111" stroke-width="1.7"/><path d="M1211.2 664.1C1213.3 663.3 1220.0 659.5 1224.0 659.2C1228.0 659.0 1231.4 661.1 1235.2 662.4C1238.9 663.8 1243.5 665.1 1246.4 667.3C1249.3 669.4 1251.6 671.5 1252.8 675.3C1254.0 679.0 1253.5 687.3 1253.6 689.7" stroke="#999" stroke-width="1.43" opacity="0.8"/><path d="M1208.0 670.5C1210.1 669.4 1216.5 664.6 1220.8 664.1C1225.0 663.5 1231.4 666.7 1233.6 667.3" stroke="#8a8a8a" stroke-width="1.17" opacity="0.5"/><path d="M1037.4 688.1C1037.8 690.7 1039.3 698.5 1039.8 704.1C1040.4 709.7 1040.5 718.8 1040.6 721.7" stroke="#8a8a8a" stroke-width="1.69" opacity="0.9"/><path d="M1032.6 710.5 L1051.0 710.5" stroke="#8a8a8a" stroke-width="1.43" opacity="0.7"/><path d="M1081.5 648.0C1082.3 653.4 1085.3 669.4 1086.3 680.1C1087.2 690.7 1087.1 702.5 1087.1 712.1C1087.1 721.7 1086.4 733.4 1086.3 737.7" stroke="#8a8a8a" stroke-width="1.3" opacity="0.6"/><path d="M1135.9 622.4C1135.9 625.4 1135.1 633.6 1135.9 640.0C1136.7 646.4 1139.4 656.0 1140.7 660.8C1142.0 665.7 1143.4 667.5 1143.9 668.9" stroke="#8a8a8a" stroke-width="1.56" opacity="0.6"/><path d="M1115.1 657.6C1115.6 660.0 1116.2 667.8 1118.3 672.1C1120.4 676.3 1126.3 681.4 1127.9 683.3" stroke="#8a8a8a" stroke-width="1.3" opacity="0.6"/><path d="M1193.6 721.7C1194.4 723.6 1195.7 729.7 1198.4 732.9C1201.0 736.1 1205.3 739.3 1209.6 740.9C1213.8 742.5 1221.6 742.2 1224.0 742.5" stroke="#999" stroke-width="1.56" opacity="0.7"/><path d="M1217.6 715.3 L1220.8 726.5" stroke="#8a8a8a" stroke-width="1.3" opacity="0.6"/><path d="M1240.0 696.1C1241.1 697.7 1245.9 701.9 1246.4 705.7C1246.9 709.4 1243.7 716.4 1243.2 718.5" stroke="#8a8a8a" stroke-width="1.3" opacity="0.5"/><path d="M1131.1 600.0C1133.2 600.8 1140.2 604.8 1143.9 604.8C1147.6 604.8 1151.9 600.8 1153.5 600.0" stroke="#8a8a8a" stroke-width="1.82" opacity="0.9"/><path d="M1023.8 734.5C1024.4 738.2 1027.0 749.3 1027.0 756.9C1027.0 764.5 1024.4 776.1 1023.8 780.0" stroke="#8a8a8a" stroke-width="1.3" opacity="0.5"/><path d="M1099.1 612.8C1101.7 616.0 1110.3 626.4 1115.1 632.0C1119.9 637.6 1125.8 644.0 1127.9 646.4" stroke="#d7e6f0" stroke-width="1.95" opacity="0.8"/><path d="M729.4 780.0C730.0 781.3 731.3 785.6 732.6 788.0C734.0 790.4 735.6 793.1 737.4 794.4C739.3 795.7 742.8 795.7 743.8 796.0" stroke="#111" stroke-width="2.1"/><path d="M743.8 796.0C741.7 796.5 735.3 797.6 731.0 799.2C726.8 800.8 722.0 803.0 718.2 805.6C714.5 808.3 711.3 811.2 708.6 815.2C706.0 819.2 704.0 824.8 702.2 829.6C700.5 834.4 699.4 839.2 698.2 844.1C697.0 848.9 696.5 853.9 695.0 858.5C693.5 863.0 691.4 868.1 689.4 871.3C687.4 874.5 684.1 876.6 683.0 877.7" stroke="#111" stroke-width="2.1"/><path d="M683.0 898.5C684.6 899.6 689.1 903.3 692.6 904.9C696.1 906.5 700.5 907.7 703.8 908.1C707.2 908.5 711.2 907.4 712.6 907.3" stroke="#111" stroke-width="2.1"/><path d="M712.6 907.3C711.7 909.3 708.4 914.9 707.0 919.3C705.7 923.7 704.8 928.9 704.6 933.7C704.5 938.5 705.4 943.8 706.2 948.1C707.0 952.5 708.9 958.0 709.4 960.0" stroke="#111" stroke-width="2.1"/><path d="M739.0 960.0 L743.0 955.3" stroke="#111" stroke-width="2.1"/><path d="M868.7 780.0C867.7 782.1 864.1 788.5 862.3 792.8C860.6 797.1 859.4 800.8 858.3 805.6C857.3 810.4 856.9 816.3 855.9 821.6C855.0 827.0 853.8 832.3 852.7 837.6C851.7 843.0 850.2 848.3 849.5 853.7C848.9 859.0 848.6 864.9 848.7 869.7C848.9 874.5 849.5 878.5 850.3 882.5C851.1 886.5 852.6 890.5 853.5 893.7C854.5 896.9 855.5 900.4 855.9 901.7" stroke="#111" stroke-width="2.1"/><path d="M858.3 805.3C862.5 805.8 875.0 806.6 883.2 808.0C891.3 809.4 899.2 811.1 907.2 813.6C915.2 816.2 923.2 819.5 931.2 823.2C939.2 827.0 947.2 832.0 955.2 836.0C963.2 840.0 972.4 843.9 979.2 847.3C986.0 850.6 993.2 854.6 996.1 856.1" stroke="#111" stroke-width="2.1"/><path d="M855.9 822.4C859.1 822.8 867.9 823.5 875.2 824.8C882.4 826.2 891.2 828.2 899.2 830.4C907.2 832.7 915.2 835.4 923.2 838.4C931.2 841.5 939.2 845.3 947.2 848.9C955.2 852.5 963.5 856.2 971.2 860.1C979.0 863.9 989.9 870.1 993.6 872.1" stroke="#111" stroke-width="2.1"/><path d="M1000.9 845.7C1000.1 847.5 997.3 852.6 996.1 856.9C994.8 861.1 994.8 866.5 993.6 871.3C992.4 876.1 990.7 880.9 988.8 885.7C987.0 890.5 985.1 895.0 982.4 900.1C979.8 905.2 976.3 911.0 972.8 916.1C969.4 921.2 965.4 926.3 961.6 930.5C957.9 934.8 954.2 938.3 950.4 941.7C946.7 945.2 942.9 948.3 939.2 951.3C935.5 954.4 929.9 958.5 928.0 960.0" stroke="#111" stroke-width="2.1"/><path d="M987.2 888.9C988.0 889.6 990.2 892.0 992.0 892.9C993.9 893.8 996.6 894.2 998.5 894.5C1000.3 894.8 1002.2 894.5 1002.9 894.5" stroke="#111" stroke-width="2.1"/><path d="M855.9 901.7C854.6 902.8 850.7 906.2 847.9 908.1C845.1 910.0 840.6 912.1 839.1 912.9" stroke="#111" stroke-width="2.1"/><path d="M839.1 912.9C837.4 912.5 832.1 911.8 828.7 910.5C825.4 909.2 821.8 906.9 819.1 904.9C816.4 902.9 814.3 900.0 812.7 898.5C811.1 897.0 810.0 896.5 809.5 896.1" stroke="#111" stroke-width="2.1"/><path d="M809.5 896.1C809.0 897.0 807.1 898.9 806.3 901.7C805.5 904.5 804.7 909.2 804.7 912.9C804.7 916.6 805.2 920.6 806.3 924.1C807.4 927.6 809.5 931.1 811.1 933.7C812.7 936.4 815.1 939.1 815.9 940.1" stroke="#111" stroke-width="2.1"/><path d="M815.9 940.1C814.8 939.7 811.9 938.3 809.5 937.7C807.1 937.2 802.8 937.1 801.5 936.9" stroke="#111" stroke-width="2.1"/><path d="M801.5 936.9C801.2 938.5 799.9 942.7 799.9 946.5C799.9 950.4 801.2 957.7 801.5 960.0" stroke="#111" stroke-width="2.1"/><path d="M998.5 804.0C998.6 808.0 999.5 820.0 999.3 828.0C999.0 836.0 997.3 848.1 996.9 852.1" stroke="#555" stroke-width="1.2"/><path d="M687.8 860.1C689.4 861.7 693.4 869.1 697.4 869.7C701.4 870.2 709.4 864.3 711.8 863.3" stroke="#8a8a8a" stroke-width="1.3" opacity="0.5"/><path d="M683.0 882.5C684.1 884.6 686.5 891.6 689.4 895.3C692.3 899.0 698.7 903.3 700.6 904.9" stroke="#8a8a8a" stroke-width="1.69" opacity="0.9"/><path d="M854.3 840.8C854.1 844.6 852.5 856.3 852.7 863.3C853.0 870.2 855.4 879.3 855.9 882.5" stroke="#777" stroke-width="1.95" opacity="0.9"/><path d="M811.1 896.9C812.7 896.6 818.0 894.2 820.7 895.3C823.4 896.4 826.0 902.0 827.1 903.3" stroke="#8a8a8a" stroke-width="1.3" opacity="0.6"/><path d="M811.1 908.1C811.1 910.8 810.0 918.8 811.1 924.1C812.2 929.5 815.1 935.6 817.5 940.1C819.9 944.7 824.2 949.5 825.5 951.3" stroke="#8a8a8a" stroke-width="1.43" opacity="0.6"/><path d="M839.9 916.1C838.3 919.0 833.0 928.1 830.3 933.7C827.6 939.3 825.0 947.1 823.9 949.7" stroke="#8a8a8a" stroke-width="1.17" opacity="0.4"/><path d="M867.1 828.0C866.6 833.4 863.4 849.4 863.9 860.1C864.5 870.7 867.1 882.2 870.3 892.1C873.6 902.0 878.4 912.4 883.2 919.3C888.0 926.3 893.8 930.5 899.2 933.7C904.5 936.9 912.5 937.7 915.2 938.5" stroke="#d3e5ef" stroke-width="1.69" opacity="0.9"/><path d="M939.2 812.0C938.7 820.0 937.1 844.1 936.0 860.1C934.9 876.1 933.3 900.1 932.8 908.1" stroke="#d3e5ef" stroke-width="1.69" opacity="0.9"/><path d="M992.0 796.0C992.6 804.0 996.1 829.4 995.2 844.1C994.4 858.7 991.8 870.7 987.2 884.1C982.7 897.4 976.0 912.4 968.0 924.1C960.0 935.9 944.0 949.5 939.2 954.5" stroke="#cfe2ee" stroke-width="2.34" opacity="0.9"/><path d="M976.0 789.6C977.9 790.4 983.5 792.5 987.2 794.4C991.0 796.3 996.6 799.7 998.5 800.8" stroke="#8a8a8a" stroke-width="1.56" opacity="0.6"/><path d="M1107.1 780.0C1108.7 782.4 1113.8 789.3 1116.7 794.4C1119.6 799.5 1122.3 804.8 1124.7 810.4C1127.1 816.0 1129.2 822.4 1131.1 828.0C1133.0 833.6 1134.4 838.2 1135.9 844.1C1137.4 849.9 1138.8 856.9 1139.9 863.3C1141.0 869.7 1141.8 876.6 1142.3 882.5C1142.8 888.4 1143.2 893.4 1143.1 898.5C1143.0 903.6 1142.0 908.6 1141.5 912.9C1141.0 917.2 1140.2 922.2 1139.9 924.1" stroke="#111" stroke-width="2.1"/><path d="M1139.9 924.1C1141.6 924.2 1146.7 925.4 1150.3 924.9C1153.9 924.4 1158.3 922.6 1161.5 920.9C1164.7 919.2 1167.3 916.6 1169.5 914.5C1171.8 912.4 1173.7 909.3 1175.1 908.1C1176.6 906.9 1177.8 907.4 1178.3 907.3" stroke="#111" stroke-width="2.1"/><path d="M1178.3 907.3C1179.1 908.8 1182.1 912.8 1183.1 916.1C1184.2 919.4 1185.0 923.6 1184.7 927.3C1184.5 931.1 1182.9 935.3 1181.5 938.5C1180.2 941.7 1177.5 945.2 1176.7 946.5" stroke="#111" stroke-width="2.1"/><path d="M1176.7 946.5C1177.9 946.3 1181.9 945.3 1183.9 944.9C1185.9 944.5 1187.9 944.3 1188.7 944.1" stroke="#111" stroke-width="2.1"/><path d="M1188.7 944.1C1189.0 945.3 1190.2 948.7 1190.3 951.3C1190.5 954.0 1189.7 958.5 1189.5 960.0" stroke="#111" stroke-width="2.1"/><path d="M1003.0 858.5C1005.7 855.8 1013.1 847.5 1019.0 842.4C1024.9 837.4 1031.8 832.2 1038.2 828.0C1044.6 823.9 1051.3 820.3 1057.4 817.6C1063.6 815.0 1069.2 813.4 1075.1 812.0C1080.9 810.7 1086.5 810.0 1092.7 809.6C1098.8 809.2 1106.5 809.4 1111.9 809.6C1117.2 809.9 1122.6 811.0 1124.7 811.2" stroke="#111" stroke-width="2.1"/><path d="M1006.2 874.5C1008.9 871.5 1016.3 862.2 1022.2 856.9C1028.1 851.5 1035.0 846.6 1041.4 842.4C1047.8 838.3 1054.2 834.8 1060.6 832.0C1067.1 829.2 1073.5 827.1 1079.9 825.6C1086.3 824.2 1092.7 823.5 1099.1 823.2C1105.5 823.0 1113.2 823.6 1118.3 824.0C1123.4 824.4 1127.6 825.4 1129.5 825.6" stroke="#111" stroke-width="2.1"/><path d="M1003.0 860.1C1003.4 862.7 1004.3 870.7 1005.4 876.1C1006.5 881.4 1007.7 886.8 1009.4 892.1C1011.1 897.4 1013.1 902.8 1015.8 908.1C1018.5 913.4 1021.7 918.8 1025.4 924.1C1029.2 929.5 1033.7 935.3 1038.2 940.1C1042.8 944.9 1048.4 949.6 1052.6 952.9C1056.9 956.2 1062.0 958.8 1063.8 960.0" stroke="#111" stroke-width="2.1"/><path d="M1071.9 800.0 L1090.8 809.1 L1082.7 810.7 L1081.1 818.4Z" fill="#0a0a0a" stroke="none" opacity="1"/><path d="M1182.3 788.8C1180.7 790.3 1175.7 794.3 1172.7 797.6C1169.8 801.0 1166.7 805.4 1164.7 808.8C1162.7 812.3 1161.4 816.8 1160.7 818.4" stroke="#222" stroke-width="1.8"/><path d="M1147.9 823.2C1148.2 825.1 1149.4 830.7 1149.5 834.4C1149.7 838.2 1149.4 842.4 1148.7 845.7C1148.0 848.9 1146.0 852.3 1145.5 853.7" stroke="#222" stroke-width="1.8"/><path d="M1163.1 832.8 L1166.3 844.1" stroke="#222" stroke-width="1.8"/><path d="M1233.6 783.2C1235.2 785.1 1240.3 790.7 1243.2 794.4C1246.1 798.1 1249.2 802.7 1251.2 805.6C1253.2 808.6 1254.5 811.0 1255.2 812.0" stroke="#222" stroke-width="1.8"/><path d="M1267.2 780.0C1269.1 782.4 1275.2 789.9 1278.4 794.4C1281.6 798.9 1284.3 803.8 1286.4 807.2C1288.6 810.7 1290.4 813.9 1291.2 815.2" stroke="#222" stroke-width="1.8"/><path d="M1298.4 802.4 L1292.8 812.0" stroke="#222" stroke-width="1.8"/><path d="M1294.4 932.9 L1303.2 940.1" stroke="#333" stroke-width="1.4"/><path d="M1092.7 809.6C1094.8 809.2 1101.2 807.4 1105.5 807.2C1109.8 807.1 1116.2 808.6 1118.3 808.8" stroke="#777" stroke-width="2.6" opacity="0.8"/><path d="M1086.3 820.0C1089.5 819.8 1099.1 818.2 1105.5 818.4C1111.9 818.7 1121.5 821.1 1124.7 821.6" stroke="#999" stroke-width="2.6" opacity="0.7"/><path d="M1131.1 869.7C1131.9 873.4 1134.6 884.6 1135.9 892.1C1137.2 899.6 1138.6 910.8 1139.1 914.5" stroke="#777" stroke-width="2.08" opacity="0.8"/><path d="M1143.9 927.3C1145.2 930.0 1149.8 938.3 1151.9 943.3C1154.1 948.4 1155.9 955.3 1156.7 957.7" stroke="#8a8a8a" stroke-width="1.3" opacity="0.5"/><path d="M1172.7 917.7C1173.8 919.6 1178.6 924.6 1179.1 928.9C1179.7 933.2 1176.5 940.9 1175.9 943.3" stroke="#666" stroke-width="1.82" opacity="0.8"/><path d="M1236.8 789.6 L1246.4 802.4" stroke="#999" stroke-width="1.95" opacity="0.6"/><path d="M1275.2 786.4 L1284.8 800.8" stroke="#999" stroke-width="1.69" opacity="0.6"/><path d="M1003.0 789.6C1005.7 790.7 1012.3 796.8 1019.0 796.0C1025.7 795.2 1039.0 786.7 1043.0 784.8" stroke="#8a8a8a" stroke-width="1.56" opacity="0.6"/><path d="M1059.0 844.1C1061.4 843.7 1068.9 843.5 1073.5 841.6C1078.0 839.8 1084.1 834.3 1086.3 832.8" stroke="#8a8a8a" stroke-width="1.17" opacity="0.5"/><path d="M1121.5 828.0C1122.3 833.4 1125.8 849.4 1126.3 860.1C1126.8 870.7 1125.0 886.8 1124.7 892.1" stroke="#d3e6f2" stroke-width="2.86" opacity="0.9"/><path d="M1019.0 911.3C1022.2 915.0 1030.2 927.3 1038.2 933.7C1046.2 940.1 1062.2 947.1 1067.1 949.7" stroke="#d9e8f0" stroke-width="1.95" opacity="0.8"/><path d="M712.6 962.4C714.0 964.3 717.8 970.2 720.6 973.7C723.4 977.1 728.0 981.7 729.4 983.3" stroke="#111" stroke-width="2.1"/><path d="M729.4 983.3C730.4 981.9 733.4 978.5 735.0 975.3C736.6 972.1 737.7 967.4 739.0 964.1C740.4 960.7 742.4 956.7 743.0 955.2" stroke="#111" stroke-width="2.1"/><path d="M743.0 955.2C742.4 957.2 739.8 963.1 739.0 967.3C738.2 971.4 737.7 975.8 738.2 980.1C738.8 984.3 740.2 988.9 742.2 992.9C744.2 996.9 747.3 1000.6 750.3 1004.1C753.2 1007.6 757.2 1011.2 759.9 1013.7C762.5 1016.1 765.2 1018.0 766.3 1018.8" stroke="#111" stroke-width="2.1"/><path d="M809.5 970.5C811.1 971.9 815.6 977.0 819.1 979.3C822.6 981.5 826.6 983.3 830.3 984.1C834.1 984.9 837.8 984.6 841.5 984.1C845.3 983.5 849.3 982.1 852.7 980.9C856.2 979.7 859.9 977.9 862.3 976.9C864.7 975.8 866.3 974.9 867.1 974.5" stroke="#111" stroke-width="2.1"/><path d="M867.1 974.5C867.9 975.9 869.8 980.2 872.0 983.3C874.1 986.3 876.8 990.1 880.0 992.9C883.2 995.7 887.2 998.3 891.2 1000.1C895.2 1001.8 899.8 1003.0 904.0 1003.3C908.1 1003.5 914.0 1001.9 916.0 1001.7" stroke="#111" stroke-width="2.1"/><path d="M916.0 1001.7C915.1 999.9 911.6 994.9 910.4 991.3C909.2 987.7 908.6 983.7 908.8 980.1C908.9 976.5 910.8 971.4 911.2 969.7" stroke="#111" stroke-width="2.1"/><path d="M911.2 969.7C913.2 968.5 920.4 964.1 923.2 962.4C926.0 960.8 927.2 960.0 928.0 959.6" stroke="#111" stroke-width="2.1"/><path d="M811.1 980.1C810.7 982.2 809.0 988.6 808.7 992.9C808.4 997.1 809.0 1001.4 809.5 1005.7C810.0 1010.0 811.5 1016.6 811.9 1018.8" stroke="#111" stroke-width="2.1"/><path d="M888.8 1000.1C888.5 1001.5 887.3 1005.8 887.2 1008.9C887.0 1012.0 887.8 1017.2 888.0 1018.8" stroke="#111" stroke-width="2.1"/><path d="M800.7 959.2C801.1 959.5 801.6 959.0 803.1 960.8C804.6 962.7 808.4 968.9 809.5 970.5" stroke="#111" stroke-width="2.1"/><path d="M806.3 975.3C805.4 977.7 802.0 984.9 800.7 989.7C799.4 994.5 798.3 999.2 798.3 1004.1C798.3 1008.9 800.3 1016.4 800.7 1018.8" stroke="#8a8a8a" stroke-width="1.56" opacity="0.7"/><path d="M814.3 983.3C814.6 986.5 815.1 997.1 815.9 1002.5C816.7 1007.8 818.6 1013.2 819.1 1015.3" stroke="#8a8a8a" stroke-width="1.43" opacity="0.6"/><path d="M763.1 1004.1C764.7 1005.2 768.9 1008.6 772.7 1010.5C776.4 1012.4 783.3 1014.5 785.5 1015.3" stroke="#8a8a8a" stroke-width="1.3" opacity="0.5"/><path d="M811.1 967.3C812.4 968.9 815.6 974.5 819.1 976.9C822.6 979.3 829.8 980.9 831.9 981.7" stroke="#8a8a8a" stroke-width="1.3" opacity="0.5"/><path d="M892.8 1002.5 L894.4 1012.1" stroke="#8a8a8a" stroke-width="1.17" opacity="0.4"/><path d="M1063.8 960.0C1064.9 961.0 1067.1 963.4 1070.3 965.7C1073.5 967.9 1079.3 971.3 1083.1 973.7C1086.8 976.1 1091.1 979.0 1092.7 980.1" stroke="#111" stroke-width="2.1"/><path d="M1092.7 980.1C1093.1 981.4 1095.2 985.4 1095.1 988.1C1094.9 990.7 1093.5 993.8 1091.9 996.1C1090.3 998.3 1086.5 1000.7 1085.5 1001.7" stroke="#111" stroke-width="2.1"/><path d="M1085.5 1001.7C1086.9 1002.2 1090.9 1004.4 1094.3 1004.9C1097.6 1005.4 1101.7 1005.4 1105.5 1004.9C1109.2 1004.4 1113.2 1003.4 1116.7 1001.7C1120.2 999.9 1123.6 997.0 1126.3 994.5C1129.0 991.9 1131.2 988.5 1132.7 986.5C1134.2 984.5 1134.7 983.1 1135.1 982.5" stroke="#111" stroke-width="2.1"/><path d="M1135.1 982.5C1136.6 983.3 1140.6 986.1 1143.9 987.3C1147.2 988.5 1151.4 989.5 1155.1 989.7C1158.9 989.8 1163.0 989.0 1166.3 988.1C1169.7 987.1 1172.7 985.4 1175.1 984.1C1177.5 982.7 1179.8 980.7 1180.7 980.1" stroke="#111" stroke-width="2.1"/><path d="M1188.7 960.8C1188.7 961.6 1189.5 963.3 1188.7 965.7C1187.9 968.1 1185.3 972.9 1183.9 975.3C1182.6 977.7 1181.3 979.3 1180.7 980.1" stroke="#111" stroke-width="2.1"/><path d="M1180.7 980.1C1181.5 982.2 1184.2 988.3 1185.5 992.9C1186.9 997.4 1188.1 1003.0 1188.7 1007.3C1189.4 1011.6 1189.4 1016.9 1189.5 1018.8" stroke="#111" stroke-width="2.1"/><path d="M1113.5 1004.1C1114.0 1005.4 1115.9 1009.6 1116.7 1012.1C1117.4 1014.5 1117.8 1017.7 1118.0 1018.8" stroke="#111" stroke-width="2.1"/><path d="M1304.8 967.3C1304.4 969.9 1303.6 978.5 1302.4 983.3C1301.2 988.1 1299.8 992.3 1297.6 996.1C1295.5 999.8 1291.0 1004.1 1289.6 1005.7" stroke="#555" stroke-width="1.6"/><path d="M1099.1 986.5C1101.2 988.1 1107.6 995.0 1111.9 996.1C1116.2 997.1 1122.6 993.4 1124.7 992.9" stroke="#8a8a8a" stroke-width="1.3" opacity="0.5"/><path d="M1172.7 989.7C1173.5 991.8 1176.2 997.7 1177.5 1002.5C1178.9 1007.3 1180.2 1015.8 1180.7 1018.5" stroke="#8a8a8a" stroke-width="1.56" opacity="0.7"/><path d="M1147.1 962.4C1149.3 964.6 1155.7 972.9 1159.9 975.3C1164.2 977.7 1170.6 976.6 1172.7 976.9" stroke="#8a8a8a" stroke-width="1.3" opacity="0.5"/><path d="M1280.0 996.1C1281.6 995.0 1286.7 992.9 1289.6 989.7C1292.6 986.5 1296.3 979.0 1297.6 976.9" stroke="#bbb" stroke-width="1.56" opacity="0.7"/></g></g><g fill="#fff" stroke="#2e2e8a" stroke-width="1.9"><path d="M1224.7 763.4L1235.3 774L1224.7 784.6L1214.1000000000001 774Z"/><path d="M1158.8 815.0L1169.3999999999999 825.6L1158.8 836.2L1148.2 825.6Z"/><path d="M1255.8 812.0L1266.3999999999999 822.6L1255.8 833.2L1245.2 822.6Z"/><path d="M1289.5 812.9L1300.1 823.5L1289.5 834.1L1278.9 823.5Z"/><path d="M1138.3 847.1999999999999L1148.8999999999999 857.8L1138.3 868.4L1127.7 857.8Z"/><path d="M1166.5 846.6999999999999L1177.1 857.3L1166.5 867.9L1155.9 857.3Z"/><path d="M1289 974.3L1299.6 984.9L1289 995.5L1278.4 984.9Z"/><path d="M1265.4 1002.3L1276.0 1012.9L1265.4 1023.5L1254.8000000000002 1012.9Z"/><path d="M1282 1002.3L1292.6 1012.9L1282 1023.5L1271.4 1012.9Z"/><path d="M1247.2 1021.1L1257.8 1031.7L1247.2 1042.3L1236.6000000000001 1031.7Z"/><circle cx="1180.2" cy="743" r="7.3" stroke-dasharray="3.1 0.75"/><circle cx="1225" cy="757.8" r="7.3" stroke-dasharray="3.1 0.75"/><circle cx="1184.5" cy="782.8" r="7.3" stroke-dasharray="3.1 0.75"/><circle cx="1147.5" cy="814.5" r="7.3" stroke-dasharray="3.1 0.75"/><circle cx="1298" cy="796" r="7.3" stroke-dasharray="3.1 0.75"/><circle cx="1304.5" cy="980.1" r="7.3" stroke-dasharray="3.1 0.75"/></g></svg><div class="tab on" style="position:absolute;left:1608px;top:194.5px;width:180px;height:35.5px;"></div><div class="tab off" style="position:absolute;left:1789.5px;top:198.5px;width:194.5px;height:31.5px;"></div><div style="position:absolute;left:1788px;top:229.5px;width:197px;height:1px;background:#5b5b5b;"></div><span class="t s" style="left:1623.7px;top:206.00px;font-size:16px;transform:scaleX(0.9802);">Specific Colour Se…</span><span class="t s" style="left:1806.2px;top:208.00px;font-size:16px;transform:scaleX(0.9781);">Advanced Colour Se…</span><svg style="position:absolute;left:1607.6px;top:230px;" width="26" height="26" viewBox="0 0 26 26"><circle cx="13" cy="13" r="11.3" fill="none" stroke="#e2e2e2" stroke-width="1.5"/><rect x="7" y="13" width="11.6" height="6.4" rx="0.8" fill="#e6e6e6"/><path d="M10 13V10.5Q10 6.8 13.6 6.8Q16.6 6.8 17.2 9.6" fill="none" stroke="#e6e6e6" stroke-width="1.7"/><rect x="7" y="15.6" width="11.6" height="1" fill="#777"/></svg><span class="t s" style="left:1640.2px;top:237.00px;font-size:16px;transform:scaleX(0.9968);">Specific Colour Selector</span><svg style="position:absolute;left:1927.5px;top:232.5px;" width="22" height="21" viewBox="0 0 22 21"><rect x="7.2" y="1" width="13.6" height="11.6" fill="none" stroke="#e4e4e4" stroke-width="1.7"/><rect x="1" y="8.2" width="13.6" height="11.6" fill="#474747" stroke="#e4e4e4" stroke-width="1.7"/></svg><svg style="position:absolute;left:1962.5px;top:235.5px;" width="16" height="15" viewBox="0 0 16 15"><path d="M1 1L15 14M15 1L1 14" stroke="#e6e6e6" stroke-width="1.9"/></svg><div class="combo" style="position:absolute;left:1614.5px;top:263.5px;width:318.5px;height:31px;"></div><span class="t s" style="left:1651.7px;top:274.00px;font-size:16px;transform:scaleX(1.0149);">RGB/Alpha (8-bit integer/channel)</span><svg style="position:absolute;left:1915px;top:279.7px;" width="12" height="6.5" viewBox="0 0 12 6.5"><path d="M0 0H12L6.0 6.5Z" fill="#9b9b9b"/></svg><svg style="position:absolute;left:1949px;top:269px;" width="23" height="19" viewBox="0 0 23 19"><circle cx="5" cy="5" r="3.6" fill="none" stroke="#dcdcdc" stroke-width="1.6"/><circle cx="17.5" cy="14" r="3.6" fill="none" stroke="#dcdcdc" stroke-width="1.6"/><path d="M17 1L5.5 18" stroke="#dcdcdc" stroke-width="1.6"/></svg><span class="t s" style="left:1612.8px;top:316.00px;font-size:16px;transform:scaleX(0.9675);">Red:</span><div style="position:absolute;left:1670.5px;top:305.5px;width:235px;height:24px;background:linear-gradient(90deg,#000,#ff0000);"></div><svg style="position:absolute;left:1666.5px;top:333.5px;" width="9" height="5.5" viewBox="0 0 9 5.5"><path d="M0 5.5H9L4.5 0Z" fill="#c8c8c8"/></svg><div style="position:absolute;left:1913px;top:306px;width:64.5px;height:29.5px;border-radius:4px;background:#333;box-shadow:0 0 0 1px #3d3d3d;"></div><div style="position:absolute;left:1957.0px;top:307px;width:20px;height:27.5px;border:1px solid #565656;border-radius:0 4px 4px 0;background:#424242;"></div><svg style="position:absolute;left:1961.5px;top:311.75px;" width="11" height="6.5" viewBox="0 0 11 6.5"><path d="M0 6.5H11L5.5 0Z" fill="#8e8e8e"/></svg><svg style="position:absolute;left:1961.5px;top:323.25px;" width="11" height="6.5" viewBox="0 0 11 6.5"><path d="M0 0H11L5.5 6.5Z" fill="#6a6a6a"/></svg><span class="t s" style="left:1917.7px;top:315.00px;font-size:16px;transform:scaleX(1.1463);">0</span><span class="t s" style="left:1612.8px;top:358.00px;font-size:16px;transform:scaleX(0.9956);">Green:</span><div style="position:absolute;left:1670.5px;top:348px;width:235px;height:24px;background:linear-gradient(90deg,#000,#00ff00);"></div><svg style="position:absolute;left:1666.5px;top:376px;" width="9" height="5.5" viewBox="0 0 9 5.5"><path d="M0 5.5H9L4.5 0Z" fill="#c8c8c8"/></svg><div style="position:absolute;left:1913px;top:349px;width:64.5px;height:29.5px;border-radius:4px;background:#333;box-shadow:0 0 0 1px #3d3d3d;"></div><div style="position:absolute;left:1957.0px;top:350px;width:20px;height:27.5px;border:1px solid #565656;border-radius:0 4px 4px 0;background:#424242;"></div><svg style="position:absolute;left:1961.5px;top:354.75px;" width="11" height="6.5" viewBox="0 0 11 6.5"><path d="M0 6.5H11L5.5 0Z" fill="#8e8e8e"/></svg><svg style="position:absolute;left:1961.5px;top:366.25px;" width="11" height="6.5" viewBox="0 0 11 6.5"><path d="M0 0H11L5.5 6.5Z" fill="#6a6a6a"/></svg><span class="t s" style="left:1917.7px;top:358.00px;font-size:16px;transform:scaleX(1.1463);">0</span><span class="t s" style="left:1612.8px;top:400.00px;font-size:16px;transform:scaleX(1.0063);">Blue:</span><div style="position:absolute;left:1670.5px;top:390.5px;width:235px;height:24px;background:linear-gradient(90deg,#000,#0000ff);"></div><svg style="position:absolute;left:1666.5px;top:418.5px;" width="9" height="5.5" viewBox="0 0 9 5.5"><path d="M0 5.5H9L4.5 0Z" fill="#c8c8c8"/></svg><div style="position:absolute;left:1913px;top:391.5px;width:64.5px;height:29.5px;border-radius:4px;background:#333;box-shadow:0 0 0 1px #3d3d3d;"></div><div style="position:absolute;left:1957.0px;top:392.5px;width:20px;height:27.5px;border:1px solid #565656;border-radius:0 4px 4px 0;background:#424242;"></div><svg style="position:absolute;left:1961.5px;top:397.25px;" width="11" height="6.5" viewBox="0 0 11 6.5"><path d="M0 6.5H11L5.5 0Z" fill="#8e8e8e"/></svg><svg style="position:absolute;left:1961.5px;top:408.75px;" width="11" height="6.5" viewBox="0 0 11 6.5"><path d="M0 0H11L5.5 6.5Z" fill="#6a6a6a"/></svg><span class="t s" style="left:1917.7px;top:400.00px;font-size:16px;transform:scaleX(1.1463);">0</span><span class="t s" style="left:1612.8px;top:442.00px;font-size:16px;transform:scaleX(1.0068);">Colour name:</span><div style="position:absolute;left:1843px;top:432.5px;width:135px;height:31px;background:#3c3c3c;border-radius:0 4px 4px 0;"></div><div style="position:absolute;left:1729px;top:431.5px;width:114.5px;height:33px;background:#000;"></div><span class="t s" style="left:1899.2px;top:442.00px;font-size:16px;transform:scaleX(1.1350);">#000000</span><div style="position:absolute;left:1613.5px;top:484.5px;width:20px;height:20px;border-radius:50%;background:#3a3a3a;box-shadow:0 0 0 1px #414141;"><div style="position:absolute;left:5.5px;top:5.5px;width:9px;height:9px;border-radius:50%;background:#9c9c9c;"></div></div><span class="t s" style="left:1642.2px;top:488.00px;font-size:16px;transform:scaleX(0.9287);">RGB</span><div style="position:absolute;left:1691px;top:483px;width:20px;height:20px;border-radius:50%;background:#3a3a3a;"></div><div class="combo" style="position:absolute;left:1721.5px;top:479.5px;width:72px;height:30px;"></div><span class="t s" style="left:1727.2px;top:488.00px;font-size:16px;transform:scaleX(0.9484);">HSV</span><svg style="position:absolute;left:1772.5px;top:491.5px;" width="11" height="6" viewBox="0 0 11 6"><path d="M0 0H11L5.5 6Z" fill="#9b9b9b"/></svg><div style="position:absolute;left:1786.5px;top:624.3px;width:1.8px;height:2px;background:#7d7d7d;"></div><div style="position:absolute;left:1790.1px;top:624.3px;width:1.8px;height:2px;background:#7d7d7d;"></div><div style="position:absolute;left:1793.7px;top:624.3px;width:1.8px;height:2px;background:#7d7d7d;"></div><div style="position:absolute;left:1797.3px;top:624.3px;width:1.8px;height:2px;background:#7d7d7d;"></div><div style="position:absolute;left:1800.9px;top:624.3px;width:1.8px;height:2px;background:#7d7d7d;"></div><div style="position:absolute;left:1804.5px;top:624.3px;width:1.8px;height:2px;background:#7d7d7d;"></div><div style="position:absolute;left:1808.1px;top:624.3px;width:1.8px;height:2px;background:#7d7d7d;"></div><div style="position:absolute;left:1602px;top:620.0px;width:3px;height:1.6px;background:#777;"></div><div style="position:absolute;left:1602px;top:623.6px;width:3px;height:1.6px;background:#777;"></div><div style="position:absolute;left:1602px;top:627.2px;width:3px;height:1.6px;background:#777;"></div><div style="position:absolute;left:1602px;top:630.8px;width:3px;height:1.6px;background:#777;"></div><div style="position:absolute;left:1602px;top:634.4px;width:3px;height:1.6px;background:#777;"></div><div style="position:absolute;left:1602px;top:638.0px;width:3px;height:1.6px;background:#777;"></div><div style="position:absolute;left:1602px;top:641.6px;width:3px;height:1.6px;background:#777;"></div><div class="tab on" style="position:absolute;left:1608px;top:630px;width:129.5px;height:35px;"></div><div class="tab off" style="position:absolute;left:1738.5px;top:634px;width:99.5px;height:31px;"></div><div style="position:absolute;left:1737px;top:664.5px;width:248px;height:1px;background:#5b5b5b;"></div><span class="t s" style="left:1623.7px;top:642.00px;font-size:16px;transform:scaleX(1.0240);">Undo History</span><span class="t s" style="left:1754.8px;top:644.00px;font-size:16px;transform:scaleX(0.9984);">Recorder</span><svg style="position:absolute;left:1607.6px;top:666px;" width="26" height="26" viewBox="0 0 26 26"><circle cx="13" cy="13" r="11.3" fill="none" stroke="#e2e2e2" stroke-width="1.5"/><rect x="7" y="13" width="11.6" height="6.4" rx="0.8" fill="#e6e6e6"/><path d="M10 13V10.5Q10 6.8 13.6 6.8Q16.6 6.8 17.2 9.6" fill="none" stroke="#e6e6e6" stroke-width="1.7"/><rect x="7" y="15.6" width="11.6" height="1" fill="#777"/></svg><span class="t s" style="left:1640.2px;top:673.00px;font-size:16px;transform:scaleX(1.0294);">Undo History</span><svg style="position:absolute;left:1927.5px;top:668.5px;" width="22" height="21" viewBox="0 0 22 21"><rect x="7.2" y="1" width="13.6" height="11.6" fill="none" stroke="#e4e4e4" stroke-width="1.7"/><rect x="1" y="8.2" width="13.6" height="11.6" fill="#474747" stroke="#e4e4e4" stroke-width="1.7"/></svg><svg style="position:absolute;left:1962.5px;top:671.5px;" width="16" height="15" viewBox="0 0 16 15"><path d="M1 1L15 14M15 1L1 14" stroke="#e6e6e6" stroke-width="1.9"/></svg><div style="position:absolute;left:1608px;top:691px;width:356.5px;height:373.5px;background:#363636;"></div><div style="position:absolute;left:1612px;top:691px;width:47px;height:23.3px;background:#e3e3e3;overflow:hidden;"><svg width="47" height="23.3" style="position:absolute;left:0;top:0"><rect x="32.1" y="5.0" width="0.8" height="0.8" fill="#111"/><rect x="13.1" y="11.2" width="0.8" height="0.8" fill="#333"/><rect x="23.0" y="-15.6" width="1.0" height="1.0" fill="#111"/><rect x="25.9" y="1.8" width="0.8" height="0.8" fill="#333"/><rect x="14.9" y="-3.7" width="1.5" height="1.5" fill="#333"/><rect x="6.0" y="10.7" width="1.5" height="1.5" fill="#333"/><rect x="31.1" y="-14.8" width="0.8" height="0.8" fill="#333"/><rect x="42.5" y="11.1" width="1.0" height="1.0" fill="#333"/><rect x="33.8" y="-8.5" width="1.0" height="1.0" fill="#333"/><rect x="32.6" y="17.9" width="1.5" height="1.5" fill="#555"/><rect x="22.5" y="-19.3" width="1.0" height="1.0" fill="#555"/><rect x="20.8" y="-17.6" width="0.8" height="0.8" fill="#555"/><rect x="21.5" y="-17.5" width="1.2" height="1.2" fill="#111"/><rect x="11.4" y="8.0" width="1.5" height="1.5" fill="#333"/><rect x="29.7" y="-17.9" width="0.8" height="0.8" fill="#555"/><rect x="2.2" y="14.0" width="1.5" height="1.5" fill="#555"/><rect x="32.3" y="-5.0" width="1.5" height="1.5" fill="#222"/><rect x="28.3" y="8.5" width="1.0" height="1.0" fill="#222"/><rect x="40.9" y="10.4" width="1.5" height="1.5" fill="#555"/><rect x="35.7" y="0.6" width="1.2" height="1.2" fill="#111"/><rect x="27.3" y="-15.8" width="1.2" height="1.2" fill="#555"/><rect x="29.0" y="-18.7" width="0.8" height="0.8" fill="#333"/><rect x="26.2" y="-6.4" width="1.0" height="1.0" fill="#555"/><rect x="27.9" y="-9.0" width="0.8" height="0.8" fill="#555"/><rect x="16.2" y="7.6" width="0.8" height="0.8" fill="#333"/><rect x="16.0" y="9.0" width="1.5" height="1.5" fill="#333"/><rect x="7.1" y="9.0" width="1.5" height="1.5" fill="#222"/><rect x="25.4" y="-10.6" width="1.2" height="1.2" fill="#111"/><rect x="10.6" y="6.2" width="0.8" height="0.8" fill="#111"/><rect x="16.5" y="-6.7" width="1.0" height="1.0" fill="#111"/><rect x="22.5" y="-15.9" width="1.0" height="1.0" fill="#222"/><rect x="14.4" y="14.0" width="1.5" height="1.5" fill="#333"/><rect x="21.2" y="19.3" width="1.5" height="1.5" fill="#555"/><rect x="17.3" y="-0.8" width="1.5" height="1.5" fill="#333"/><rect x="28.4" y="-15.6" width="1.0" height="1.0" fill="#111"/><rect x="9.1" y="14.9" width="1.5" height="1.5" fill="#555"/><rect x="25.0" y="0.7" width="1.2" height="1.2" fill="#222"/><rect x="35.0" y="11.6" width="0.8" height="0.8" fill="#555"/><rect x="28.7" y="-5.5" width="1.2" height="1.2" fill="#111"/><rect x="33.8" y="-9.5" width="1.2" height="1.2" fill="#555"/><rect x="26.4" y="6.1" width="0.8" height="0.8" fill="#111"/><rect x="15.4" y="2.0" width="1.2" height="1.2" fill="#111"/><rect x="23.5" y="-8.5" width="1.2" height="1.2" fill="#555"/><rect x="20.2" y="-9.1" width="1.5" height="1.5" fill="#555"/><rect x="8.1" y="17.2" width="1.5" height="1.5" fill="#555"/><rect x="24.4" y="18.5" width="1.0" height="1.0" fill="#333"/><rect x="42.7" y="13.7" width="1.5" height="1.5" fill="#555"/><rect x="31.9" y="7.8" width="1.5" height="1.5" fill="#333"/><rect x="38.8" y="4.8" width="1.5" height="1.5" fill="#555"/><rect x="33.2" y="5.1" width="1.2" height="1.2" fill="#222"/><rect x="25.1" y="-12.3" width="1.0" height="1.0" fill="#333"/><rect x="10.5" y="10.5" width="0.8" height="0.8" fill="#111"/><rect x="7.0" y="19.5" width="1.0" height="1.0" fill="#222"/><rect x="16.1" y="-7.3" width="1.0" height="1.0" fill="#222"/><rect x="19.4" y="-3.4" width="0.8" height="0.8" fill="#333"/><rect x="31.7" y="-10.6" width="0.8" height="0.8" fill="#555"/><rect x="17.6" y="-3.8" width="1.5" height="1.5" fill="#222"/><rect x="25.3" y="7.7" width="0.8" height="0.8" fill="#555"/><rect x="24.2" y="-16.4" width="1.2" height="1.2" fill="#555"/><rect x="39.0" y="18.6" width="1.5" height="1.5" fill="#111"/><rect x="29.6" y="12.7" width="1.2" height="1.2" fill="#111"/><rect x="25.1" y="-14.4" width="1.5" height="1.5" fill="#333"/><rect x="28.8" y="19.0" width="1.2" height="1.2" fill="#222"/><rect x="19.0" y="-4.7" width="1.0" height="1.0" fill="#555"/><rect x="37.4" y="5.3" width="1.5" height="1.5" fill="#111"/><rect x="15.9" y="-2.7" width="1.2" height="1.2" fill="#111"/><rect x="17.6" y="19.2" width="1.0" height="1.0" fill="#555"/><rect x="15.5" y="9.8" width="1.2" height="1.2" fill="#111"/><rect x="28.7" y="-19.4" width="1.2" height="1.2" fill="#111"/><rect x="6.6" y="17.4" width="0.8" height="0.8" fill="#222"/><rect x="40.5" y="6.5" width="1.0" height="1.0" fill="#555"/><rect x="19.0" y="-18.6" width="1.5" height="1.5" fill="#222"/><rect x="25.3" y="-0.7" width="1.0" height="1.0" fill="#111"/><rect x="12.9" y="11.5" width="1.2" height="1.2" fill="#333"/><rect x="15.1" y="9.0" width="1.5" height="1.5" fill="#111"/><rect x="34.9" y="0.8" width="0.8" height="0.8" fill="#222"/><rect x="15.4" y="10.6" width="1.2" height="1.2" fill="#555"/><rect x="4.7" y="9.4" width="1.2" height="1.2" fill="#555"/><rect x="35.3" y="7.4" width="1.0" height="1.0" fill="#222"/><rect x="24.1" y="-20.1" width="0.8" height="0.8" fill="#333"/><rect x="26.7" y="-19.6" width="1.5" height="1.5" fill="#111"/><rect x="38.7" y="14.6" width="1.5" height="1.5" fill="#111"/><rect x="31.8" y="7.4" width="1.2" height="1.2" fill="#111"/><rect x="4.6" y="13.4" width="0.8" height="0.8" fill="#111"/><rect x="28.5" y="3.4" width="1.5" height="1.5" fill="#555"/><rect x="23.1" y="-14.4" width="1.5" height="1.5" fill="#555"/><rect x="21.1" y="1.6" width="0.8" height="0.8" fill="#222"/><rect x="14.3" y="9.5" width="0.8" height="0.8" fill="#222"/><rect x="6.0" y="6.7" width="1.5" height="1.5" fill="#222"/><rect x="33.6" y="20.2" width="0.8" height="0.8" fill="#222"/><rect x="11.1" y="13.9" width="0.8" height="0.8" fill="#333"/><rect x="33.8" y="20.1" width="1.5" height="1.5" fill="#333"/><rect x="17.8" y="-12.8" width="1.0" height="1.0" fill="#222"/><rect x="7.4" y="5.0" width="0.8" height="0.8" fill="#111"/><rect x="14.6" y="10.0" width="0.8" height="0.8" fill="#111"/></svg></div><div style="position:absolute;left:1660px;top:691px;width:130px;height:9px;overflow:hidden;"><span class="t s" style="left:7.2px;top:-6.00px;font-size:16px;transform:scaleX(1.0224);">Move points</span></div><div style="position:absolute;left:1612px;top:716.96px;width:47px;height:46.5px;background:#e3e3e3;overflow:hidden;"><svg width="47" height="46.5" style="position:absolute;left:0;top:0"><rect x="32.1" y="28.2" width="0.8" height="0.8" fill="#111"/><rect x="13.1" y="34.4" width="0.8" height="0.8" fill="#333"/><rect x="23.0" y="7.6" width="1.0" height="1.0" fill="#111"/><rect x="25.9" y="25.0" width="0.8" height="0.8" fill="#333"/><rect x="14.9" y="19.5" width="1.5" height="1.5" fill="#333"/><rect x="6.0" y="33.9" width="1.5" height="1.5" fill="#333"/><rect x="31.1" y="8.4" width="0.8" height="0.8" fill="#333"/><rect x="42.5" y="34.3" width="1.0" height="1.0" fill="#333"/><rect x="33.8" y="14.7" width="1.0" height="1.0" fill="#333"/><rect x="32.6" y="41.1" width="1.5" height="1.5" fill="#555"/><rect x="22.5" y="3.9" width="1.0" height="1.0" fill="#555"/><rect x="20.8" y="5.6" width="0.8" height="0.8" fill="#555"/><rect x="21.5" y="5.7" width="1.2" height="1.2" fill="#111"/><rect x="11.4" y="31.2" width="1.5" height="1.5" fill="#333"/><rect x="29.7" y="5.3" width="0.8" height="0.8" fill="#555"/><rect x="2.2" y="37.2" width="1.5" height="1.5" fill="#555"/><rect x="32.3" y="18.2" width="1.5" height="1.5" fill="#222"/><rect x="28.3" y="31.7" width="1.0" height="1.0" fill="#222"/><rect x="40.9" y="33.6" width="1.5" height="1.5" fill="#555"/><rect x="35.7" y="23.8" width="1.2" height="1.2" fill="#111"/><rect x="27.3" y="7.4" width="1.2" height="1.2" fill="#555"/><rect x="29.0" y="4.5" width="0.8" height="0.8" fill="#333"/><rect x="26.2" y="16.8" width="1.0" height="1.0" fill="#555"/><rect x="27.9" y="14.2" width="0.8" height="0.8" fill="#555"/><rect x="16.2" y="30.8" width="0.8" height="0.8" fill="#333"/><rect x="16.0" y="32.2" width="1.5" height="1.5" fill="#333"/><rect x="7.1" y="32.2" width="1.5" height="1.5" fill="#222"/><rect x="25.4" y="12.6" width="1.2" height="1.2" fill="#111"/><rect x="10.6" y="29.4" width="0.8" height="0.8" fill="#111"/><rect x="16.5" y="16.5" width="1.0" height="1.0" fill="#111"/><rect x="22.5" y="7.3" width="1.0" height="1.0" fill="#222"/><rect x="14.4" y="37.2" width="1.5" height="1.5" fill="#333"/><rect x="21.2" y="42.5" width="1.5" height="1.5" fill="#555"/><rect x="17.3" y="22.4" width="1.5" height="1.5" fill="#333"/><rect x="28.4" y="7.6" width="1.0" height="1.0" fill="#111"/><rect x="9.1" y="38.1" width="1.5" height="1.5" fill="#555"/><rect x="25.0" y="23.9" width="1.2" height="1.2" fill="#222"/><rect x="35.0" y="34.8" width="0.8" height="0.8" fill="#555"/><rect x="28.7" y="17.7" width="1.2" height="1.2" fill="#111"/><rect x="33.8" y="13.7" width="1.2" height="1.2" fill="#555"/><rect x="26.4" y="29.3" width="0.8" height="0.8" fill="#111"/><rect x="15.4" y="25.2" width="1.2" height="1.2" fill="#111"/><rect x="23.5" y="14.7" width="1.2" height="1.2" fill="#555"/><rect x="20.2" y="14.1" width="1.5" height="1.5" fill="#555"/><rect x="8.1" y="40.4" width="1.5" height="1.5" fill="#555"/><rect x="24.4" y="41.7" width="1.0" height="1.0" fill="#333"/><rect x="42.7" y="36.9" width="1.5" height="1.5" fill="#555"/><rect x="31.9" y="31.0" width="1.5" height="1.5" fill="#333"/><rect x="38.8" y="28.0" width="1.5" height="1.5" fill="#555"/><rect x="33.2" y="28.3" width="1.2" height="1.2" fill="#222"/><rect x="25.1" y="10.9" width="1.0" height="1.0" fill="#333"/><rect x="10.5" y="33.7" width="0.8" height="0.8" fill="#111"/><rect x="7.0" y="42.7" width="1.0" height="1.0" fill="#222"/><rect x="16.1" y="15.9" width="1.0" height="1.0" fill="#222"/><rect x="19.4" y="19.8" width="0.8" height="0.8" fill="#333"/><rect x="31.7" y="12.6" width="0.8" height="0.8" fill="#555"/><rect x="17.6" y="19.4" width="1.5" height="1.5" fill="#222"/><rect x="25.3" y="30.9" width="0.8" height="0.8" fill="#555"/><rect x="24.2" y="6.8" width="1.2" height="1.2" fill="#555"/><rect x="39.0" y="41.8" width="1.5" height="1.5" fill="#111"/><rect x="29.6" y="35.9" width="1.2" height="1.2" fill="#111"/><rect x="25.1" y="8.8" width="1.5" height="1.5" fill="#333"/><rect x="28.8" y="42.2" width="1.2" height="1.2" fill="#222"/><rect x="19.0" y="18.5" width="1.0" height="1.0" fill="#555"/><rect x="37.4" y="28.5" width="1.5" height="1.5" fill="#111"/><rect x="15.9" y="20.5" width="1.2" height="1.2" fill="#111"/><rect x="17.6" y="42.4" width="1.0" height="1.0" fill="#555"/><rect x="15.5" y="33.0" width="1.2" height="1.2" fill="#111"/><rect x="28.7" y="3.8" width="1.2" height="1.2" fill="#111"/><rect x="6.6" y="40.6" width="0.8" height="0.8" fill="#222"/><rect x="40.5" y="29.7" width="1.0" height="1.0" fill="#555"/><rect x="19.0" y="4.6" width="1.5" height="1.5" fill="#222"/><rect x="25.3" y="22.5" width="1.0" height="1.0" fill="#111"/><rect x="12.9" y="34.7" width="1.2" height="1.2" fill="#333"/><rect x="15.1" y="32.2" width="1.5" height="1.5" fill="#111"/><rect x="34.9" y="24.0" width="0.8" height="0.8" fill="#222"/><rect x="15.4" y="33.8" width="1.2" height="1.2" fill="#555"/><rect x="4.7" y="32.6" width="1.2" height="1.2" fill="#555"/><rect x="35.3" y="30.6" width="1.0" height="1.0" fill="#222"/><rect x="24.1" y="3.1" width="0.8" height="0.8" fill="#333"/><rect x="26.7" y="3.6" width="1.5" height="1.5" fill="#111"/><rect x="38.7" y="37.8" width="1.5" height="1.5" fill="#111"/><rect x="31.8" y="30.6" width="1.2" height="1.2" fill="#111"/><rect x="4.6" y="36.6" width="0.8" height="0.8" fill="#111"/><rect x="28.5" y="26.6" width="1.5" height="1.5" fill="#555"/><rect x="23.1" y="8.8" width="1.5" height="1.5" fill="#555"/><rect x="21.1" y="24.8" width="0.8" height="0.8" fill="#222"/><rect x="14.3" y="32.7" width="0.8" height="0.8" fill="#222"/><rect x="6.0" y="29.9" width="1.5" height="1.5" fill="#222"/><rect x="33.6" y="43.4" width="0.8" height="0.8" fill="#222"/><rect x="11.1" y="37.1" width="0.8" height="0.8" fill="#333"/><rect x="33.8" y="43.3" width="1.5" height="1.5" fill="#333"/><rect x="17.8" y="10.4" width="1.0" height="1.0" fill="#222"/><rect x="7.4" y="28.2" width="0.8" height="0.8" fill="#111"/><rect x="14.6" y="33.2" width="0.8" height="0.8" fill="#111"/></svg></div><span class="t s" style="left:1667.2px;top:734.00px;font-size:16px;transform:scaleX(1.0342);">Move control point</span><div style="position:absolute;left:1612px;top:766.6800000000001px;width:47px;height:46.5px;background:#e3e3e3;overflow:hidden;"><svg width="47" height="46.5" style="position:absolute;left:0;top:0"><rect x="32.1" y="28.2" width="0.8" height="0.8" fill="#111"/><rect x="13.1" y="34.4" width="0.8" height="0.8" fill="#333"/><rect x="23.0" y="7.6" width="1.0" height="1.0" fill="#111"/><rect x="25.9" y="25.0" width="0.8" height="0.8" fill="#333"/><rect x="14.9" y="19.5" width="1.5" height="1.5" fill="#333"/><rect x="6.0" y="33.9" width="1.5" height="1.5" fill="#333"/><rect x="31.1" y="8.4" width="0.8" height="0.8" fill="#333"/><rect x="42.5" y="34.3" width="1.0" height="1.0" fill="#333"/><rect x="33.8" y="14.7" width="1.0" height="1.0" fill="#333"/><rect x="32.6" y="41.1" width="1.5" height="1.5" fill="#555"/><rect x="22.5" y="3.9" width="1.0" height="1.0" fill="#555"/><rect x="20.8" y="5.6" width="0.8" height="0.8" fill="#555"/><rect x="21.5" y="5.7" width="1.2" height="1.2" fill="#111"/><rect x="11.4" y="31.2" width="1.5" height="1.5" fill="#333"/><rect x="29.7" y="5.3" width="0.8" height="0.8" fill="#555"/><rect x="2.2" y="37.2" width="1.5" height="1.5" fill="#555"/><rect x="32.3" y="18.2" width="1.5" height="1.5" fill="#222"/><rect x="28.3" y="31.7" width="1.0" height="1.0" fill="#222"/><rect x="40.9" y="33.6" width="1.5" height="1.5" fill="#555"/><rect x="35.7" y="23.8" width="1.2" height="1.2" fill="#111"/><rect x="27.3" y="7.4" width="1.2" height="1.2" fill="#555"/><rect x="29.0" y="4.5" width="0.8" height="0.8" fill="#333"/><rect x="26.2" y="16.8" width="1.0" height="1.0" fill="#555"/><rect x="27.9" y="14.2" width="0.8" height="0.8" fill="#555"/><rect x="16.2" y="30.8" width="0.8" height="0.8" fill="#333"/><rect x="16.0" y="32.2" width="1.5" height="1.5" fill="#333"/><rect x="7.1" y="32.2" width="1.5" height="1.5" fill="#222"/><rect x="25.4" y="12.6" width="1.2" height="1.2" fill="#111"/><rect x="10.6" y="29.4" width="0.8" height="0.8" fill="#111"/><rect x="16.5" y="16.5" width="1.0" height="1.0" fill="#111"/><rect x="22.5" y="7.3" width="1.0" height="1.0" fill="#222"/><rect x="14.4" y="37.2" width="1.5" height="1.5" fill="#333"/><rect x="21.2" y="42.5" width="1.5" height="1.5" fill="#555"/><rect x="17.3" y="22.4" width="1.5" height="1.5" fill="#333"/><rect x="28.4" y="7.6" width="1.0" height="1.0" fill="#111"/><rect x="9.1" y="38.1" width="1.5" height="1.5" fill="#555"/><rect x="25.0" y="23.9" width="1.2" height="1.2" fill="#222"/><rect x="35.0" y="34.8" width="0.8" height="0.8" fill="#555"/><rect x="28.7" y="17.7" width="1.2" height="1.2" fill="#111"/><rect x="33.8" y="13.7" width="1.2" height="1.2" fill="#555"/><rect x="26.4" y="29.3" width="0.8" height="0.8" fill="#111"/><rect x="15.4" y="25.2" width="1.2" height="1.2" fill="#111"/><rect x="23.5" y="14.7" width="1.2" height="1.2" fill="#555"/><rect x="20.2" y="14.1" width="1.5" height="1.5" fill="#555"/><rect x="8.1" y="40.4" width="1.5" height="1.5" fill="#555"/><rect x="24.4" y="41.7" width="1.0" height="1.0" fill="#333"/><rect x="42.7" y="36.9" width="1.5" height="1.5" fill="#555"/><rect x="31.9" y="31.0" width="1.5" height="1.5" fill="#333"/><rect x="38.8" y="28.0" width="1.5" height="1.5" fill="#555"/><rect x="33.2" y="28.3" width="1.2" height="1.2" fill="#222"/><rect x="25.1" y="10.9" width="1.0" height="1.0" fill="#333"/><rect x="10.5" y="33.7" width="0.8" height="0.8" fill="#111"/><rect x="7.0" y="42.7" width="1.0" height="1.0" fill="#222"/><rect x="16.1" y="15.9" width="1.0" height="1.0" fill="#222"/><rect x="19.4" y="19.8" width="0.8" height="0.8" fill="#333"/><rect x="31.7" y="12.6" width="0.8" height="0.8" fill="#555"/><rect x="17.6" y="19.4" width="1.5" height="1.5" fill="#222"/><rect x="25.3" y="30.9" width="0.8" height="0.8" fill="#555"/><rect x="24.2" y="6.8" width="1.2" height="1.2" fill="#555"/><rect x="39.0" y="41.8" width="1.5" height="1.5" fill="#111"/><rect x="29.6" y="35.9" width="1.2" height="1.2" fill="#111"/><rect x="25.1" y="8.8" width="1.5" height="1.5" fill="#333"/><rect x="28.8" y="42.2" width="1.2" height="1.2" fill="#222"/><rect x="19.0" y="18.5" width="1.0" height="1.0" fill="#555"/><rect x="37.4" y="28.5" width="1.5" height="1.5" fill="#111"/><rect x="15.9" y="20.5" width="1.2" height="1.2" fill="#111"/><rect x="17.6" y="42.4" width="1.0" height="1.0" fill="#555"/><rect x="15.5" y="33.0" width="1.2" height="1.2" fill="#111"/><rect x="28.7" y="3.8" width="1.2" height="1.2" fill="#111"/><rect x="6.6" y="40.6" width="0.8" height="0.8" fill="#222"/><rect x="40.5" y="29.7" width="1.0" height="1.0" fill="#555"/><rect x="19.0" y="4.6" width="1.5" height="1.5" fill="#222"/><rect x="25.3" y="22.5" width="1.0" height="1.0" fill="#111"/><rect x="12.9" y="34.7" width="1.2" height="1.2" fill="#333"/><rect x="15.1" y="32.2" width="1.5" height="1.5" fill="#111"/><rect x="34.9" y="24.0" width="0.8" height="0.8" fill="#222"/><rect x="15.4" y="33.8" width="1.2" height="1.2" fill="#555"/><rect x="4.7" y="32.6" width="1.2" height="1.2" fill="#555"/><rect x="35.3" y="30.6" width="1.0" height="1.0" fill="#222"/><rect x="24.1" y="3.1" width="0.8" height="0.8" fill="#333"/><rect x="26.7" y="3.6" width="1.5" height="1.5" fill="#111"/><rect x="38.7" y="37.8" width="1.5" height="1.5" fill="#111"/><rect x="31.8" y="30.6" width="1.2" height="1.2" fill="#111"/><rect x="4.6" y="36.6" width="0.8" height="0.8" fill="#111"/><rect x="28.5" y="26.6" width="1.5" height="1.5" fill="#555"/><rect x="23.1" y="8.8" width="1.5" height="1.5" fill="#555"/><rect x="21.1" y="24.8" width="0.8" height="0.8" fill="#222"/><rect x="14.3" y="32.7" width="0.8" height="0.8" fill="#222"/><rect x="6.0" y="29.9" width="1.5" height="1.5" fill="#222"/><rect x="33.6" y="43.4" width="0.8" height="0.8" fill="#222"/><rect x="11.1" y="37.1" width="0.8" height="0.8" fill="#333"/><rect x="33.8" y="43.3" width="1.5" height="1.5" fill="#333"/><rect x="17.8" y="10.4" width="1.0" height="1.0" fill="#222"/><rect x="7.4" y="28.2" width="0.8" height="0.8" fill="#111"/><rect x="14.6" y="33.2" width="0.8" height="0.8" fill="#111"/></svg></div><span class="t s" style="left:1667.2px;top:783.00px;font-size:16px;transform:scaleX(0.9861);">Change Segment</span><div style="position:absolute;left:1612px;top:816.4px;width:47px;height:46.5px;background:#e3e3e3;overflow:hidden;"><svg width="47" height="46.5" style="position:absolute;left:0;top:0"><rect x="32.1" y="28.2" width="0.8" height="0.8" fill="#111"/><rect x="13.1" y="34.4" width="0.8" height="0.8" fill="#333"/><rect x="23.0" y="7.6" width="1.0" height="1.0" fill="#111"/><rect x="25.9" y="25.0" width="0.8" height="0.8" fill="#333"/><rect x="14.9" y="19.5" width="1.5" height="1.5" fill="#333"/><rect x="6.0" y="33.9" width="1.5" height="1.5" fill="#333"/><rect x="31.1" y="8.4" width="0.8" height="0.8" fill="#333"/><rect x="42.5" y="34.3" width="1.0" height="1.0" fill="#333"/><rect x="33.8" y="14.7" width="1.0" height="1.0" fill="#333"/><rect x="32.6" y="41.1" width="1.5" height="1.5" fill="#555"/><rect x="22.5" y="3.9" width="1.0" height="1.0" fill="#555"/><rect x="20.8" y="5.6" width="0.8" height="0.8" fill="#555"/><rect x="21.5" y="5.7" width="1.2" height="1.2" fill="#111"/><rect x="11.4" y="31.2" width="1.5" height="1.5" fill="#333"/><rect x="29.7" y="5.3" width="0.8" height="0.8" fill="#555"/><rect x="2.2" y="37.2" width="1.5" height="1.5" fill="#555"/><rect x="32.3" y="18.2" width="1.5" height="1.5" fill="#222"/><rect x="28.3" y="31.7" width="1.0" height="1.0" fill="#222"/><rect x="40.9" y="33.6" width="1.5" height="1.5" fill="#555"/><rect x="35.7" y="23.8" width="1.2" height="1.2" fill="#111"/><rect x="27.3" y="7.4" width="1.2" height="1.2" fill="#555"/><rect x="29.0" y="4.5" width="0.8" height="0.8" fill="#333"/><rect x="26.2" y="16.8" width="1.0" height="1.0" fill="#555"/><rect x="27.9" y="14.2" width="0.8" height="0.8" fill="#555"/><rect x="16.2" y="30.8" width="0.8" height="0.8" fill="#333"/><rect x="16.0" y="32.2" width="1.5" height="1.5" fill="#333"/><rect x="7.1" y="32.2" width="1.5" height="1.5" fill="#222"/><rect x="25.4" y="12.6" width="1.2" height="1.2" fill="#111"/><rect x="10.6" y="29.4" width="0.8" height="0.8" fill="#111"/><rect x="16.5" y="16.5" width="1.0" height="1.0" fill="#111"/><rect x="22.5" y="7.3" width="1.0" height="1.0" fill="#222"/><rect x="14.4" y="37.2" width="1.5" height="1.5" fill="#333"/><rect x="21.2" y="42.5" width="1.5" height="1.5" fill="#555"/><rect x="17.3" y="22.4" width="1.5" height="1.5" fill="#333"/><rect x="28.4" y="7.6" width="1.0" height="1.0" fill="#111"/><rect x="9.1" y="38.1" width="1.5" height="1.5" fill="#555"/><rect x="25.0" y="23.9" width="1.2" height="1.2" fill="#222"/><rect x="35.0" y="34.8" width="0.8" height="0.8" fill="#555"/><rect x="28.7" y="17.7" width="1.2" height="1.2" fill="#111"/><rect x="33.8" y="13.7" width="1.2" height="1.2" fill="#555"/><rect x="26.4" y="29.3" width="0.8" height="0.8" fill="#111"/><rect x="15.4" y="25.2" width="1.2" height="1.2" fill="#111"/><rect x="23.5" y="14.7" width="1.2" height="1.2" fill="#555"/><rect x="20.2" y="14.1" width="1.5" height="1.5" fill="#555"/><rect x="8.1" y="40.4" width="1.5" height="1.5" fill="#555"/><rect x="24.4" y="41.7" width="1.0" height="1.0" fill="#333"/><rect x="42.7" y="36.9" width="1.5" height="1.5" fill="#555"/><rect x="31.9" y="31.0" width="1.5" height="1.5" fill="#333"/><rect x="38.8" y="28.0" width="1.5" height="1.5" fill="#555"/><rect x="33.2" y="28.3" width="1.2" height="1.2" fill="#222"/><rect x="25.1" y="10.9" width="1.0" height="1.0" fill="#333"/><rect x="10.5" y="33.7" width="0.8" height="0.8" fill="#111"/><rect x="7.0" y="42.7" width="1.0" height="1.0" fill="#222"/><rect x="16.1" y="15.9" width="1.0" height="1.0" fill="#222"/><rect x="19.4" y="19.8" width="0.8" height="0.8" fill="#333"/><rect x="31.7" y="12.6" width="0.8" height="0.8" fill="#555"/><rect x="17.6" y="19.4" width="1.5" height="1.5" fill="#222"/><rect x="25.3" y="30.9" width="0.8" height="0.8" fill="#555"/><rect x="24.2" y="6.8" width="1.2" height="1.2" fill="#555"/><rect x="39.0" y="41.8" width="1.5" height="1.5" fill="#111"/><rect x="29.6" y="35.9" width="1.2" height="1.2" fill="#111"/><rect x="25.1" y="8.8" width="1.5" height="1.5" fill="#333"/><rect x="28.8" y="42.2" width="1.2" height="1.2" fill="#222"/><rect x="19.0" y="18.5" width="1.0" height="1.0" fill="#555"/><rect x="37.4" y="28.5" width="1.5" height="1.5" fill="#111"/><rect x="15.9" y="20.5" width="1.2" height="1.2" fill="#111"/><rect x="17.6" y="42.4" width="1.0" height="1.0" fill="#555"/><rect x="15.5" y="33.0" width="1.2" height="1.2" fill="#111"/><rect x="28.7" y="3.8" width="1.2" height="1.2" fill="#111"/><rect x="6.6" y="40.6" width="0.8" height="0.8" fill="#222"/><rect x="40.5" y="29.7" width="1.0" height="1.0" fill="#555"/><rect x="19.0" y="4.6" width="1.5" height="1.5" fill="#222"/><rect x="25.3" y="22.5" width="1.0" height="1.0" fill="#111"/><rect x="12.9" y="34.7" width="1.2" height="1.2" fill="#333"/><rect x="15.1" y="32.2" width="1.5" height="1.5" fill="#111"/><rect x="34.9" y="24.0" width="0.8" height="0.8" fill="#222"/><rect x="15.4" y="33.8" width="1.2" height="1.2" fill="#555"/><rect x="4.7" y="32.6" width="1.2" height="1.2" fill="#555"/><rect x="35.3" y="30.6" width="1.0" height="1.0" fill="#222"/><rect x="24.1" y="3.1" width="0.8" height="0.8" fill="#333"/><rect x="26.7" y="3.6" width="1.5" height="1.5" fill="#111"/><rect x="38.7" y="37.8" width="1.5" height="1.5" fill="#111"/><rect x="31.8" y="30.6" width="1.2" height="1.2" fill="#111"/><rect x="4.6" y="36.6" width="0.8" height="0.8" fill="#111"/><rect x="28.5" y="26.6" width="1.5" height="1.5" fill="#555"/><rect x="23.1" y="8.8" width="1.5" height="1.5" fill="#555"/><rect x="21.1" y="24.8" width="0.8" height="0.8" fill="#222"/><rect x="14.3" y="32.7" width="0.8" height="0.8" fill="#222"/><rect x="6.0" y="29.9" width="1.5" height="1.5" fill="#222"/><rect x="33.6" y="43.4" width="0.8" height="0.8" fill="#222"/><rect x="11.1" y="37.1" width="0.8" height="0.8" fill="#333"/><rect x="33.8" y="43.3" width="1.5" height="1.5" fill="#333"/><rect x="17.8" y="10.4" width="1.0" height="1.0" fill="#222"/><rect x="7.4" y="28.2" width="0.8" height="0.8" fill="#111"/><rect x="14.6" y="33.2" width="0.8" height="0.8" fill="#111"/></svg></div><span class="t s" style="left:1667.2px;top:833.00px;font-size:16px;transform:scaleX(0.9861);">Change Segment</span><div style="position:absolute;left:1612px;top:866.12px;width:47px;height:46.5px;background:#e3e3e3;overflow:hidden;"><svg width="47" height="46.5" style="position:absolute;left:0;top:0"><rect x="32.1" y="28.2" width="0.8" height="0.8" fill="#111"/><rect x="13.1" y="34.4" width="0.8" height="0.8" fill="#333"/><rect x="23.0" y="7.6" width="1.0" height="1.0" fill="#111"/><rect x="25.9" y="25.0" width="0.8" height="0.8" fill="#333"/><rect x="14.9" y="19.5" width="1.5" height="1.5" fill="#333"/><rect x="6.0" y="33.9" width="1.5" height="1.5" fill="#333"/><rect x="31.1" y="8.4" width="0.8" height="0.8" fill="#333"/><rect x="42.5" y="34.3" width="1.0" height="1.0" fill="#333"/><rect x="33.8" y="14.7" width="1.0" height="1.0" fill="#333"/><rect x="32.6" y="41.1" width="1.5" height="1.5" fill="#555"/><rect x="22.5" y="3.9" width="1.0" height="1.0" fill="#555"/><rect x="20.8" y="5.6" width="0.8" height="0.8" fill="#555"/><rect x="21.5" y="5.7" width="1.2" height="1.2" fill="#111"/><rect x="11.4" y="31.2" width="1.5" height="1.5" fill="#333"/><rect x="29.7" y="5.3" width="0.8" height="0.8" fill="#555"/><rect x="2.2" y="37.2" width="1.5" height="1.5" fill="#555"/><rect x="32.3" y="18.2" width="1.5" height="1.5" fill="#222"/><rect x="28.3" y="31.7" width="1.0" height="1.0" fill="#222"/><rect x="40.9" y="33.6" width="1.5" height="1.5" fill="#555"/><rect x="35.7" y="23.8" width="1.2" height="1.2" fill="#111"/><rect x="27.3" y="7.4" width="1.2" height="1.2" fill="#555"/><rect x="29.0" y="4.5" width="0.8" height="0.8" fill="#333"/><rect x="26.2" y="16.8" width="1.0" height="1.0" fill="#555"/><rect x="27.9" y="14.2" width="0.8" height="0.8" fill="#555"/><rect x="16.2" y="30.8" width="0.8" height="0.8" fill="#333"/><rect x="16.0" y="32.2" width="1.5" height="1.5" fill="#333"/><rect x="7.1" y="32.2" width="1.5" height="1.5" fill="#222"/><rect x="25.4" y="12.6" width="1.2" height="1.2" fill="#111"/><rect x="10.6" y="29.4" width="0.8" height="0.8" fill="#111"/><rect x="16.5" y="16.5" width="1.0" height="1.0" fill="#111"/><rect x="22.5" y="7.3" width="1.0" height="1.0" fill="#222"/><rect x="14.4" y="37.2" width="1.5" height="1.5" fill="#333"/><rect x="21.2" y="42.5" width="1.5" height="1.5" fill="#555"/><rect x="17.3" y="22.4" width="1.5" height="1.5" fill="#333"/><rect x="28.4" y="7.6" width="1.0" height="1.0" fill="#111"/><rect x="9.1" y="38.1" width="1.5" height="1.5" fill="#555"/><rect x="25.0" y="23.9" width="1.2" height="1.2" fill="#222"/><rect x="35.0" y="34.8" width="0.8" height="0.8" fill="#555"/><rect x="28.7" y="17.7" width="1.2" height="1.2" fill="#111"/><rect x="33.8" y="13.7" width="1.2" height="1.2" fill="#555"/><rect x="26.4" y="29.3" width="0.8" height="0.8" fill="#111"/><rect x="15.4" y="25.2" width="1.2" height="1.2" fill="#111"/><rect x="23.5" y="14.7" width="1.2" height="1.2" fill="#555"/><rect x="20.2" y="14.1" width="1.5" height="1.5" fill="#555"/><rect x="8.1" y="40.4" width="1.5" height="1.5" fill="#555"/><rect x="24.4" y="41.7" width="1.0" height="1.0" fill="#333"/><rect x="42.7" y="36.9" width="1.5" height="1.5" fill="#555"/><rect x="31.9" y="31.0" width="1.5" height="1.5" fill="#333"/><rect x="38.8" y="28.0" width="1.5" height="1.5" fill="#555"/><rect x="33.2" y="28.3" width="1.2" height="1.2" fill="#222"/><rect x="25.1" y="10.9" width="1.0" height="1.0" fill="#333"/><rect x="10.5" y="33.7" width="0.8" height="0.8" fill="#111"/><rect x="7.0" y="42.7" width="1.0" height="1.0" fill="#222"/><rect x="16.1" y="15.9" width="1.0" height="1.0" fill="#222"/><rect x="19.4" y="19.8" width="0.8" height="0.8" fill="#333"/><rect x="31.7" y="12.6" width="0.8" height="0.8" fill="#555"/><rect x="17.6" y="19.4" width="1.5" height="1.5" fill="#222"/><rect x="25.3" y="30.9" width="0.8" height="0.8" fill="#555"/><rect x="24.2" y="6.8" width="1.2" height="1.2" fill="#555"/><rect x="39.0" y="41.8" width="1.5" height="1.5" fill="#111"/><rect x="29.6" y="35.9" width="1.2" height="1.2" fill="#111"/><rect x="25.1" y="8.8" width="1.5" height="1.5" fill="#333"/><rect x="28.8" y="42.2" width="1.2" height="1.2" fill="#222"/><rect x="19.0" y="18.5" width="1.0" height="1.0" fill="#555"/><rect x="37.4" y="28.5" width="1.5" height="1.5" fill="#111"/><rect x="15.9" y="20.5" width="1.2" height="1.2" fill="#111"/><rect x="17.6" y="42.4" width="1.0" height="1.0" fill="#555"/><rect x="15.5" y="33.0" width="1.2" height="1.2" fill="#111"/><rect x="28.7" y="3.8" width="1.2" height="1.2" fill="#111"/><rect x="6.6" y="40.6" width="0.8" height="0.8" fill="#222"/><rect x="40.5" y="29.7" width="1.0" height="1.0" fill="#555"/><rect x="19.0" y="4.6" width="1.5" height="1.5" fill="#222"/><rect x="25.3" y="22.5" width="1.0" height="1.0" fill="#111"/><rect x="12.9" y="34.7" width="1.2" height="1.2" fill="#333"/><rect x="15.1" y="32.2" width="1.5" height="1.5" fill="#111"/><rect x="34.9" y="24.0" width="0.8" height="0.8" fill="#222"/><rect x="15.4" y="33.8" width="1.2" height="1.2" fill="#555"/><rect x="4.7" y="32.6" width="1.2" height="1.2" fill="#555"/><rect x="35.3" y="30.6" width="1.0" height="1.0" fill="#222"/><rect x="24.1" y="3.1" width="0.8" height="0.8" fill="#333"/><rect x="26.7" y="3.6" width="1.5" height="1.5" fill="#111"/><rect x="38.7" y="37.8" width="1.5" height="1.5" fill="#111"/><rect x="31.8" y="30.6" width="1.2" height="1.2" fill="#111"/><rect x="4.6" y="36.6" width="0.8" height="0.8" fill="#111"/><rect x="28.5" y="26.6" width="1.5" height="1.5" fill="#555"/><rect x="23.1" y="8.8" width="1.5" height="1.5" fill="#555"/><rect x="21.1" y="24.8" width="0.8" height="0.8" fill="#222"/><rect x="14.3" y="32.7" width="0.8" height="0.8" fill="#222"/><rect x="6.0" y="29.9" width="1.5" height="1.5" fill="#222"/><rect x="33.6" y="43.4" width="0.8" height="0.8" fill="#222"/><rect x="11.1" y="37.1" width="0.8" height="0.8" fill="#333"/><rect x="33.8" y="43.3" width="1.5" height="1.5" fill="#333"/><rect x="17.8" y="10.4" width="1.0" height="1.0" fill="#222"/><rect x="7.4" y="28.2" width="0.8" height="0.8" fill="#111"/><rect x="14.6" y="33.2" width="0.8" height="0.8" fill="#111"/></svg></div><span class="t s" style="left:1667.2px;top:883.00px;font-size:16px;transform:scaleX(0.9861);">Change Segment</span><div style="position:absolute;left:1612px;top:915.84px;width:47px;height:46.5px;background:#e3e3e3;overflow:hidden;"><svg width="47" height="46.5" style="position:absolute;left:0;top:0"><rect x="32.1" y="28.2" width="0.8" height="0.8" fill="#111"/><rect x="13.1" y="34.4" width="0.8" height="0.8" fill="#333"/><rect x="23.0" y="7.6" width="1.0" height="1.0" fill="#111"/><rect x="25.9" y="25.0" width="0.8" height="0.8" fill="#333"/><rect x="14.9" y="19.5" width="1.5" height="1.5" fill="#333"/><rect x="6.0" y="33.9" width="1.5" height="1.5" fill="#333"/><rect x="31.1" y="8.4" width="0.8" height="0.8" fill="#333"/><rect x="42.5" y="34.3" width="1.0" height="1.0" fill="#333"/><rect x="33.8" y="14.7" width="1.0" height="1.0" fill="#333"/><rect x="32.6" y="41.1" width="1.5" height="1.5" fill="#555"/><rect x="22.5" y="3.9" width="1.0" height="1.0" fill="#555"/><rect x="20.8" y="5.6" width="0.8" height="0.8" fill="#555"/><rect x="21.5" y="5.7" width="1.2" height="1.2" fill="#111"/><rect x="11.4" y="31.2" width="1.5" height="1.5" fill="#333"/><rect x="29.7" y="5.3" width="0.8" height="0.8" fill="#555"/><rect x="2.2" y="37.2" width="1.5" height="1.5" fill="#555"/><rect x="32.3" y="18.2" width="1.5" height="1.5" fill="#222"/><rect x="28.3" y="31.7" width="1.0" height="1.0" fill="#222"/><rect x="40.9" y="33.6" width="1.5" height="1.5" fill="#555"/><rect x="35.7" y="23.8" width="1.2" height="1.2" fill="#111"/><rect x="27.3" y="7.4" width="1.2" height="1.2" fill="#555"/><rect x="29.0" y="4.5" width="0.8" height="0.8" fill="#333"/><rect x="26.2" y="16.8" width="1.0" height="1.0" fill="#555"/><rect x="27.9" y="14.2" width="0.8" height="0.8" fill="#555"/><rect x="16.2" y="30.8" width="0.8" height="0.8" fill="#333"/><rect x="16.0" y="32.2" width="1.5" height="1.5" fill="#333"/><rect x="7.1" y="32.2" width="1.5" height="1.5" fill="#222"/><rect x="25.4" y="12.6" width="1.2" height="1.2" fill="#111"/><rect x="10.6" y="29.4" width="0.8" height="0.8" fill="#111"/><rect x="16.5" y="16.5" width="1.0" height="1.0" fill="#111"/><rect x="22.5" y="7.3" width="1.0" height="1.0" fill="#222"/><rect x="14.4" y="37.2" width="1.5" height="1.5" fill="#333"/><rect x="21.2" y="42.5" width="1.5" height="1.5" fill="#555"/><rect x="17.3" y="22.4" width="1.5" height="1.5" fill="#333"/><rect x="28.4" y="7.6" width="1.0" height="1.0" fill="#111"/><rect x="9.1" y="38.1" width="1.5" height="1.5" fill="#555"/><rect x="25.0" y="23.9" width="1.2" height="1.2" fill="#222"/><rect x="35.0" y="34.8" width="0.8" height="0.8" fill="#555"/><rect x="28.7" y="17.7" width="1.2" height="1.2" fill="#111"/><rect x="33.8" y="13.7" width="1.2" height="1.2" fill="#555"/><rect x="26.4" y="29.3" width="0.8" height="0.8" fill="#111"/><rect x="15.4" y="25.2" width="1.2" height="1.2" fill="#111"/><rect x="23.5" y="14.7" width="1.2" height="1.2" fill="#555"/><rect x="20.2" y="14.1" width="1.5" height="1.5" fill="#555"/><rect x="8.1" y="40.4" width="1.5" height="1.5" fill="#555"/><rect x="24.4" y="41.7" width="1.0" height="1.0" fill="#333"/><rect x="42.7" y="36.9" width="1.5" height="1.5" fill="#555"/><rect x="31.9" y="31.0" width="1.5" height="1.5" fill="#333"/><rect x="38.8" y="28.0" width="1.5" height="1.5" fill="#555"/><rect x="33.2" y="28.3" width="1.2" height="1.2" fill="#222"/><rect x="25.1" y="10.9" width="1.0" height="1.0" fill="#333"/><rect x="10.5" y="33.7" width="0.8" height="0.8" fill="#111"/><rect x="7.0" y="42.7" width="1.0" height="1.0" fill="#222"/><rect x="16.1" y="15.9" width="1.0" height="1.0" fill="#222"/><rect x="19.4" y="19.8" width="0.8" height="0.8" fill="#333"/><rect x="31.7" y="12.6" width="0.8" height="0.8" fill="#555"/><rect x="17.6" y="19.4" width="1.5" height="1.5" fill="#222"/><rect x="25.3" y="30.9" width="0.8" height="0.8" fill="#555"/><rect x="24.2" y="6.8" width="1.2" height="1.2" fill="#555"/><rect x="39.0" y="41.8" width="1.5" height="1.5" fill="#111"/><rect x="29.6" y="35.9" width="1.2" height="1.2" fill="#111"/><rect x="25.1" y="8.8" width="1.5" height="1.5" fill="#333"/><rect x="28.8" y="42.2" width="1.2" height="1.2" fill="#222"/><rect x="19.0" y="18.5" width="1.0" height="1.0" fill="#555"/><rect x="37.4" y="28.5" width="1.5" height="1.5" fill="#111"/><rect x="15.9" y="20.5" width="1.2" height="1.2" fill="#111"/><rect x="17.6" y="42.4" width="1.0" height="1.0" fill="#555"/><rect x="15.5" y="33.0" width="1.2" height="1.2" fill="#111"/><rect x="28.7" y="3.8" width="1.2" height="1.2" fill="#111"/><rect x="6.6" y="40.6" width="0.8" height="0.8" fill="#222"/><rect x="40.5" y="29.7" width="1.0" height="1.0" fill="#555"/><rect x="19.0" y="4.6" width="1.5" height="1.5" fill="#222"/><rect x="25.3" y="22.5" width="1.0" height="1.0" fill="#111"/><rect x="12.9" y="34.7" width="1.2" height="1.2" fill="#333"/><rect x="15.1" y="32.2" width="1.5" height="1.5" fill="#111"/><rect x="34.9" y="24.0" width="0.8" height="0.8" fill="#222"/><rect x="15.4" y="33.8" width="1.2" height="1.2" fill="#555"/><rect x="4.7" y="32.6" width="1.2" height="1.2" fill="#555"/><rect x="35.3" y="30.6" width="1.0" height="1.0" fill="#222"/><rect x="24.1" y="3.1" width="0.8" height="0.8" fill="#333"/><rect x="26.7" y="3.6" width="1.5" height="1.5" fill="#111"/><rect x="38.7" y="37.8" width="1.5" height="1.5" fill="#111"/><rect x="31.8" y="30.6" width="1.2" height="1.2" fill="#111"/><rect x="4.6" y="36.6" width="0.8" height="0.8" fill="#111"/><rect x="28.5" y="26.6" width="1.5" height="1.5" fill="#555"/><rect x="23.1" y="8.8" width="1.5" height="1.5" fill="#555"/><rect x="21.1" y="24.8" width="0.8" height="0.8" fill="#222"/><rect x="14.3" y="32.7" width="0.8" height="0.8" fill="#222"/><rect x="6.0" y="29.9" width="1.5" height="1.5" fill="#222"/><rect x="33.6" y="43.4" width="0.8" height="0.8" fill="#222"/><rect x="11.1" y="37.1" width="0.8" height="0.8" fill="#333"/><rect x="33.8" y="43.3" width="1.5" height="1.5" fill="#333"/><rect x="17.8" y="10.4" width="1.0" height="1.0" fill="#222"/><rect x="7.4" y="28.2" width="0.8" height="0.8" fill="#111"/><rect x="14.6" y="33.2" width="0.8" height="0.8" fill="#111"/></svg></div><span class="t s" style="left:1667.2px;top:933.00px;font-size:16px;transform:scaleX(1.0234);">Insert points</span><div style="position:absolute;left:1612px;top:965.56px;width:47px;height:46.5px;background:#e3e3e3;overflow:hidden;"><svg width="47" height="46.5" style="position:absolute;left:0;top:0"><rect x="32.1" y="28.2" width="0.8" height="0.8" fill="#111"/><rect x="13.1" y="34.4" width="0.8" height="0.8" fill="#333"/><rect x="23.0" y="7.6" width="1.0" height="1.0" fill="#111"/><rect x="25.9" y="25.0" width="0.8" height="0.8" fill="#333"/><rect x="14.9" y="19.5" width="1.5" height="1.5" fill="#333"/><rect x="6.0" y="33.9" width="1.5" height="1.5" fill="#333"/><rect x="31.1" y="8.4" width="0.8" height="0.8" fill="#333"/><rect x="42.5" y="34.3" width="1.0" height="1.0" fill="#333"/><rect x="33.8" y="14.7" width="1.0" height="1.0" fill="#333"/><rect x="32.6" y="41.1" width="1.5" height="1.5" fill="#555"/><rect x="22.5" y="3.9" width="1.0" height="1.0" fill="#555"/><rect x="20.8" y="5.6" width="0.8" height="0.8" fill="#555"/><rect x="21.5" y="5.7" width="1.2" height="1.2" fill="#111"/><rect x="11.4" y="31.2" width="1.5" height="1.5" fill="#333"/><rect x="29.7" y="5.3" width="0.8" height="0.8" fill="#555"/><rect x="2.2" y="37.2" width="1.5" height="1.5" fill="#555"/><rect x="32.3" y="18.2" width="1.5" height="1.5" fill="#222"/><rect x="28.3" y="31.7" width="1.0" height="1.0" fill="#222"/><rect x="40.9" y="33.6" width="1.5" height="1.5" fill="#555"/><rect x="35.7" y="23.8" width="1.2" height="1.2" fill="#111"/><rect x="27.3" y="7.4" width="1.2" height="1.2" fill="#555"/><rect x="29.0" y="4.5" width="0.8" height="0.8" fill="#333"/><rect x="26.2" y="16.8" width="1.0" height="1.0" fill="#555"/><rect x="27.9" y="14.2" width="0.8" height="0.8" fill="#555"/><rect x="16.2" y="30.8" width="0.8" height="0.8" fill="#333"/><rect x="16.0" y="32.2" width="1.5" height="1.5" fill="#333"/><rect x="7.1" y="32.2" width="1.5" height="1.5" fill="#222"/><rect x="25.4" y="12.6" width="1.2" height="1.2" fill="#111"/><rect x="10.6" y="29.4" width="0.8" height="0.8" fill="#111"/><rect x="16.5" y="16.5" width="1.0" height="1.0" fill="#111"/><rect x="22.5" y="7.3" width="1.0" height="1.0" fill="#222"/><rect x="14.4" y="37.2" width="1.5" height="1.5" fill="#333"/><rect x="21.2" y="42.5" width="1.5" height="1.5" fill="#555"/><rect x="17.3" y="22.4" width="1.5" height="1.5" fill="#333"/><rect x="28.4" y="7.6" width="1.0" height="1.0" fill="#111"/><rect x="9.1" y="38.1" width="1.5" height="1.5" fill="#555"/><rect x="25.0" y="23.9" width="1.2" height="1.2" fill="#222"/><rect x="35.0" y="34.8" width="0.8" height="0.8" fill="#555"/><rect x="28.7" y="17.7" width="1.2" height="1.2" fill="#111"/><rect x="33.8" y="13.7" width="1.2" height="1.2" fill="#555"/><rect x="26.4" y="29.3" width="0.8" height="0.8" fill="#111"/><rect x="15.4" y="25.2" width="1.2" height="1.2" fill="#111"/><rect x="23.5" y="14.7" width="1.2" height="1.2" fill="#555"/><rect x="20.2" y="14.1" width="1.5" height="1.5" fill="#555"/><rect x="8.1" y="40.4" width="1.5" height="1.5" fill="#555"/><rect x="24.4" y="41.7" width="1.0" height="1.0" fill="#333"/><rect x="42.7" y="36.9" width="1.5" height="1.5" fill="#555"/><rect x="31.9" y="31.0" width="1.5" height="1.5" fill="#333"/><rect x="38.8" y="28.0" width="1.5" height="1.5" fill="#555"/><rect x="33.2" y="28.3" width="1.2" height="1.2" fill="#222"/><rect x="25.1" y="10.9" width="1.0" height="1.0" fill="#333"/><rect x="10.5" y="33.7" width="0.8" height="0.8" fill="#111"/><rect x="7.0" y="42.7" width="1.0" height="1.0" fill="#222"/><rect x="16.1" y="15.9" width="1.0" height="1.0" fill="#222"/><rect x="19.4" y="19.8" width="0.8" height="0.8" fill="#333"/><rect x="31.7" y="12.6" width="0.8" height="0.8" fill="#555"/><rect x="17.6" y="19.4" width="1.5" height="1.5" fill="#222"/><rect x="25.3" y="30.9" width="0.8" height="0.8" fill="#555"/><rect x="24.2" y="6.8" width="1.2" height="1.2" fill="#555"/><rect x="39.0" y="41.8" width="1.5" height="1.5" fill="#111"/><rect x="29.6" y="35.9" width="1.2" height="1.2" fill="#111"/><rect x="25.1" y="8.8" width="1.5" height="1.5" fill="#333"/><rect x="28.8" y="42.2" width="1.2" height="1.2" fill="#222"/><rect x="19.0" y="18.5" width="1.0" height="1.0" fill="#555"/><rect x="37.4" y="28.5" width="1.5" height="1.5" fill="#111"/><rect x="15.9" y="20.5" width="1.2" height="1.2" fill="#111"/><rect x="17.6" y="42.4" width="1.0" height="1.0" fill="#555"/><rect x="15.5" y="33.0" width="1.2" height="1.2" fill="#111"/><rect x="28.7" y="3.8" width="1.2" height="1.2" fill="#111"/><rect x="6.6" y="40.6" width="0.8" height="0.8" fill="#222"/><rect x="40.5" y="29.7" width="1.0" height="1.0" fill="#555"/><rect x="19.0" y="4.6" width="1.5" height="1.5" fill="#222"/><rect x="25.3" y="22.5" width="1.0" height="1.0" fill="#111"/><rect x="12.9" y="34.7" width="1.2" height="1.2" fill="#333"/><rect x="15.1" y="32.2" width="1.5" height="1.5" fill="#111"/><rect x="34.9" y="24.0" width="0.8" height="0.8" fill="#222"/><rect x="15.4" y="33.8" width="1.2" height="1.2" fill="#555"/><rect x="4.7" y="32.6" width="1.2" height="1.2" fill="#555"/><rect x="35.3" y="30.6" width="1.0" height="1.0" fill="#222"/><rect x="24.1" y="3.1" width="0.8" height="0.8" fill="#333"/><rect x="26.7" y="3.6" width="1.5" height="1.5" fill="#111"/><rect x="38.7" y="37.8" width="1.5" height="1.5" fill="#111"/><rect x="31.8" y="30.6" width="1.2" height="1.2" fill="#111"/><rect x="4.6" y="36.6" width="0.8" height="0.8" fill="#111"/><rect x="28.5" y="26.6" width="1.5" height="1.5" fill="#555"/><rect x="23.1" y="8.8" width="1.5" height="1.5" fill="#555"/><rect x="21.1" y="24.8" width="0.8" height="0.8" fill="#222"/><rect x="14.3" y="32.7" width="0.8" height="0.8" fill="#222"/><rect x="6.0" y="29.9" width="1.5" height="1.5" fill="#222"/><rect x="33.6" y="43.4" width="0.8" height="0.8" fill="#222"/><rect x="11.1" y="37.1" width="0.8" height="0.8" fill="#333"/><rect x="33.8" y="43.3" width="1.5" height="1.5" fill="#333"/><rect x="17.8" y="10.4" width="1.0" height="1.0" fill="#222"/><rect x="7.4" y="28.2" width="0.8" height="0.8" fill="#111"/><rect x="14.6" y="33.2" width="0.8" height="0.8" fill="#111"/></svg></div><span class="t s" style="left:1667.2px;top:982.00px;font-size:16px;transform:scaleX(0.9861);">Change Segment</span><div style="position:absolute;left:1607.5px;top:1014.3px;width:357px;height:50px;background:linear-gradient(#52769c,#4d7096);border-left:3.5px solid #456a92;"></div><div style="position:absolute;left:1612px;top:1015.28px;width:47px;height:46px;background:#bccbdb;overflow:hidden;"><svg width="47" height="46" style="position:absolute;left:0;top:0"><rect x="32.1" y="28.2" width="0.8" height="0.8" fill="#111"/><rect x="13.1" y="34.4" width="0.8" height="0.8" fill="#333"/><rect x="23.0" y="7.6" width="1.0" height="1.0" fill="#111"/><rect x="25.9" y="25.0" width="0.8" height="0.8" fill="#333"/><rect x="14.9" y="19.5" width="1.5" height="1.5" fill="#333"/><rect x="6.0" y="33.9" width="1.5" height="1.5" fill="#333"/><rect x="31.1" y="8.4" width="0.8" height="0.8" fill="#333"/><rect x="42.5" y="34.3" width="1.0" height="1.0" fill="#333"/><rect x="33.8" y="14.7" width="1.0" height="1.0" fill="#333"/><rect x="32.6" y="41.1" width="1.5" height="1.5" fill="#555"/><rect x="22.5" y="3.9" width="1.0" height="1.0" fill="#555"/><rect x="20.8" y="5.6" width="0.8" height="0.8" fill="#555"/><rect x="21.5" y="5.7" width="1.2" height="1.2" fill="#111"/><rect x="11.4" y="31.2" width="1.5" height="1.5" fill="#333"/><rect x="29.7" y="5.3" width="0.8" height="0.8" fill="#555"/><rect x="2.2" y="37.2" width="1.5" height="1.5" fill="#555"/><rect x="32.3" y="18.2" width="1.5" height="1.5" fill="#222"/><rect x="28.3" y="31.7" width="1.0" height="1.0" fill="#222"/><rect x="40.9" y="33.6" width="1.5" height="1.5" fill="#555"/><rect x="35.7" y="23.8" width="1.2" height="1.2" fill="#111"/><rect x="27.3" y="7.4" width="1.2" height="1.2" fill="#555"/><rect x="29.0" y="4.5" width="0.8" height="0.8" fill="#333"/><rect x="26.2" y="16.8" width="1.0" height="1.0" fill="#555"/><rect x="27.9" y="14.2" width="0.8" height="0.8" fill="#555"/><rect x="16.2" y="30.8" width="0.8" height="0.8" fill="#333"/><rect x="16.0" y="32.2" width="1.5" height="1.5" fill="#333"/><rect x="7.1" y="32.2" width="1.5" height="1.5" fill="#222"/><rect x="25.4" y="12.6" width="1.2" height="1.2" fill="#111"/><rect x="10.6" y="29.4" width="0.8" height="0.8" fill="#111"/><rect x="16.5" y="16.5" width="1.0" height="1.0" fill="#111"/><rect x="22.5" y="7.3" width="1.0" height="1.0" fill="#222"/><rect x="14.4" y="37.2" width="1.5" height="1.5" fill="#333"/><rect x="21.2" y="42.5" width="1.5" height="1.5" fill="#555"/><rect x="17.3" y="22.4" width="1.5" height="1.5" fill="#333"/><rect x="28.4" y="7.6" width="1.0" height="1.0" fill="#111"/><rect x="9.1" y="38.1" width="1.5" height="1.5" fill="#555"/><rect x="25.0" y="23.9" width="1.2" height="1.2" fill="#222"/><rect x="35.0" y="34.8" width="0.8" height="0.8" fill="#555"/><rect x="28.7" y="17.7" width="1.2" height="1.2" fill="#111"/><rect x="33.8" y="13.7" width="1.2" height="1.2" fill="#555"/><rect x="26.4" y="29.3" width="0.8" height="0.8" fill="#111"/><rect x="15.4" y="25.2" width="1.2" height="1.2" fill="#111"/><rect x="23.5" y="14.7" width="1.2" height="1.2" fill="#555"/><rect x="20.2" y="14.1" width="1.5" height="1.5" fill="#555"/><rect x="8.1" y="40.4" width="1.5" height="1.5" fill="#555"/><rect x="24.4" y="41.7" width="1.0" height="1.0" fill="#333"/><rect x="42.7" y="36.9" width="1.5" height="1.5" fill="#555"/><rect x="31.9" y="31.0" width="1.5" height="1.5" fill="#333"/><rect x="38.8" y="28.0" width="1.5" height="1.5" fill="#555"/><rect x="33.2" y="28.3" width="1.2" height="1.2" fill="#222"/><rect x="25.1" y="10.9" width="1.0" height="1.0" fill="#333"/><rect x="10.5" y="33.7" width="0.8" height="0.8" fill="#111"/><rect x="7.0" y="42.7" width="1.0" height="1.0" fill="#222"/><rect x="16.1" y="15.9" width="1.0" height="1.0" fill="#222"/><rect x="19.4" y="19.8" width="0.8" height="0.8" fill="#333"/><rect x="31.7" y="12.6" width="0.8" height="0.8" fill="#555"/><rect x="17.6" y="19.4" width="1.5" height="1.5" fill="#222"/><rect x="25.3" y="30.9" width="0.8" height="0.8" fill="#555"/><rect x="24.2" y="6.8" width="1.2" height="1.2" fill="#555"/><rect x="39.0" y="41.8" width="1.5" height="1.5" fill="#111"/><rect x="29.6" y="35.9" width="1.2" height="1.2" fill="#111"/><rect x="25.1" y="8.8" width="1.5" height="1.5" fill="#333"/><rect x="28.8" y="42.2" width="1.2" height="1.2" fill="#222"/><rect x="19.0" y="18.5" width="1.0" height="1.0" fill="#555"/><rect x="37.4" y="28.5" width="1.5" height="1.5" fill="#111"/><rect x="15.9" y="20.5" width="1.2" height="1.2" fill="#111"/><rect x="17.6" y="42.4" width="1.0" height="1.0" fill="#555"/><rect x="15.5" y="33.0" width="1.2" height="1.2" fill="#111"/><rect x="28.7" y="3.8" width="1.2" height="1.2" fill="#111"/><rect x="6.6" y="40.6" width="0.8" height="0.8" fill="#222"/><rect x="40.5" y="29.7" width="1.0" height="1.0" fill="#555"/><rect x="19.0" y="4.6" width="1.5" height="1.5" fill="#222"/><rect x="25.3" y="22.5" width="1.0" height="1.0" fill="#111"/><rect x="12.9" y="34.7" width="1.2" height="1.2" fill="#333"/><rect x="15.1" y="32.2" width="1.5" height="1.5" fill="#111"/><rect x="34.9" y="24.0" width="0.8" height="0.8" fill="#222"/><rect x="15.4" y="33.8" width="1.2" height="1.2" fill="#555"/><rect x="4.7" y="32.6" width="1.2" height="1.2" fill="#555"/><rect x="35.3" y="30.6" width="1.0" height="1.0" fill="#222"/><rect x="24.1" y="3.1" width="0.8" height="0.8" fill="#333"/><rect x="26.7" y="3.6" width="1.5" height="1.5" fill="#111"/><rect x="38.7" y="37.8" width="1.5" height="1.5" fill="#111"/><rect x="31.8" y="30.6" width="1.2" height="1.2" fill="#111"/><rect x="4.6" y="36.6" width="0.8" height="0.8" fill="#111"/><rect x="28.5" y="26.6" width="1.5" height="1.5" fill="#555"/><rect x="23.1" y="8.8" width="1.5" height="1.5" fill="#555"/><rect x="21.1" y="24.8" width="0.8" height="0.8" fill="#222"/><rect x="14.3" y="32.7" width="0.8" height="0.8" fill="#222"/><rect x="6.0" y="29.9" width="1.5" height="1.5" fill="#222"/><rect x="33.6" y="43.4" width="0.8" height="0.8" fill="#222"/><rect x="11.1" y="37.1" width="0.8" height="0.8" fill="#333"/><rect x="33.8" y="43.3" width="1.5" height="1.5" fill="#333"/><rect x="17.8" y="10.4" width="1.0" height="1.0" fill="#222"/><rect x="7.4" y="28.2" width="0.8" height="0.8" fill="#111"/><rect x="14.6" y="33.2" width="0.8" height="0.8" fill="#111"/></svg></div><span class="t s" style="left:1667.2px;top:1032.00px;font-size:16px;transform:scaleX(0.9953);color:#f0f3f6;">Break subpath</span><div style="position:absolute;left:1964.5px;top:691px;width:20.5px;height:373.5px;background:#3d3d3d;"></div><div style="position:absolute;left:1965.5px;top:692.5px;width:18.5px;height:18.5px;border:1px solid #555;background:#414141;"><svg style="position:absolute;left:3.2px;top:5px;" width="11" height="6.5" viewBox="0 0 11 6.5"><path d="M0 6.5H11L5.5 0Z" fill="#b9b9b9"/></svg></div><div style="position:absolute;left:1965.5px;top:1044.5px;width:18.5px;height:18.5px;border:1px solid #555;background:#414141;"><svg style="position:absolute;left:3.2px;top:6px;" width="11" height="6.5" viewBox="0 0 11 6.5"><path d="M0 0H11L5.5 6.5Z" fill="#b9b9b9"/></svg></div><div style="position:absolute;left:1965.5px;top:1005.5px;width:18.5px;height:36.5px;border:1px solid #595959;background:#464646;border-radius:2px;"></div><svg style="position:absolute;left:24.5px;top:1076.5px;" width="22" height="22" viewBox="0 0 22 22"><rect x="1" y="1" width="20" height="20" fill="none" stroke="#cfcfcf" stroke-width="1.4"/><circle cx="11" cy="11" r="6.2" fill="none" stroke="#cfcfcf" stroke-width="1.5" stroke-dasharray="1.5 1.6"/></svg><span class="t s" style="left:388.7px;top:1080.00px;font-size:17.5px;transform:scaleX(1.0048);">RGB/Alpha (8-bit integer/ch…)  sRGB-elle-V2-srgbtrc.icc</span><div style="position:absolute;left:1279px;top:1072px;width:211.5px;height:32px;border:1px solid #5a5a5a;border-radius:3px;box-shadow:0 0 0 1px #3a3a3a inset;"></div><span class="t s" style="left:1283.7px;top:1080.00px;font-size:17.5px;transform:scaleX(0.9992);">3,403 <u style="text-underline-offset:3px;text-decoration-thickness:1.4px">x</u> 4,454 (226.0 MiB)</span><div style="position:absolute;left:1490px;top:1060px;width:420px;height:48.5px;overflow:hidden;"><span class="t s" style="left:38.2px;top:3.00px;font-size:44px;transform:scaleX(1.1345);color:#1e1e1e;font-weight:bold;-webkit-text-stroke:2.2px #1e1e1e;opacity:.5;">madebyromeo</span></div><div style="position:absolute;left:1501px;top:1073px;width:30.5px;height:30.5px;border-radius:50%;background:#2d2d2d;"></div><svg style="position:absolute;left:1513px;top:1083px;" width="22" height="10" viewBox="0 0 22 10"><path d="M2 5H19" stroke="#efefef" stroke-width="1.4"/><path d="M0.5 5L4 2.2V7.8Z M20.5 5L17 2.2V7.8Z" fill="#efefef"/></svg><span class="t s" style="left:1544.7px;top:1080.00px;font-size:17.5px;transform:scaleX(1.0522);color:#cdcdcd;">0.00°</span><span class="t s" style="left:1753.7px;top:1080.00px;font-size:17.5px;transform:scaleX(0.9714);color:#cdcdcd;">12.5%</span><div style="position:absolute;left:1827px;top:1086.5px;width:120px;height:3.5px;background:#353535;border-radius:2px;"></div><div style="position:absolute;left:1827px;top:1086px;width:16px;height:4.5px;background:#55789e;border-radius:2px;"></div><div style="position:absolute;left:1842px;top:1079px;width:15.5px;height:19px;border:1px solid #666;border-radius:3px;background:linear-gradient(#555,#454545);"></div><svg style="position:absolute;left:1954px;top:1080px;" width="26" height="20" viewBox="0 0 26 20"><rect x="1" y="1" width="23.5" height="13.5" fill="none" stroke="#d2d2d2" stroke-width="1.5"/><path d="M12.8 14.5V18.5M6.5 18.8H19" stroke="#d2d2d2" stroke-width="1.5"/><circle cx="12.8" cy="7.8" r="1.4" fill="#d2d2d2"/></svg></body></html>
